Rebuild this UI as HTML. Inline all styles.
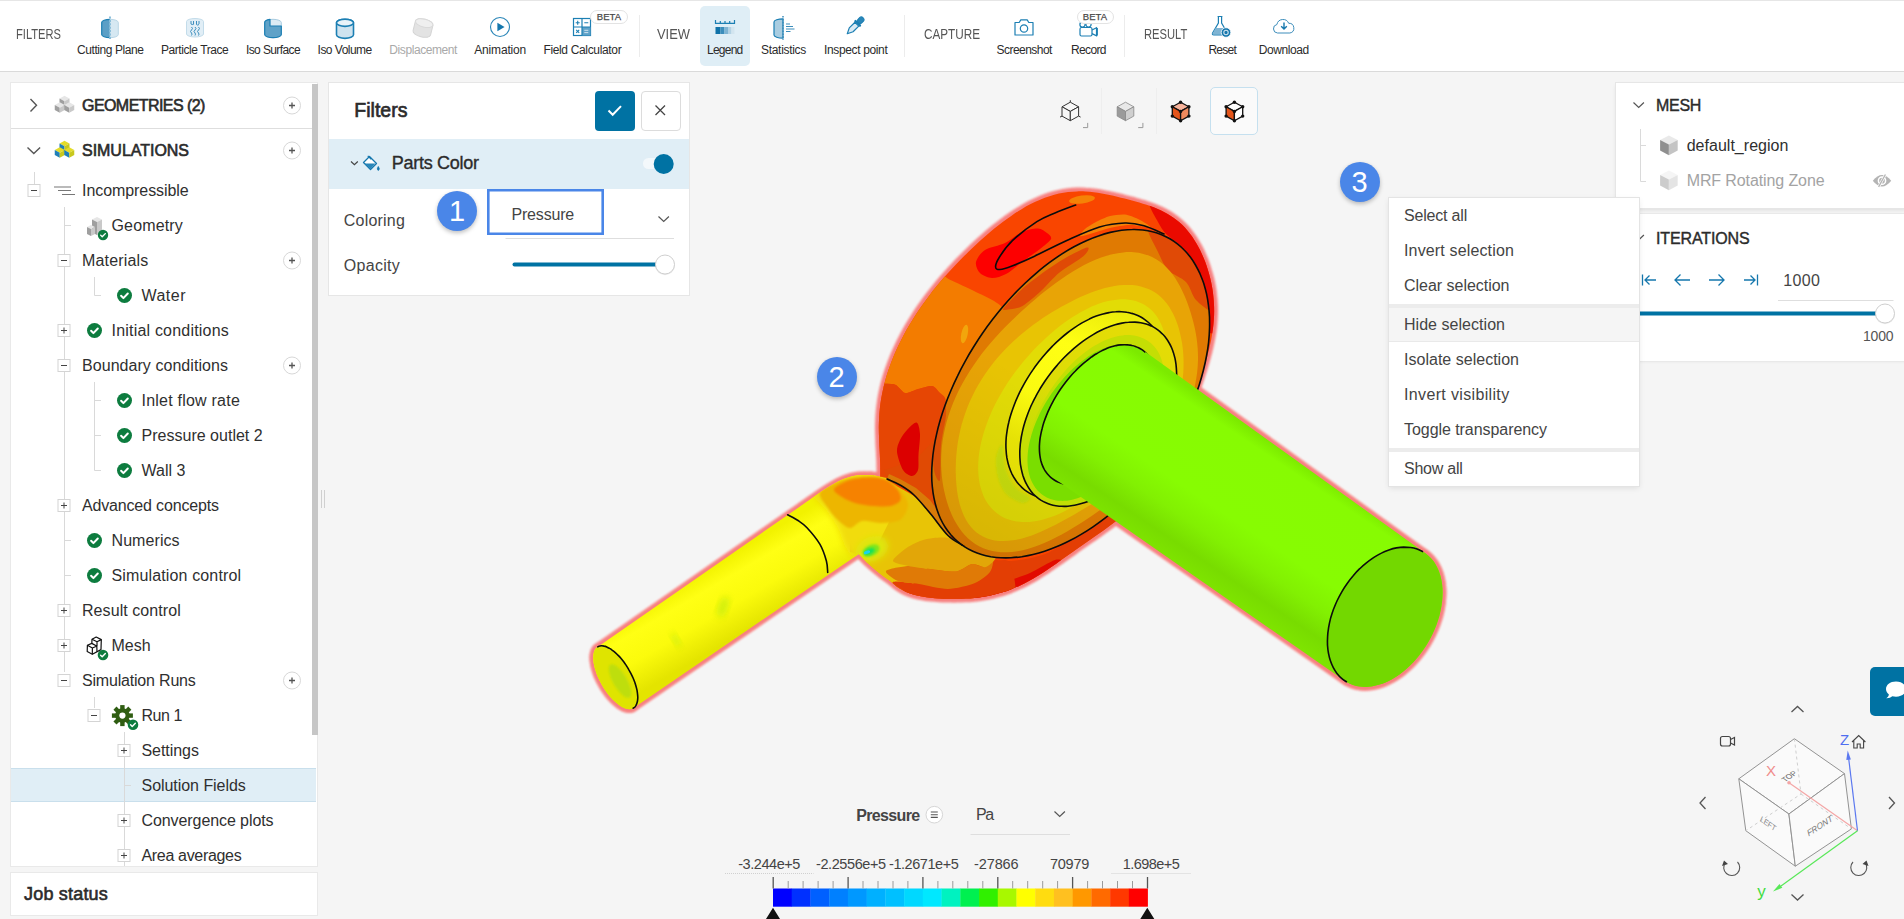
<!DOCTYPE html>
<html><head><meta charset="utf-8"><title>SimScale Post-processor</title>
<style>
html,body{margin:0;padding:0;background:#f5f5f5;}
body{width:1904px;height:919px;overflow:hidden;position:relative;font-family:"Liberation Sans",sans-serif;}
.t{position:absolute;white-space:nowrap;}
.r{position:absolute;}
svg{position:absolute;overflow:visible;}
</style></head><body>
<div class="r" style="left:0px;top:0px;width:1904px;height:70px;background:#fff;border-bottom:1px solid #dadada;border-top:1px solid #e6e6e6;box-sizing:content-box;height:69.5px;"></div>
<div class="t" style="left:15.5px;top:25.3px;font-size:14.5px;line-height:18.12px;color:#555;transform-origin:0 50%;transform:scaleX(0.7686);">FILTERS</div>
<div class="t" style="left:657.0px;top:25.3px;font-size:14.5px;line-height:18.12px;color:#555;transform-origin:0 50%;transform:scaleX(0.8905);">VIEW</div>
<div class="t" style="left:924.0px;top:25.3px;font-size:14.5px;line-height:18.12px;color:#555;transform-origin:0 50%;transform:scaleX(0.8082);">CAPTURE</div>
<div class="t" style="left:1143.7px;top:25.3px;font-size:14.5px;line-height:18.12px;color:#555;transform-origin:0 50%;transform:scaleX(0.7714);">RESULT</div>
<div class="r" style="left:638.5px;top:15px;width:1px;height:42px;background:#ececec;"></div>
<div class="r" style="left:904px;top:15px;width:1px;height:42px;background:#ececec;"></div>
<div class="r" style="left:1123.5px;top:15px;width:1px;height:42px;background:#ececec;"></div>
<div class="r" style="left:700px;top:6px;width:50px;height:59.5px;background:#dfeef6;border-radius:5px;"></div>
<div class="t" style="left:77.0px;top:42.5px;font-size:12px;line-height:15.00px;color:#2b2b2b;letter-spacing:-0.427px;">Cutting Plane</div>
<div class="t" style="left:161.0px;top:42.5px;font-size:12px;line-height:15.00px;color:#2b2b2b;letter-spacing:-0.433px;">Particle Trace</div>
<div class="t" style="left:246.0px;top:42.5px;font-size:12px;line-height:15.00px;color:#2b2b2b;letter-spacing:-0.609px;">Iso Surface</div>
<div class="t" style="left:317.6px;top:42.5px;font-size:12px;line-height:15.00px;color:#2b2b2b;letter-spacing:-0.527px;">Iso Volume</div>
<div class="t" style="left:389.3px;top:42.5px;font-size:12px;line-height:15.00px;color:#a9a9a9;letter-spacing:-0.417px;">Displacement</div>
<div class="t" style="left:474.3px;top:42.5px;font-size:12px;line-height:15.00px;color:#2b2b2b;letter-spacing:-0.185px;">Animation</div>
<div class="t" style="left:543.4px;top:42.5px;font-size:12px;line-height:15.00px;color:#2b2b2b;letter-spacing:-0.342px;">Field Calculator</div>
<div class="t" style="left:707.0px;top:42.5px;font-size:12px;line-height:15.00px;color:#2b2b2b;letter-spacing:-0.757px;">Legend</div>
<div class="t" style="left:761.0px;top:42.5px;font-size:12px;line-height:15.00px;color:#2b2b2b;letter-spacing:-0.301px;">Statistics</div>
<div class="t" style="left:824.0px;top:42.5px;font-size:12px;line-height:15.00px;color:#2b2b2b;letter-spacing:-0.357px;">Inspect point</div>
<div class="t" style="left:996.6px;top:42.5px;font-size:12px;line-height:15.00px;color:#2b2b2b;letter-spacing:-0.551px;">Screenshot</div>
<div class="t" style="left:1071.0px;top:42.5px;font-size:12px;line-height:15.00px;color:#2b2b2b;letter-spacing:-0.648px;">Record</div>
<div class="t" style="left:1208.4px;top:42.5px;font-size:12px;line-height:15.00px;color:#2b2b2b;letter-spacing:-0.750px;">Reset</div>
<div class="t" style="left:1258.8px;top:42.5px;font-size:12px;line-height:15.00px;color:#2b2b2b;letter-spacing:-0.421px;">Download</div>
<svg width="1904" height="70" style="left:0;top:0"><g transform="translate(110,28.5)"><path d="M-8.3,-6 v12 a8.3,3.2 0 0 0 8.3,3.2 v-18.4 a8.3,3.2 0 0 0 -8.3,3.2z" fill="#5b9fc6" stroke="#1c7fb3" stroke-width="1.2"/><path d="M0,9.2 a8.3,3.2 0 0 0 8.3,-3.2 v-12 a8.3,3.2 0 0 0 -8.3,-3.2z" fill="#d6e8f2" stroke="#b9d6e6" stroke-width="1"/><line x1="0" y1="-12" x2="0" y2="11.5" stroke="#86bcda" stroke-width="1.9" stroke-dasharray="2 1.4"/></g><g transform="translate(195,28)"><path d="M-8.5,-6.5 v12.5 a8.5,3 0 0 0 17,0 v-12.5 a8.5,3 0 0 0 -17,0z" fill="#e1eef6" stroke="#c3dcea" stroke-width="1"/><g stroke="#3f8fbe" stroke-width="1" fill="none"><path d="M-4,-7 v3 M-1.5,-7 v3.5 M1.5,-7 v3.5 M4,-7 v3 M-4,-4 q1.2,1.2 2.5,0 M1.5,-3.5 q1.2,1.2 2.5,0"/><path d="M-3.5,-1 q2,1.5 0,3 q-2,1.5 0,3 q1,1 0,2.5 M0,-1 q2,1.5 0,3 q-2,1.5 0,3 q1,1 0,2.5 M3.5,-1 q2,1.5 0,3 q-2,1.5 0,3 q1,1 0,2.5"/></g></g><g transform="translate(273,28.5)"><path d="M-8.3,-6 v12 a8.3,3.2 0 0 0 16.6,0 v-12 a8.3,3.2 0 0 0 -16.6,0z" fill="#dcebf4" stroke="#a9cce0" stroke-width="1"/><path d="M-8.3,-6 v12 a8.3,3.2 0 0 0 16.6,0 v-8.5 h-11.3 v-6.6 a8.3,3.2 0 0 0 -5.3,3.1z" fill="#5fa2c8" stroke="#1c7fb3" stroke-width="1.2" stroke-linejoin="round"/></g><g transform="translate(345,28.8)"><path d="M-8.5,-6 v12 a8.5,3.6 0 0 0 17,0 v-12 a8.5,3.6 0 0 0 -17,0z" fill="#cfe3ef" stroke="#1c7fb3" stroke-width="1.6"/><ellipse cx="0" cy="-6" rx="8.5" ry="3.6" fill="#e9f3f9" stroke="#1c7fb3" stroke-width="1.6"/></g><g transform="translate(423,28) rotate(14)"><path d="M-9,-5 v10 a9,4 0 0 0 18,0 v-10 a9,4 0 0 0 -18,0z" fill="#e3e3e3" stroke="#d4d4d4" stroke-width="1"/><ellipse cx="0" cy="-5" rx="9" ry="4" fill="#efefef" stroke="#d9d9d9" stroke-width="1"/></g><g transform="translate(500,27)"><circle r="9.5" fill="#fff" stroke="#2a86b8" stroke-width="1.1"/><path d="M-2.6,-4.2 L4.6,0 L-2.6,4.2z" fill="#1577ad"/></g><g transform="translate(582,27)"><rect x="-8.5" y="-8.5" width="17" height="17" fill="#fff" stroke="#1c7fb3" stroke-width="1.2"/><rect x="0" y="0" width="8.5" height="8.5" fill="#5fa2c8"/><path d="M0,-8.5 v17 M-8.5,0 h17" stroke="#1c7fb3" stroke-width="1.2"/><path d="M-6.3,-4.3 h4 M-4.3,-6.3 v4 M2.3,-4.3 h4 M-5.8,2.8 l3,3 M-2.8,2.8 l-3,3" stroke="#1c7fb3" stroke-width="1.1" fill="none"/><path d="M2.3,3.3 h4 M2.3,5.6 h4" stroke="#cfe3ef" stroke-width="1"/></g><g transform="translate(725,27)"><path d="M-9.5,-7 v3.3 h19 v-3.3 M-4.7,-6 v2.3 M0,-6 v2.3 M4.7,-6 v2.3" stroke="#1c7fb3" stroke-width="1.2" fill="none"/><rect x="-9.5" y="0" width="5" height="7" fill="#0f72a8"/><rect x="-4.5" y="0" width="4" height="7" fill="#3c8dbb"/><rect x="-0.5" y="0" width="4" height="7" fill="#7fb4d3"/><rect x="3.5" y="0" width="3" height="7" fill="#b3d2e4"/><rect x="6.5" y="0" width="3" height="7" fill="#d3e5ef"/></g><g transform="translate(783,28)"><path d="M0,-9.2 a9,3.2 0 0 0 -9,3.2 v13 a9,3.2 0 0 0 9,3.2z" fill="#a9cde1" stroke="#1c7fb3" stroke-width="1.2"/><line x1="0" y1="-12" x2="0" y2="12" stroke="#3c8dbb" stroke-width="1.5" stroke-dasharray="1.6 1.3"/><path d="M3,-4 h4 M3,-1.5 h7 M3,1 h8.5 M3,3.5 h4.5" stroke="#3c8dbb" stroke-width="1.1"/></g><g transform="translate(855,26) rotate(45)"><rect x="-2.6" y="-11.5" width="5.2" height="7" rx="2.4" fill="#2a86b8" stroke="#1c7fb3" stroke-width="1"/><rect x="-4.3" y="-5" width="8.6" height="2.4" rx="1" fill="#1c7fb3"/><path d="M-2.7,-2.6 h5.4 v8 l-2.7,5.5 l-2.7,-5.5z" fill="#d9eaf4" stroke="#1c7fb3" stroke-width="1.2" stroke-linejoin="round"/></g><g transform="translate(1024,28)" fill="none" stroke="#1c7fb3" stroke-width="1.2"><path d="M-9,-5.5 h4.2 l1.6,-2.6 h6.4 l1.6,2.6 h4.2 v12.5 h-18z" stroke-linejoin="round"/><circle cx="0" cy="0.5" r="3.7"/></g><g transform="translate(1088,31)" fill="none" stroke="#1c7fb3" stroke-width="1.2"><rect x="-8" y="-3.5" width="12" height="8.5" rx="1.5"/><path d="M4,-1 l4.5,-2.2 v8 l-4.5,-2.2"/><rect x="8.3" y="-3" width="1.6" height="7.6" fill="#1c7fb3" stroke="none"/><circle cx="-5.5" cy="-6.5" r="2.6"/><circle cx="0.5" cy="-6.5" r="2.6"/></g><g transform="translate(1220,27)"><path d="M-2.4,-10.5 h4.8 M-1.6,-10.5 v6.5 l-5.8,10 q-0.8,1.8 1.2,1.8 h12.4 q2,0 1.2,-1.8 l-5.8,-10 v-6.5" fill="none" stroke="#1c7fb3" stroke-width="1.2"/><path d="M-4.3,1 h8.6 l3,5.2 q0.6,1.3 -0.8,1.3 h-13 q-1.4,0 -0.8,-1.3z" fill="#7fb4d3"/><circle cx="6" cy="5.5" r="4.8" fill="#1577ad" stroke="#fff" stroke-width="0.8"/><circle cx="6" cy="5.5" r="2.2" fill="none" stroke="#cfe3ef" stroke-width="1.1"/></g><g transform="translate(1284,27)"><path d="M-6.5,6 a4.3,4.3 0 0 1 -0.6,-8.5 a6.2,6.2 0 0 1 11.8,-1.2 a4.9,4.9 0 0 1 1.2,9.7z" fill="#fff" stroke="#3c8dbb" stroke-width="1"/><path d="M0,-4.5 v5.5 M-2.8,-0.8 l2.8,2.8 l2.8,-2.8" fill="none" stroke="#1577ad" stroke-width="1.4"/></g></svg>
<div class="t" style="left:590px;top:9.5px;width:38px;height:14px;box-sizing:border-box;border:1px solid #e3e3e3;border-radius:8px;background:#fff;font-size:9.5px;line-height:12.5px;text-align:center;color:#4a4a4a;letter-spacing:0.1px;-webkit-text-stroke:0.25px #4a4a4a">BETA</div>
<div class="t" style="left:1076.5px;top:9.5px;width:37px;height:14px;box-sizing:border-box;border:1px solid #e3e3e3;border-radius:8px;background:#fff;font-size:9.5px;line-height:12.5px;text-align:center;color:#4a4a4a;letter-spacing:0.1px;-webkit-text-stroke:0.25px #4a4a4a">BETA</div>
<div class="r" style="left:11px;top:83px;width:306px;height:783px;background:#fff;box-shadow:0 0 0 1px #e9e9e9;"></div>
<div class="r" style="left:312px;top:84px;width:5.5px;height:651px;background:#c6c6c6;"></div>
<div class="r" style="left:11px;top:128px;width:301px;height:1px;background:#dedede;"></div>
<div class="r" style="left:11px;top:768px;width:305px;height:34px;background:#e0eef6;border-top:1px solid #c9dfec;border-bottom:1px solid #c9dfec;box-sizing:border-box;"></div>
<div class="t" style="left:82.0px;top:95.5px;font-size:16px;line-height:20.00px;color:#2b2b2b;letter-spacing:-0.563px;-webkit-text-stroke:0.6px #2b2b2b;">GEOMETRIES (2)</div>
<div class="t" style="left:82.0px;top:140.5px;font-size:16px;line-height:20.00px;color:#2b2b2b;letter-spacing:-0.025px;-webkit-text-stroke:0.6px #2b2b2b;">SIMULATIONS</div>
<div class="t" style="left:82.0px;top:180.5px;font-size:16px;line-height:20.00px;color:#2f2f2f;letter-spacing:-0.065px;">Incompressible</div>
<div class="t" style="left:111.5px;top:215.5px;font-size:16px;line-height:20.00px;color:#2f2f2f;letter-spacing:0.157px;">Geometry</div>
<div class="t" style="left:82.0px;top:250.5px;font-size:16px;line-height:20.00px;color:#2f2f2f;letter-spacing:0.177px;">Materials</div>
<div class="t" style="left:141.5px;top:285.5px;font-size:16px;line-height:20.00px;color:#2f2f2f;letter-spacing:0.484px;">Water</div>
<div class="t" style="left:111.5px;top:320.5px;font-size:16px;line-height:20.00px;color:#2f2f2f;letter-spacing:0.203px;">Initial conditions</div>
<div class="t" style="left:82.0px;top:355.5px;font-size:16px;line-height:20.00px;color:#2f2f2f;letter-spacing:0.053px;">Boundary conditions</div>
<div class="t" style="left:141.5px;top:390.5px;font-size:16px;line-height:20.00px;color:#2f2f2f;letter-spacing:0.223px;">Inlet flow rate</div>
<div class="t" style="left:141.5px;top:425.5px;font-size:16px;line-height:20.00px;color:#2f2f2f;letter-spacing:0.014px;">Pressure outlet 2</div>
<div class="t" style="left:141.5px;top:460.5px;font-size:16px;line-height:20.00px;color:#2f2f2f;letter-spacing:0.023px;">Wall 3</div>
<div class="t" style="left:82.0px;top:495.5px;font-size:16px;line-height:20.00px;color:#2f2f2f;letter-spacing:-0.168px;">Advanced concepts</div>
<div class="t" style="left:111.5px;top:530.5px;font-size:16px;line-height:20.00px;color:#2f2f2f;letter-spacing:0.079px;">Numerics</div>
<div class="t" style="left:111.5px;top:565.5px;font-size:16px;line-height:20.00px;color:#2f2f2f;letter-spacing:0.140px;">Simulation control</div>
<div class="t" style="left:82.0px;top:600.5px;font-size:16px;line-height:20.00px;color:#2f2f2f;letter-spacing:0.070px;">Result control</div>
<div class="t" style="left:111.5px;top:635.5px;font-size:16px;line-height:20.00px;color:#2f2f2f;letter-spacing:-0.007px;">Mesh</div>
<div class="t" style="left:82.0px;top:670.5px;font-size:16px;line-height:20.00px;color:#2f2f2f;letter-spacing:-0.194px;">Simulation Runs</div>
<div class="t" style="left:141.5px;top:705.5px;font-size:16px;line-height:20.00px;color:#2f2f2f;letter-spacing:-0.439px;">Run 1</div>
<div class="t" style="left:141.5px;top:740.5px;font-size:16px;line-height:20.00px;color:#2f2f2f;letter-spacing:-0.052px;">Settings</div>
<div class="t" style="left:141.5px;top:775.5px;font-size:16px;line-height:20.00px;color:#2f2f2f;letter-spacing:-0.043px;">Solution Fields</div>
<div class="t" style="left:141.5px;top:810.5px;font-size:16px;line-height:20.00px;color:#2f2f2f;letter-spacing:-0.083px;">Convergence plots</div>
<div class="t" style="left:141.5px;top:845.5px;font-size:16px;line-height:20.00px;color:#2f2f2f;letter-spacing:-0.328px;">Area averages</div>
<svg width="330" height="919" style="left:0;top:0"><path d="M34.5,172 V184 M64.5,207 V672 M64.5,225.5 H71 M94.5,277 V295.5 H101 M94.5,382 V470.5 H101 M94.5,400.5 H101 M94.5,435.5 H101 M64.5,540.5 H71 M64.5,575.5 H71 M94.5,697 V708 M124.5,732 V866 M124.5,785.5 H131" stroke="#d9d9d9" stroke-width="1" fill="none"/><path d="M30.5,99 l6,6.2 l-6,6.2" fill="none" stroke="#555" stroke-width="1.4"/><path d="M27.5,147.5 l6.3,6 l6.3,-6" fill="none" stroke="#555" stroke-width="1.4"/><path d="M64.5,95.75 l5,2.75 l-5,2.75 l-5,-2.75 z" fill="#e6e6e6"/><path d="M59.5,98.5 l5,2.75 v5 l-5,-2.75 z" fill="#9f9f9f"/><path d="M69.5,98.5 l-5,2.75 v5 l5,-2.75 z" fill="#c9c9c9"/><path d="M59.75,102.25 l5,2.75 l-5,2.75 l-5,-2.75 z" fill="#e6e6e6"/><path d="M54.75,105 l5,2.75 v5 l-5,-2.75 z" fill="#9f9f9f"/><path d="M64.75,105 l-5,2.75 v5 l5,-2.75 z" fill="#c9c9c9"/><path d="M69.25,102.25 l5,2.75 l-5,2.75 l-5,-2.75 z" fill="#e6e6e6"/><path d="M64.25,105 l5,2.75 v5 l-5,-2.75 z" fill="#9f9f9f"/><path d="M74.25,105 l-5,2.75 v5 l5,-2.75 z" fill="#c9c9c9"/><path d="M64.5,140.75 l5,2.75 l-5,2.75 l-5,-2.75 z" fill="#e3dc2a"/><path d="M59.5,143.5 l5,2.75 v5 l-5,-2.75 z" fill="#1f7fb8"/><path d="M69.5,143.5 l-5,2.75 v5 l5,-2.75 z" fill="#c8c81e"/><path d="M59.75,147.25 l5,2.75 l-5,2.75 l-5,-2.75 z" fill="#e3dc2a"/><path d="M54.75,150 l5,2.75 v5 l-5,-2.75 z" fill="#1f7fb8"/><path d="M64.75,150 l-5,2.75 v5 l5,-2.75 z" fill="#c8c81e"/><path d="M69.25,147.25 l5,2.75 l-5,2.75 l-5,-2.75 z" fill="#e3dc2a"/><path d="M64.25,150 l5,2.75 v5 l-5,-2.75 z" fill="#1f7fb8"/><path d="M74.25,150 l-5,2.75 v5 l5,-2.75 z" fill="#c8c81e"/><circle cx="292" cy="105.5" r="8.5" fill="#fff" stroke="#d8d8d8" stroke-width="1"/><path d="M289,105.5 h6 M292,102.5 v6" stroke="#555" stroke-width="1.3"/><circle cx="292" cy="150.5" r="8.5" fill="#fff" stroke="#d8d8d8" stroke-width="1"/><path d="M289,150.5 h6 M292,147.5 v6" stroke="#555" stroke-width="1.3"/><rect x="28" y="184.5" width="12" height="12" fill="#fff" stroke="#d4d4d4" stroke-width="1"/><path d="M31,190.5 h6" stroke="#444" stroke-width="1"/><path d="M54,187 h17 M58,190.5 h13 M62,194.5 h13" stroke="#777" stroke-width="1.1"/><g transform="translate(0,0)"><path d="M92,219.5 l5,-2.5 l5,2.5 l-5,2.5z" fill="#e6e6e6"/><path d="M92,219.5 l5,2.5 v13 l-5,-2.5z" fill="#9f9f9f"/><path d="M102,219.5 l-5,2.5 v13 l5,-2.5z" fill="#c9c9c9"/><path d="M87,227 l4,-2 l4,2 l-4,2z" fill="#e6e6e6"/><path d="M87,227 l4,2 v7 l-4,-2z" fill="#9f9f9f"/><path d="M95,227 l-4,2 v7 l4,-2z" fill="#c9c9c9"/></g><circle cx="103" cy="235" r="5.2" fill="#0d7c3f"/><path d="M100.643,235.139 l1.59467,1.664 l3.05067,-3.18933" stroke="#fff" stroke-width="1.38667" fill="none" stroke-linecap="round" stroke-linejoin="round"/><rect x="58" y="254.5" width="12" height="12" fill="#fff" stroke="#d4d4d4" stroke-width="1"/><path d="M61,260.5 h6" stroke="#444" stroke-width="1"/><circle cx="292" cy="260.5" r="8.5" fill="#fff" stroke="#d8d8d8" stroke-width="1"/><path d="M289,260.5 h6 M292,257.5 v6" stroke="#555" stroke-width="1.3"/><circle cx="124.5" cy="295.5" r="7.5" fill="#0d7c3f"/><path d="M121.1,295.7 l2.3,2.4 l4.4,-4.6" stroke="#fff" stroke-width="2" fill="none" stroke-linecap="round" stroke-linejoin="round"/><rect x="58" y="324.5" width="12" height="12" fill="#fff" stroke="#d4d4d4" stroke-width="1"/><path d="M61,330.5 h6" stroke="#444" stroke-width="1"/><path d="M64,327.5 v6" stroke="#444" stroke-width="1"/><circle cx="94.5" cy="330.5" r="7.5" fill="#0d7c3f"/><path d="M91.1,330.7 l2.3,2.4 l4.4,-4.6" stroke="#fff" stroke-width="2" fill="none" stroke-linecap="round" stroke-linejoin="round"/><rect x="58" y="359.5" width="12" height="12" fill="#fff" stroke="#d4d4d4" stroke-width="1"/><path d="M61,365.5 h6" stroke="#444" stroke-width="1"/><circle cx="292" cy="365.5" r="8.5" fill="#fff" stroke="#d8d8d8" stroke-width="1"/><path d="M289,365.5 h6 M292,362.5 v6" stroke="#555" stroke-width="1.3"/><circle cx="124.5" cy="400.5" r="7.5" fill="#0d7c3f"/><path d="M121.1,400.7 l2.3,2.4 l4.4,-4.6" stroke="#fff" stroke-width="2" fill="none" stroke-linecap="round" stroke-linejoin="round"/><circle cx="124.5" cy="435.5" r="7.5" fill="#0d7c3f"/><path d="M121.1,435.7 l2.3,2.4 l4.4,-4.6" stroke="#fff" stroke-width="2" fill="none" stroke-linecap="round" stroke-linejoin="round"/><circle cx="124.5" cy="470.5" r="7.5" fill="#0d7c3f"/><path d="M121.1,470.7 l2.3,2.4 l4.4,-4.6" stroke="#fff" stroke-width="2" fill="none" stroke-linecap="round" stroke-linejoin="round"/><rect x="58" y="499.5" width="12" height="12" fill="#fff" stroke="#d4d4d4" stroke-width="1"/><path d="M61,505.5 h6" stroke="#444" stroke-width="1"/><path d="M64,502.5 v6" stroke="#444" stroke-width="1"/><circle cx="94.5" cy="540.5" r="7.5" fill="#0d7c3f"/><path d="M91.1,540.7 l2.3,2.4 l4.4,-4.6" stroke="#fff" stroke-width="2" fill="none" stroke-linecap="round" stroke-linejoin="round"/><circle cx="94.5" cy="575.5" r="7.5" fill="#0d7c3f"/><path d="M91.1,575.7 l2.3,2.4 l4.4,-4.6" stroke="#fff" stroke-width="2" fill="none" stroke-linecap="round" stroke-linejoin="round"/><rect x="58" y="604.5" width="12" height="12" fill="#fff" stroke="#d4d4d4" stroke-width="1"/><path d="M61,610.5 h6" stroke="#444" stroke-width="1"/><path d="M64,607.5 v6" stroke="#444" stroke-width="1"/><rect x="58" y="639.5" width="12" height="12" fill="#fff" stroke="#d4d4d4" stroke-width="1"/><path d="M61,645.5 h6" stroke="#444" stroke-width="1"/><path d="M64,642.5 v6" stroke="#444" stroke-width="1"/><g fill="none" stroke="#111" stroke-width="1.2" stroke-linejoin="round"><path d="M92,639.2 L96.2,637 L101.3,639.6 L101,649.6 L92.3,654.3 L87.2,651.5 L87.4,645.3 L91.8,643.4Z"/><path d="M92,639.2 L97,641.8 L101.3,639.6 M97,641.8 V646.2 M87.4,645.3 L92.4,648 L97,646 M92.4,648 L92.3,654.3 M91.8,643.4 L96.6,646 M96.8,646.3 L97,651.8"/></g><circle cx="103" cy="655" r="5.3" fill="#0d7c3f"/><path d="M100.597,655.141 l1.62533,1.696 l3.10933,-3.25067" stroke="#fff" stroke-width="1.41333" fill="none" stroke-linecap="round" stroke-linejoin="round"/><rect x="58" y="674.5" width="12" height="12" fill="#fff" stroke="#d4d4d4" stroke-width="1"/><path d="M61,680.5 h6" stroke="#444" stroke-width="1"/><circle cx="292" cy="680.5" r="8.5" fill="#fff" stroke="#d8d8d8" stroke-width="1"/><path d="M289,680.5 h6 M292,677.5 v6" stroke="#555" stroke-width="1.3"/><rect x="88" y="709.5" width="12" height="12" fill="#fff" stroke="#d4d4d4" stroke-width="1"/><path d="M91,715.5 h6" stroke="#444" stroke-width="1"/><g transform="translate(122.4,715.6)"><rect x="-2.2" y="-10.5" width="4.4" height="5" fill="#2f5d12" transform="rotate(0)"/><rect x="-2.2" y="-10.5" width="4.4" height="5" fill="#2f5d12" transform="rotate(45)"/><rect x="-2.2" y="-10.5" width="4.4" height="5" fill="#2f5d12" transform="rotate(90)"/><rect x="-2.2" y="-10.5" width="4.4" height="5" fill="#2f5d12" transform="rotate(135)"/><rect x="-2.2" y="-10.5" width="4.4" height="5" fill="#2f5d12" transform="rotate(180)"/><rect x="-2.2" y="-10.5" width="4.4" height="5" fill="#2f5d12" transform="rotate(225)"/><rect x="-2.2" y="-10.5" width="4.4" height="5" fill="#2f5d12" transform="rotate(270)"/><rect x="-2.2" y="-10.5" width="4.4" height="5" fill="#2f5d12" transform="rotate(315)"/><circle r="7.3" fill="#2f5d12"/><circle r="3.1" fill="#fff"/></g><circle cx="133" cy="724.7" r="5.3" fill="#0d7c3f"/><path d="M130.597,724.841 l1.62533,1.696 l3.10933,-3.25067" stroke="#fff" stroke-width="1.41333" fill="none" stroke-linecap="round" stroke-linejoin="round"/><rect x="118" y="744.5" width="12" height="12" fill="#fff" stroke="#d4d4d4" stroke-width="1"/><path d="M121,750.5 h6" stroke="#444" stroke-width="1"/><path d="M124,747.5 v6" stroke="#444" stroke-width="1"/><rect x="118" y="814.5" width="12" height="12" fill="#fff" stroke="#d4d4d4" stroke-width="1"/><path d="M121,820.5 h6" stroke="#444" stroke-width="1"/><path d="M124,817.5 v6" stroke="#444" stroke-width="1"/><rect x="118" y="849.5" width="12" height="12" fill="#fff" stroke="#d4d4d4" stroke-width="1"/><path d="M121,855.5 h6" stroke="#444" stroke-width="1"/><path d="M124,852.5 v6" stroke="#444" stroke-width="1"/></svg>
<div class="r" style="left:320.5px;top:490px;width:1px;height:18px;background:#d0d0d0;"></div>
<div class="r" style="left:323.5px;top:490px;width:1px;height:18px;background:#d0d0d0;"></div>
<div class="r" style="left:11px;top:873px;width:306px;height:42px;background:#fff;box-shadow:0 0 0 1px #e9e9e9;"></div>
<div class="t" style="left:24.0px;top:882.8px;font-size:18px;line-height:22.50px;color:#2b2b2b;letter-spacing:0.195px;-webkit-text-stroke:0.6px #2b2b2b;">Job status</div>
<div class="r" style="left:329px;top:83px;width:360px;height:212px;background:#fff;box-shadow:0 0 0 1px #e6e6e6;"></div>
<div class="t" style="left:354.3px;top:97.8px;font-size:19.5px;line-height:24.38px;color:#2b2b2b;letter-spacing:0.002px;-webkit-text-stroke:0.65px #2b2b2b;">Filters</div>
<div class="r" style="left:595px;top:91px;width:40px;height:40px;background:#0072a3;border-radius:4px;"></div>
<div class="r" style="left:640.5px;top:91px;width:39px;height:39px;background:#fff;border:1px solid #dcdcdc;border-radius:4px;box-sizing:border-box;width:40px;height:40px;"></div>
<div class="r" style="left:329px;top:138.5px;width:360px;height:50.5px;background:#e0eef6;"></div>
<svg width="1904" height="320" style="left:0;top:0"><path d="M608.5,110.5 l4.2,4.2 l8.3,-8.6" fill="none" stroke="#fff" stroke-width="2"/><path d="M655.5,105.5 l9.5,9.5 M665,105.5 l-9.5,9.5" fill="none" stroke="#444" stroke-width="1.3"/><path d="M351,161.5 l3.4,3.2 l3.4,-3.2" fill="none" stroke="#444" stroke-width="1.2"/><g transform="translate(371,163.5)"><path d="M-1.5,-7 l7,7 l-6,6 l-7,-7z" fill="#fff" stroke="#1577ad" stroke-width="1.3" stroke-linejoin="round"/><path d="M-6.5,0 h11 l-5,5.5 z" fill="#2a86b8"/><path d="M-3.2,-7.6 l3.5,3.5" stroke="#1577ad" stroke-width="1.3"/><path d="M7.3,3 q2,2.8 0,4 q-2,-1.2 0,-4z" fill="#1577ad" stroke="#1577ad" stroke-width="0.8"/></g><rect x="643" y="158" width="26" height="11" rx="5.5" fill="#f3f8fb"/><circle cx="663.7" cy="164" r="10" fill="#0072a3"/><path d="M658.5,216.5 l5.2,5 l5.2,-5" fill="none" stroke="#555" stroke-width="1.2"/><path d="M505.5,238.5 H674" stroke="#dedede" stroke-width="1"/><path d="M514.5,264.5 H660" stroke="#0072a3" stroke-width="4" stroke-linecap="round"/><circle cx="665" cy="265.3" r="10" fill="#000" opacity="0.08"/><circle cx="665" cy="264.5" r="9.5" fill="#fff" stroke="#cfcfcf" stroke-width="1"/></svg>
<div class="t" style="left:391.8px;top:152.2px;font-size:18px;line-height:22.50px;color:#2b2b2b;letter-spacing:-0.285px;-webkit-text-stroke:0.35px #2b2b2b;">Parts Color</div>
<div class="t" style="left:343.8px;top:210.5px;font-size:16px;line-height:20.00px;color:#444;letter-spacing:0.201px;">Coloring</div>
<div class="t" style="left:343.8px;top:255.5px;font-size:16px;line-height:20.00px;color:#444;letter-spacing:0.280px;">Opacity</div>
<div class="r" style="left:486.5px;top:189px;width:117px;height:45.5px;background:#fff;border:2px solid #4a86e8;box-sizing:border-box;box-shadow:inset 0 0 0 0.6px #4a86e8;"></div>
<div class="t" style="left:511.5px;top:204.5px;font-size:16px;line-height:20.00px;color:#444;letter-spacing:-0.191px;">Pressure</div>
<div class="r" style="left:1210px;top:87px;width:48px;height:48px;background:#fafafa;border:1px solid #c5e0ef;border-radius:5px;box-sizing:border-box;"></div>
<div class="r" style="left:1100.5px;top:88px;width:1px;height:46px;background:#eeeeee;"></div>
<div class="r" style="left:1155.5px;top:88px;width:1px;height:46px;background:#eeeeee;"></div>
<svg width="1904" height="150" style="left:0;top:0"><path d="M1070.3,102.2 l8.3,4.6 l-8.3,4.6 l-8.3,-4.6 z" fill="#f7f7f7" stroke="#333" stroke-width="1" stroke-linejoin="round"/><path d="M1062,106.8 l8.3,4.6 v9.3 l-8.3,-4.6 z" fill="#f7f7f7" stroke="#333" stroke-width="1" stroke-linejoin="round"/><path d="M1078.6,106.8 l-8.3,4.6 v9.3 l8.3,-4.6 z" fill="#f7f7f7" stroke="#333" stroke-width="1" stroke-linejoin="round"/><path d="M1070.3,102.2 v-2 M1062,116.1 l-2,1 M1078.6,116.1 l2,1" stroke="#333" stroke-width="1" fill="none"/><path d="M1125.5,102.2 l8.3,4.6 l-8.3,4.6 l-8.3,-4.6 z" fill="#e8e8e8" stroke="#888" stroke-width="0.8" stroke-linejoin="round"/><path d="M1117.2,106.8 l8.3,4.6 v9.3 l-8.3,-4.6 z" fill="#9b9b9b" stroke="#888" stroke-width="0.8" stroke-linejoin="round"/><path d="M1133.8,106.8 l-8.3,4.6 v9.3 l8.3,-4.6 z" fill="#cfcfcf" stroke="#888" stroke-width="0.8" stroke-linejoin="round"/><path d="M1180.6,102.2 l8.3,4.6 l-8.3,4.6 l-8.3,-4.6 z" fill="#f7b39b" stroke="#111" stroke-width="1.3" stroke-linejoin="round"/><path d="M1172.3,106.8 l8.3,4.6 v9.3 l-8.3,-4.6 z" fill="#e4551b" stroke="#111" stroke-width="1.3" stroke-linejoin="round"/><path d="M1188.9,106.8 l-8.3,4.6 v9.3 l8.3,-4.6 z" fill="#f08a5d" stroke="#111" stroke-width="1.3" stroke-linejoin="round"/><circle cx="1180.6" cy="102.2" r="1.7" fill="#111"/><circle cx="1188.9" cy="106.8" r="1.7" fill="#111"/><circle cx="1172.3" cy="106.8" r="1.7" fill="#111"/><circle cx="1180.6" cy="111.4" r="1.7" fill="#111"/><circle cx="1180.6" cy="120.7" r="1.7" fill="#111"/><circle cx="1188.9" cy="116.1" r="1.7" fill="#111"/><circle cx="1172.3" cy="116.1" r="1.7" fill="#111"/><path d="M1234.4,102.2 l8.3,4.6 l-8.3,4.6 l-8.3,-4.6 z" fill="#fff" stroke="#111" stroke-width="1.3" stroke-linejoin="round"/><path d="M1226.1,106.8 l8.3,4.6 v9.3 l-8.3,-4.6 z" fill="#e4551b" stroke="#111" stroke-width="1.3" stroke-linejoin="round"/><path d="M1242.7,106.8 l-8.3,4.6 v9.3 l8.3,-4.6 z" fill="#fff" stroke="#111" stroke-width="1.3" stroke-linejoin="round"/><circle cx="1234.4" cy="102.2" r="1.7" fill="#111"/><circle cx="1242.7" cy="106.8" r="1.7" fill="#111"/><circle cx="1226.1" cy="106.8" r="1.7" fill="#111"/><circle cx="1234.4" cy="111.4" r="1.7" fill="#111"/><circle cx="1234.4" cy="120.7" r="1.7" fill="#111"/><circle cx="1242.7" cy="116.1" r="1.7" fill="#111"/><circle cx="1226.1" cy="116.1" r="1.7" fill="#111"/><path d="M1083,127.6 h4.7 v-4.7 M1138.2,127.6 h4.7 v-4.7" fill="none" stroke="#999" stroke-width="1"/></svg>
<div class="r" style="left:1616px;top:83px;width:290px;height:124.5px;background:#fff;box-shadow:0 0 0 1px #e6e6e6, 0 2px 4px rgba(0,0,0,0.10);"></div>
<div class="r" style="left:1616px;top:214px;width:290px;height:146.5px;background:#fff;box-shadow:0 0 0 1px #e9e9e9, 0 1px 3px rgba(0,0,0,0.06);"></div>
<svg width="1904" height="400" style="left:0;top:0"><path d="M1633.5,102.5 l5.2,5 l5.2,-5 M1633.5,235 l5.2,5 l5.2,-5" fill="none" stroke="#555" stroke-width="1.2"/><path d="M1640.5,129 V181.5 H1646 M1640.5,145.5 H1646" fill="none" stroke="#dadada" stroke-width="1"/><g opacity="1"><path d="M1668.9,135.4 l8.8,4.6 l-8.8,4.6 l-8.8,-4.6 z" fill="#e9e9e9"/><path d="M1660.1,140 l8.8,4.6 v10.6 l-8.8,-4.6 z" fill="#8f8f8f"/><path d="M1677.7,140 l-8.8,4.6 v10.6 l8.8,-4.6 z" fill="#c4c4c4"/></g><g opacity="0.45"><path d="M1668.9,170.4 l8.8,4.6 l-8.8,4.6 l-8.8,-4.6 z" fill="#e9e9e9"/><path d="M1660.1,175 l8.8,4.6 v10.6 l-8.8,-4.6 z" fill="#8f8f8f"/><path d="M1677.7,175 l-8.8,4.6 v10.6 l8.8,-4.6 z" fill="#c4c4c4"/></g><g transform="translate(1882,180.7)"><path d="M-9.2,0 q9.2,-11.6 18.4,0 q-9.2,11.6 -18.4,0z" fill="#b4b4b4"/><circle r="3.6" fill="none" stroke="#fff" stroke-width="1.5"/><path d="M-3.6,6.6 L3.6,-6.6" stroke="#fff" stroke-width="2.6"/><path d="M-3.4,6.2 L3.4,-6.2" stroke="#b4b4b4" stroke-width="1.3"/></g><g fill="none" stroke="#1577ad" stroke-width="1.3"><path d="M1642.5,274.5 v11 M1645,280 h11 M1649.5,275.5 l-4.5,4.5 l4.5,4.5"/><path d="M1675,280 h15 M1680.5,274.5 l-5.5,5.5 l5.5,5.5"/><path d="M1709,280 h15 M1718.5,274.5 l5.5,5.5 l-5.5,5.5"/><path d="M1757.5,274.5 v11 M1744,280 h11 M1750.5,275.5 l4.5,4.5 l-4.5,4.5"/></g><path d="M1778,300.5 H1893.5" stroke="#dedede" stroke-width="1"/><path d="M1630,313.5 H1880" stroke="#0072a3" stroke-width="4" stroke-linecap="round"/><circle cx="1885" cy="314.3" r="10" fill="#000" opacity="0.08"/><circle cx="1885" cy="313.5" r="9.5" fill="#fff" stroke="#cfcfcf" stroke-width="1"/></svg>
<div class="t" style="left:1656.0px;top:95.5px;font-size:16px;line-height:20.00px;color:#2b2b2b;letter-spacing:-0.307px;-webkit-text-stroke:0.4px #2b2b2b;">MESH</div>
<div class="t" style="left:1656.0px;top:228.6px;font-size:16px;line-height:20.00px;color:#2b2b2b;letter-spacing:-0.122px;-webkit-text-stroke:0.4px #2b2b2b;">ITERATIONS</div>
<div class="t" style="left:1686.7px;top:135.5px;font-size:16px;line-height:20.00px;color:#2f2f2f;letter-spacing:0.020px;">default_region</div>
<div class="t" style="left:1686.7px;top:170.5px;font-size:16px;line-height:20.00px;color:#a3a3a3;letter-spacing:-0.107px;">MRF Rotating Zone</div>
<div class="t" style="left:1783.3px;top:270.8px;font-size:16px;line-height:20.00px;color:#444;letter-spacing:0.376px;">1000</div>
<div class="t" style="left:1863.0px;top:327.6px;font-size:14px;line-height:17.50px;color:#555;letter-spacing:-0.186px;">1000</div>
<div class="t" style="left:856.2px;top:805.5px;font-size:16px;line-height:20.00px;color:#444;font-weight:700;letter-spacing:-0.637px;">Pressure</div>
<div class="t" style="left:975.9px;top:805.0px;font-size:16px;line-height:20.00px;color:#444;letter-spacing:-1.236px;">Pa</div>
<svg width="1904" height="919" style="left:0;top:0"><circle cx="934.3" cy="814.7" r="8.3" fill="#fff" stroke="#d6d6d6" stroke-width="1"/><path d="M930.8,812 h7 M930.8,814.7 h7 M930.8,817.4 h7" stroke="#555" stroke-width="1.1"/><path d="M1054.5,811.5 l5.2,5 l5.2,-5" fill="none" stroke="#555" stroke-width="1.2"/><path d="M970.5,834.5 H1070" stroke="#dedede" stroke-width="1"/><path d="M725,873.5 H813.5 M1111.5,873.5 H1191" stroke="#d0d0d0" stroke-width="1" stroke-dasharray="1 1"/><rect x="773.00" y="888.5" width="19.03" height="18.2" fill="#0000ff"/><rect x="791.73" y="888.5" width="19.03" height="18.2" fill="#0030ff"/><rect x="810.46" y="888.5" width="19.03" height="18.2" fill="#0060ff"/><rect x="829.19" y="888.5" width="19.03" height="18.2" fill="#0080ff"/><rect x="847.92" y="888.5" width="19.03" height="18.2" fill="#0098ff"/><rect x="866.65" y="888.5" width="19.03" height="18.2" fill="#00b0ff"/><rect x="885.38" y="888.5" width="19.03" height="18.2" fill="#00c0ff"/><rect x="904.11" y="888.5" width="19.03" height="18.2" fill="#00d8ff"/><rect x="922.84" y="888.5" width="19.03" height="18.2" fill="#00e8ff"/><rect x="941.57" y="888.5" width="19.03" height="18.2" fill="#00f2c0"/><rect x="960.30" y="888.5" width="19.03" height="18.2" fill="#00f050"/><rect x="979.03" y="888.5" width="19.03" height="18.2" fill="#30f000"/><rect x="997.76" y="888.5" width="19.03" height="18.2" fill="#a8f800"/><rect x="1016.49" y="888.5" width="19.03" height="18.2" fill="#ffff00"/><rect x="1035.22" y="888.5" width="19.03" height="18.2" fill="#ffdc10"/><rect x="1053.95" y="888.5" width="19.03" height="18.2" fill="#ffc020"/><rect x="1072.68" y="888.5" width="19.03" height="18.2" fill="#ff9800"/><rect x="1091.41" y="888.5" width="19.03" height="18.2" fill="#ff6a00"/><rect x="1110.14" y="888.5" width="19.03" height="18.2" fill="#ff3800"/><rect x="1128.87" y="888.5" width="19.03" height="18.2" fill="#ff0000"/><path d="M788.2,881 V888.5 M803.1,881 V888.5 M818.1,881 V888.5 M833.1,881 V888.5 M863.0,881 V888.5 M878.0,881 V888.5 M893.0,881 V888.5 M907.9,881 V888.5 M937.9,881 V888.5 M952.8,881 V888.5 M967.8,881 V888.5 M982.8,881 V888.5 M1012.7,881 V888.5 M1027.7,881 V888.5 M1042.7,881 V888.5 M1057.6,881 V888.5 M1087.6,881 V888.5 M1102.5,881 V888.5 M1117.5,881 V888.5 M1132.5,881 V888.5" stroke="#9a9a9a" stroke-width="1"/><path d="M773.2,877 V888.5 M848.1,877 V888.5 M922.9,877 V888.5 M997.8,877 V888.5 M1072.6,877 V888.5 M1147.5,877 V888.5" stroke="#555" stroke-width="1.3"/><path d="M773,907.8 l7.5,12 h-15z M1147.3,907.8 l7.5,12 h-15z" fill="#111"/></svg>
<div class="t" style="left:738.2px;top:854.5px;font-size:14.5px;line-height:18.12px;color:#444;letter-spacing:-0.435px;">-3.244e+5</div>
<div class="t" style="left:816.0px;top:854.5px;font-size:14.5px;line-height:18.12px;color:#444;letter-spacing:-0.408px;">-2.2556e+5</div>
<div class="t" style="left:889.0px;top:854.5px;font-size:14.5px;line-height:18.12px;color:#444;letter-spacing:-0.438px;">-1.2671e+5</div>
<div class="t" style="left:974.0px;top:854.5px;font-size:14.5px;line-height:18.12px;color:#444;letter-spacing:-0.109px;">-27866</div>
<div class="t" style="left:1050.0px;top:854.5px;font-size:14.5px;line-height:18.12px;color:#444;letter-spacing:-0.264px;">70979</div>
<div class="t" style="left:1122.8px;top:854.5px;font-size:14.5px;line-height:18.12px;color:#444;letter-spacing:-0.548px;">1.698e+5</div>
<svg width="1904" height="919" viewBox="0 0 1904 919" style="left:0;top:0"><defs><clipPath id="cVol"><path d="M1207.4,355.7 C1206.5,359.2 1205.5,362.7 1204.4,366.1 C1203.4,369.6 1202.2,373.1 1201.1,376.5 C1200.0,379.9 1198.8,383.4 1197.6,386.8 C1196.4,390.2 1195.1,393.6 1193.9,397.0 C1192.7,400.5 1191.5,403.9 1190.2,407.3 C1188.9,410.7 1187.7,414.1 1186.4,417.6 C1185.1,421.0 1183.8,424.5 1182.4,427.9 C1181.0,431.4 1179.7,434.9 1178.2,438.3 C1176.7,441.8 1175.2,445.3 1173.5,448.8 C1171.9,452.2 1170.2,455.7 1168.4,459.2 C1166.6,462.6 1164.7,466.0 1162.7,469.4 C1160.6,472.7 1158.5,476.1 1156.3,479.3 C1154.0,482.5 1151.7,485.7 1149.2,488.8 C1146.8,491.8 1144.2,494.8 1141.6,497.7 C1139.0,500.5 1136.3,503.3 1133.5,505.9 C1130.7,508.6 1127.9,511.1 1125.1,513.6 C1122.2,516.0 1119.3,518.4 1116.4,520.7 C1113.5,522.9 1110.6,525.1 1107.7,527.2 C1104.8,529.4 1101.9,531.4 1099.0,533.5 C1096.1,535.5 1093.2,537.5 1090.4,539.5 C1087.5,541.5 1084.7,543.5 1081.8,545.5 C1078.9,547.5 1076.1,549.5 1073.3,551.6 C1070.4,553.6 1067.6,555.6 1064.7,557.6 C1061.8,559.7 1059.0,561.7 1056.1,563.7 C1053.1,565.7 1050.2,567.7 1047.3,569.7 C1044.3,571.6 1041.3,573.6 1038.3,575.4 C1035.3,577.2 1032.3,579.0 1029.3,580.7 C1026.2,582.4 1023.1,583.9 1020.1,585.4 C1017.0,586.8 1013.9,588.2 1010.8,589.4 C1007.7,590.6 1004.7,591.6 1001.6,592.6 C998.5,593.5 995.5,594.3 992.4,595.0 C989.4,595.7 986.4,596.3 983.4,596.7 C980.4,597.2 977.4,597.6 974.5,597.9 C971.5,598.2 968.6,598.4 965.6,598.5 C962.7,598.7 959.8,598.8 956.9,598.8 C954.0,598.9 951.1,598.8 948.2,598.8 C945.2,598.7 942.3,598.7 939.5,598.5 C936.6,598.3 933.7,598.1 930.8,597.8 C927.9,597.5 925.1,597.2 922.3,596.6 C919.5,596.1 916.7,595.5 914.0,594.8 C911.3,594.0 908.7,593.1 906.1,592.0 C903.6,590.9 901.2,589.6 898.9,588.1 C896.6,586.7 894.5,585.0 892.5,583.1 C890.5,581.2 888.7,579.1 887.1,576.8 C885.5,574.5 884.1,571.9 882.8,569.2 C881.6,566.5 880.6,563.6 879.8,560.6 C878.9,557.6 878.3,554.4 877.8,551.1 C877.3,547.8 877.0,544.4 876.9,541.0 C876.7,537.5 876.7,534.0 876.8,530.5 C876.8,527.0 877.0,523.5 877.2,520.0 C877.5,516.5 877.8,513.1 878.0,509.7 C878.3,506.3 878.6,502.9 878.9,499.6 C879.2,496.3 879.5,493.1 879.7,490.0 C879.9,486.8 880.0,483.7 880.1,480.7 C880.3,477.6 880.3,474.7 880.3,471.7 C880.3,468.8 880.2,465.9 880.2,462.9 C880.1,460.0 879.9,457.1 879.8,454.2 C879.7,451.3 879.5,448.4 879.3,445.4 C879.2,442.5 879.1,439.5 879.0,436.5 C878.9,433.5 878.8,430.4 878.8,427.3 C878.9,424.2 878.9,421.0 879.1,417.8 C879.3,414.6 879.5,411.3 879.9,408.0 C880.3,404.7 880.7,401.3 881.3,397.9 C881.9,394.6 882.6,391.1 883.4,387.7 C884.2,384.2 885.1,380.8 886.1,377.3 C887.2,373.8 888.3,370.3 889.6,366.8 C890.8,363.3 892.2,359.8 893.6,356.3 C895.1,352.8 896.6,349.3 898.3,345.8 C899.9,342.3 901.7,338.9 903.5,335.4 C905.3,332.0 907.2,328.6 909.2,325.2 C911.2,321.8 913.3,318.5 915.4,315.2 C917.5,311.9 919.8,308.6 922.0,305.4 C924.3,302.2 926.6,299.0 929.0,295.9 C931.4,292.7 933.8,289.7 936.3,286.6 C938.8,283.6 941.3,280.6 943.9,277.6 C946.4,274.7 949.1,271.8 951.7,268.9 C954.3,266.0 957.0,263.2 959.7,260.4 C962.4,257.6 965.2,254.9 968.0,252.2 C970.7,249.5 973.5,246.8 976.4,244.2 C979.2,241.6 982.1,239.0 985.0,236.5 C987.8,233.9 990.8,231.4 993.7,229.0 C996.7,226.6 999.7,224.2 1002.7,222.0 C1005.7,219.7 1008.8,217.5 1011.9,215.4 C1014.9,213.3 1018.0,211.3 1021.2,209.4 C1024.3,207.5 1027.4,205.7 1030.6,204.1 C1033.8,202.5 1036.9,201.0 1040.1,199.7 C1043.2,198.3 1046.4,197.2 1049.5,196.2 C1052.7,195.1 1055.8,194.3 1058.9,193.6 C1062.0,192.9 1065.0,192.4 1068.0,192.0 C1071.0,191.7 1074.0,191.5 1076.9,191.4 C1079.8,191.3 1082.7,191.3 1085.5,191.5 C1088.3,191.6 1091.1,191.9 1093.8,192.2 C1096.5,192.5 1099.2,193.0 1101.8,193.4 C1104.5,193.9 1107.1,194.4 1109.6,195.0 C1112.2,195.5 1114.7,196.1 1117.2,196.7 C1119.7,197.3 1122.2,197.9 1124.7,198.6 C1127.1,199.2 1129.6,199.8 1132.0,200.5 C1134.5,201.2 1136.9,201.8 1139.3,202.5 C1141.8,203.3 1144.2,204.0 1146.6,204.8 C1149.0,205.6 1151.3,206.4 1153.7,207.3 C1156.0,208.2 1158.3,209.2 1160.6,210.2 C1162.9,211.3 1165.1,212.4 1167.2,213.7 C1169.4,214.9 1171.5,216.2 1173.5,217.7 C1175.6,219.1 1177.5,220.7 1179.4,222.3 C1181.3,224.0 1183.1,225.7 1184.9,227.6 C1186.6,229.5 1188.2,231.4 1189.8,233.5 C1191.4,235.5 1192.9,237.6 1194.3,239.9 C1195.7,242.1 1197.0,244.4 1198.3,246.7 C1199.6,249.1 1200.8,251.5 1201.9,254.0 C1203.0,256.5 1204.1,259.0 1205.1,261.6 C1206.1,264.2 1207.0,266.9 1207.8,269.6 C1208.7,272.4 1209.5,275.1 1210.2,278.0 C1210.9,280.8 1211.5,283.7 1212.0,286.6 C1212.6,289.6 1213.0,292.6 1213.3,295.7 C1213.7,298.8 1213.9,301.9 1214.0,305.1 C1214.2,308.3 1214.2,311.5 1214.1,314.8 C1214.0,318.1 1213.7,321.4 1213.4,324.8 C1213.1,328.2 1212.6,331.6 1212.0,335.0 C1211.5,338.4 1210.8,341.9 1210.0,345.3 C1209.2,348.8 1208.4,352.3 1207.4,355.7Z"/><path d="M850.0,552.0 L858.8,554.0 C860.3,555.6 864.3,560.1 868.0,563.5 C871.7,566.9 875.8,570.5 881.0,574.5 C886.2,578.5 896.4,585.3 899.5,587.5 L905,560 L880,500 L886.5,478 L870,475.3 L850,500Z"/></clipPath><clipPath id="cFace"><path d="M1206.5,356.0 C1205.7,360.7 1204.6,365.5 1203.4,370.3 C1202.2,375.1 1200.8,380.0 1199.2,384.9 C1197.6,389.8 1195.8,394.7 1193.8,399.7 C1191.8,404.7 1189.6,409.7 1187.3,414.6 C1185.0,419.6 1182.4,424.6 1179.8,429.5 C1177.1,434.4 1174.2,439.3 1171.2,444.1 C1168.2,448.9 1165.1,453.6 1161.8,458.3 C1158.5,462.9 1155.1,467.5 1151.6,471.9 C1148.0,476.3 1144.4,480.6 1140.7,484.8 C1136.9,488.9 1133.1,492.9 1129.2,496.8 C1125.3,500.6 1121.4,504.3 1117.4,507.9 C1113.4,511.4 1109.3,514.7 1105.3,517.9 C1101.2,521.1 1097.1,524.0 1093.0,526.8 C1088.9,529.6 1084.8,532.2 1080.7,534.6 C1076.6,537.1 1072.5,539.3 1068.5,541.3 C1064.4,543.3 1060.4,545.2 1056.4,546.8 C1052.4,548.5 1048.5,549.9 1044.6,551.2 C1040.7,552.5 1036.8,553.6 1033.0,554.5 C1029.3,555.4 1025.5,556.1 1021.8,556.7 C1018.2,557.2 1014.6,557.6 1011.0,557.7 C1007.5,557.9 1004.1,557.9 1000.7,557.7 C997.3,557.6 994.0,557.2 990.8,556.7 C987.6,556.1 984.5,555.4 981.5,554.5 C978.5,553.6 975.6,552.5 972.8,551.2 C970.0,549.9 967.3,548.5 964.7,546.8 C962.1,545.2 959.7,543.4 957.4,541.4 C955.1,539.4 952.9,537.2 950.8,534.8 C948.8,532.4 946.9,529.9 945.2,527.2 C943.4,524.5 941.8,521.5 940.4,518.5 C939.0,515.4 937.8,512.2 936.7,508.8 C935.6,505.4 934.7,501.9 934.0,498.2 C933.2,494.5 932.7,490.6 932.3,486.7 C931.9,482.7 931.7,478.6 931.7,474.4 C931.7,470.2 931.9,465.9 932.3,461.5 C932.6,457.1 933.2,452.6 933.9,448.0 C934.6,443.4 935.5,438.8 936.6,434.1 C937.6,429.4 938.9,424.6 940.3,419.8 C941.7,415.0 943.3,410.2 945.1,405.3 C946.8,400.5 948.7,395.6 950.8,390.7 C952.9,385.8 955.1,380.9 957.5,376.1 C959.8,371.2 962.3,366.4 965.0,361.6 C967.6,356.8 970.4,352.0 973.4,347.3 C976.3,342.6 979.3,337.9 982.5,333.3 C985.6,328.8 988.9,324.2 992.3,319.8 C995.7,315.4 999.2,311.0 1002.8,306.8 C1006.3,302.6 1010.0,298.5 1013.8,294.5 C1017.5,290.5 1021.4,286.7 1025.3,283.0 C1029.2,279.3 1033.2,275.7 1037.2,272.3 C1041.2,269.0 1045.2,265.7 1049.3,262.7 C1053.4,259.7 1057.5,256.8 1061.6,254.1 C1065.7,251.5 1069.9,249.0 1074.0,246.8 C1078.1,244.5 1082.2,242.5 1086.3,240.7 C1090.4,238.8 1094.4,237.2 1098.4,235.9 C1102.4,234.5 1106.3,233.3 1110.2,232.4 C1114.1,231.5 1117.9,230.8 1121.6,230.3 C1125.4,229.8 1129.0,229.5 1132.5,229.5 C1136.1,229.4 1139.5,229.6 1142.9,230.0 C1146.2,230.4 1149.5,231.0 1152.6,231.8 C1155.7,232.5 1158.7,233.5 1161.6,234.7 C1164.5,235.9 1167.2,237.2 1169.9,238.8 C1172.5,240.3 1175.0,242.0 1177.4,243.9 C1179.8,245.8 1182.1,247.8 1184.2,250.0 C1186.4,252.2 1188.4,254.6 1190.3,257.1 C1192.1,259.5 1193.9,262.2 1195.5,265.0 C1197.1,267.8 1198.6,270.7 1200.0,273.7 C1201.3,276.8 1202.6,280.0 1203.7,283.3 C1204.7,286.6 1205.7,290.1 1206.5,293.7 C1207.3,297.2 1207.9,300.9 1208.4,304.8 C1208.9,308.6 1209.3,312.5 1209.5,316.6 C1209.6,320.7 1209.7,324.8 1209.5,329.1 C1209.4,333.4 1209.1,337.8 1208.6,342.3 C1208.1,346.8 1207.4,351.4 1206.5,356.0Z"/></clipPath><clipPath id="cPipe"><path d="M593.2,657.2 L593.3,655.5 L593.5,654.0 L593.8,652.6 L594.2,651.3 L594.7,650.1 L595.3,649.0 L596.1,648.1 L596.9,647.4 L800.0,506.5 L858.8,554.0 L633.2,708.2 L632.3,708.7 L631.2,709.0 L630.1,709.2 L628.9,709.2 L627.6,709.0 L626.3,708.7 L624.9,708.3 L623.4,707.7 L622.0,706.9 L620.5,706.0 L618.9,705.0 L617.4,703.8 L615.9,702.5 L614.3,701.1 L612.8,699.6 L611.2,697.9 L609.7,696.2 L608.2,694.4 L606.8,692.5 L605.4,690.5 L604.0,688.4 L602.7,686.3 L601.5,684.2 L600.3,682.0 L599.2,679.8 L598.2,677.6 L597.2,675.4 L596.4,673.2 L595.7,671.0 L595.0,668.8 L594.4,666.7 L594.0,664.7 L593.6,662.7 L593.4,660.8 L593.3,658.9Z M800.0,506.5 C802.7,504.6 810.7,498.9 816.0,495.3 C821.3,491.7 827.2,487.8 832.0,485.0 C836.8,482.2 840.7,480.2 845.0,478.6 C849.3,477.0 853.5,475.9 858.0,475.3 C862.5,474.8 867.0,474.9 871.8,475.3 C876.5,475.8 884.0,477.6 886.5,478.0 L900,500 L870,560 L858.8,554Z"/><path d="M633.2,708.2 C632.9,708.4 631.8,708.9 630.9,709.1 C630.1,709.2 629.2,709.2 628.2,709.1 C627.3,709.0 626.3,708.8 625.2,708.4 C624.2,708.0 623.1,707.5 622.0,706.9 C620.9,706.3 619.7,705.6 618.6,704.7 C617.4,703.9 616.2,702.9 615.1,701.8 C613.9,700.8 612.7,699.6 611.6,698.4 C610.5,697.1 609.3,695.8 608.2,694.4 C607.1,693.0 606.0,691.5 605.0,690.0 C604.0,688.4 603.0,686.9 602.1,685.2 C601.2,683.6 600.3,682.0 599.5,680.3 C598.7,678.7 597.9,677.0 597.2,675.4 C596.6,673.7 596.0,672.1 595.5,670.4 C595.0,668.8 594.5,667.2 594.2,665.7 C593.9,664.2 593.6,662.7 593.5,661.2 C593.3,659.8 593.2,658.5 593.2,657.2 C593.3,655.9 593.4,654.7 593.6,653.6 C593.8,652.5 594.1,651.5 594.5,650.7 C594.9,649.8 595.3,649.0 595.9,648.3 C596.4,647.7 597.1,647.2 597.8,646.8 C598.4,646.4 599.2,646.1 600.1,645.9 C600.9,645.8 601.8,645.8 602.8,645.9 C603.7,646.0 604.7,646.2 605.8,646.6 C606.8,647.0 607.9,647.5 609.0,648.1 C610.1,648.7 611.3,649.4 612.4,650.3 C613.6,651.1 614.8,652.1 615.9,653.2 C617.1,654.2 618.3,655.4 619.4,656.6 C620.5,657.9 621.7,659.2 622.8,660.6 C623.9,662.0 625.0,663.5 626.0,665.0 C627.0,666.6 628.0,668.1 628.9,669.8 C629.8,671.4 630.7,673.0 631.5,674.7 C632.3,676.3 633.1,678.0 633.8,679.6 C634.4,681.3 635.0,682.9 635.5,684.6 C636.0,686.2 636.5,687.8 636.8,689.3 C637.1,690.8 637.4,692.3 637.5,693.8 C637.7,695.2 637.8,696.5 637.8,697.8 C637.7,699.1 637.6,700.3 637.4,701.4 C637.2,702.5 636.9,703.5 636.5,704.3 C636.1,705.2 635.7,706.0 635.1,706.7 C634.6,707.3 633.6,708.0 633.2,708.2 C632.9,708.5 633.6,708.1 633.2,708.2Z"/></clipPath><clipPath id="cCap"><path d="M633.2,708.2 C632.9,708.4 631.8,708.9 630.9,709.1 C630.1,709.2 629.2,709.2 628.2,709.1 C627.3,709.0 626.3,708.8 625.2,708.4 C624.2,708.0 623.1,707.5 622.0,706.9 C620.9,706.3 619.7,705.6 618.6,704.7 C617.4,703.9 616.2,702.9 615.1,701.8 C613.9,700.8 612.7,699.6 611.6,698.4 C610.5,697.1 609.3,695.8 608.2,694.4 C607.1,693.0 606.0,691.5 605.0,690.0 C604.0,688.4 603.0,686.9 602.1,685.2 C601.2,683.6 600.3,682.0 599.5,680.3 C598.7,678.7 597.9,677.0 597.2,675.4 C596.6,673.7 596.0,672.1 595.5,670.4 C595.0,668.8 594.5,667.2 594.2,665.7 C593.9,664.2 593.6,662.7 593.5,661.2 C593.3,659.8 593.2,658.5 593.2,657.2 C593.3,655.9 593.4,654.7 593.6,653.6 C593.8,652.5 594.1,651.5 594.5,650.7 C594.9,649.8 595.3,649.0 595.9,648.3 C596.4,647.7 597.1,647.2 597.8,646.8 C598.4,646.4 599.2,646.1 600.1,645.9 C600.9,645.8 601.8,645.8 602.8,645.9 C603.7,646.0 604.7,646.2 605.8,646.6 C606.8,647.0 607.9,647.5 609.0,648.1 C610.1,648.7 611.3,649.4 612.4,650.3 C613.6,651.1 614.8,652.1 615.9,653.2 C617.1,654.2 618.3,655.4 619.4,656.6 C620.5,657.9 621.7,659.2 622.8,660.6 C623.9,662.0 625.0,663.5 626.0,665.0 C627.0,666.6 628.0,668.1 628.9,669.8 C629.8,671.4 630.7,673.0 631.5,674.7 C632.3,676.3 633.1,678.0 633.8,679.6 C634.4,681.3 635.0,682.9 635.5,684.6 C636.0,686.2 636.5,687.8 636.8,689.3 C637.1,690.8 637.4,692.3 637.5,693.8 C637.7,695.2 637.8,696.5 637.8,697.8 C637.7,699.1 637.6,700.3 637.4,701.4 C637.2,702.5 636.9,703.5 636.5,704.3 C636.1,705.2 635.7,706.0 635.1,706.7 C634.6,707.3 633.6,708.0 633.2,708.2 C632.9,708.5 633.6,708.1 633.2,708.2Z"/></clipPath><clipPath id="cR1"><path d="M1163.6,377.8 C1163.2,380.5 1162.7,383.3 1162.0,386.1 C1161.4,388.9 1160.6,391.8 1159.7,394.7 C1158.8,397.6 1157.8,400.6 1156.7,403.7 C1155.5,406.7 1154.3,409.7 1152.9,412.8 C1151.5,415.8 1150.0,418.9 1148.4,422.0 C1146.7,425.1 1145.0,428.1 1143.1,431.2 C1141.3,434.2 1139.3,437.2 1137.3,440.2 C1135.2,443.1 1133.1,446.0 1130.9,448.8 C1128.7,451.7 1126.4,454.4 1124.0,457.1 C1121.7,459.7 1119.2,462.3 1116.8,464.8 C1114.3,467.2 1111.8,469.6 1109.3,471.8 C1106.8,474.0 1104.2,476.1 1101.7,478.1 C1099.1,480.1 1096.6,481.9 1094.0,483.6 C1091.5,485.3 1088.9,486.8 1086.4,488.2 C1083.9,489.6 1081.4,490.9 1079.0,492.0 C1076.5,493.1 1074.1,494.0 1071.8,494.9 C1069.4,495.7 1067.1,496.4 1064.9,496.9 C1062.6,497.5 1060.4,497.9 1058.3,498.2 C1056.2,498.5 1054.1,498.6 1052.2,498.7 C1050.2,498.7 1048.3,498.6 1046.4,498.5 C1044.6,498.3 1042.8,498.0 1041.1,497.6 C1039.4,497.2 1037.7,496.8 1036.2,496.2 C1034.6,495.7 1033.1,495.0 1031.6,494.3 C1030.2,493.6 1028.8,492.8 1027.5,491.9 C1026.2,491.0 1024.9,490.1 1023.7,489.1 C1022.5,488.1 1021.3,487.0 1020.3,485.8 C1019.2,484.7 1018.1,483.5 1017.1,482.2 C1016.2,481.0 1015.2,479.6 1014.4,478.2 C1013.5,476.8 1012.7,475.3 1011.9,473.8 C1011.2,472.2 1010.5,470.6 1009.9,468.9 C1009.2,467.3 1008.7,465.5 1008.2,463.7 C1007.7,461.8 1007.3,459.9 1006.9,457.9 C1006.6,455.9 1006.3,453.9 1006.2,451.7 C1006.0,449.6 1005.9,447.3 1005.9,445.0 C1005.9,442.7 1006.0,440.3 1006.2,437.8 C1006.4,435.4 1006.8,432.8 1007.2,430.2 C1007.6,427.6 1008.1,424.9 1008.8,422.2 C1009.4,419.5 1010.2,416.7 1011.1,413.8 C1012.0,411.0 1013.0,408.1 1014.1,405.2 C1015.2,402.3 1016.4,399.3 1017.8,396.3 C1019.1,393.4 1020.6,390.4 1022.2,387.4 C1023.8,384.5 1025.4,381.5 1027.2,378.6 C1029.0,375.7 1030.9,372.7 1032.9,369.9 C1034.8,367.0 1036.9,364.2 1039.0,361.5 C1041.2,358.8 1043.4,356.1 1045.7,353.5 C1047.9,350.9 1050.3,348.4 1052.6,346.0 C1055.0,343.6 1057.4,341.3 1059.9,339.1 C1062.3,337.0 1064.8,334.9 1067.2,333.0 C1069.7,331.0 1072.2,329.2 1074.6,327.6 C1077.1,325.9 1079.6,324.3 1082.0,322.9 C1084.5,321.5 1086.9,320.3 1089.3,319.1 C1091.7,318.0 1094.0,317.0 1096.3,316.1 C1098.6,315.3 1100.9,314.5 1103.1,313.9 C1105.3,313.3 1107.5,312.9 1109.6,312.5 C1111.7,312.1 1113.7,311.9 1115.7,311.8 C1117.7,311.6 1119.6,311.6 1121.4,311.7 C1123.3,311.8 1125.1,312.0 1126.8,312.3 C1128.5,312.5 1130.2,312.9 1131.8,313.4 C1133.4,313.8 1135.0,314.4 1136.5,315.0 C1138.0,315.6 1139.4,316.3 1140.8,317.0 C1142.2,317.8 1143.5,318.7 1144.8,319.6 C1146.1,320.5 1147.3,321.5 1148.5,322.5 C1149.7,323.6 1150.8,324.7 1151.9,325.9 C1152.9,327.1 1153.9,328.4 1154.9,329.7 C1155.9,331.0 1156.8,332.5 1157.6,334.0 C1158.4,335.5 1159.2,337.0 1159.9,338.7 C1160.6,340.3 1161.3,342.1 1161.8,343.9 C1162.4,345.7 1162.9,347.6 1163.3,349.6 C1163.7,351.6 1164.0,353.7 1164.3,355.9 C1164.5,358.1 1164.7,360.3 1164.7,362.7 C1164.7,365.0 1164.7,367.5 1164.5,370.0 C1164.3,372.5 1164.0,375.1 1163.6,377.8Z"/></clipPath><clipPath id="cR2"><path d="M1175.2,391.3 C1174.7,393.8 1174.2,396.3 1173.6,398.9 C1173.0,401.4 1172.3,404.1 1171.4,406.7 C1170.6,409.4 1169.7,412.0 1168.6,414.7 C1167.6,417.4 1166.5,420.2 1165.2,422.9 C1164.0,425.7 1162.7,428.4 1161.2,431.2 C1159.8,433.9 1158.2,436.7 1156.6,439.4 C1154.9,442.2 1153.2,444.9 1151.3,447.6 C1149.5,450.3 1147.6,453.0 1145.6,455.6 C1143.6,458.2 1141.5,460.7 1139.3,463.2 C1137.2,465.7 1135.0,468.1 1132.7,470.5 C1130.4,472.8 1128.1,475.1 1125.7,477.2 C1123.3,479.4 1120.9,481.5 1118.4,483.4 C1116.0,485.4 1113.5,487.3 1111.0,489.0 C1108.5,490.7 1106.0,492.3 1103.5,493.8 C1101.0,495.3 1098.5,496.7 1096.0,497.9 C1093.5,499.1 1091.1,500.2 1088.6,501.2 C1086.2,502.1 1083.8,502.9 1081.4,503.6 C1079.1,504.3 1076.8,504.9 1074.5,505.3 C1072.2,505.7 1070.0,506.0 1067.9,506.2 C1065.7,506.4 1063.6,506.4 1061.6,506.3 C1059.6,506.3 1057.7,506.0 1055.8,505.7 C1053.9,505.4 1052.1,505.0 1050.4,504.5 C1048.6,504.0 1047.0,503.3 1045.4,502.6 C1043.8,501.9 1042.3,501.0 1040.8,500.1 C1039.4,499.2 1038.0,498.2 1036.8,497.1 C1035.5,496.1 1034.3,494.9 1033.1,493.7 C1032.0,492.4 1030.9,491.1 1029.9,489.7 C1028.9,488.3 1028.0,486.9 1027.2,485.4 C1026.3,483.8 1025.5,482.3 1024.8,480.6 C1024.1,479.0 1023.5,477.2 1022.9,475.5 C1022.4,473.7 1021.9,471.8 1021.5,469.9 C1021.1,468.0 1020.7,466.1 1020.4,464.1 C1020.2,462.0 1020.0,459.9 1019.9,457.8 C1019.8,455.7 1019.8,453.5 1019.8,451.2 C1019.9,448.9 1020.1,446.6 1020.3,444.2 C1020.6,441.9 1020.9,439.4 1021.3,437.0 C1021.8,434.5 1022.3,432.0 1022.9,429.4 C1023.5,426.8 1024.3,424.2 1025.1,421.6 C1025.9,418.9 1026.9,416.2 1027.9,413.5 C1028.9,410.8 1030.1,408.1 1031.3,405.3 C1032.6,402.6 1033.9,399.8 1035.4,397.1 C1036.8,394.3 1038.4,391.5 1040.0,388.8 C1041.7,386.1 1043.4,383.4 1045.2,380.7 C1047.1,378.0 1049.0,375.3 1051.0,372.7 C1053.0,370.1 1055.1,367.6 1057.3,365.1 C1059.4,362.6 1061.6,360.2 1063.9,357.8 C1066.2,355.5 1068.5,353.2 1070.9,351.1 C1073.3,348.9 1075.7,346.9 1078.2,344.9 C1080.6,343.0 1083.1,341.1 1085.6,339.4 C1088.1,337.7 1090.6,336.1 1093.1,334.6 C1095.6,333.1 1098.1,331.7 1100.6,330.5 C1103.0,329.3 1105.5,328.2 1107.9,327.3 C1110.3,326.3 1112.7,325.5 1115.1,324.8 C1117.4,324.1 1119.8,323.6 1122.0,323.1 C1124.3,322.7 1126.5,322.4 1128.6,322.3 C1130.8,322.1 1132.8,322.1 1134.9,322.1 C1136.9,322.2 1138.8,322.4 1140.7,322.7 C1142.6,323.0 1144.4,323.5 1146.1,324.0 C1147.8,324.5 1149.5,325.2 1151.1,325.9 C1152.6,326.6 1154.2,327.4 1155.6,328.3 C1157.0,329.2 1158.4,330.2 1159.7,331.3 C1160.9,332.4 1162.1,333.6 1163.3,334.8 C1164.4,336.0 1165.5,337.3 1166.5,338.7 C1167.5,340.1 1168.4,341.5 1169.2,343.0 C1170.1,344.6 1170.9,346.1 1171.6,347.8 C1172.3,349.4 1172.9,351.1 1173.5,352.9 C1174.0,354.7 1174.5,356.5 1175.0,358.4 C1175.4,360.3 1175.7,362.3 1176.0,364.3 C1176.2,366.3 1176.4,368.4 1176.5,370.5 C1176.6,372.7 1176.7,374.9 1176.6,377.1 C1176.5,379.4 1176.4,381.7 1176.2,384.1 C1175.9,386.4 1175.6,388.8 1175.2,391.3Z"/></clipPath><filter id="bl1" x="-20%" y="-20%" width="140%" height="140%"><feGaussianBlur stdDeviation="1.3"/></filter><filter id="bl3" x="-30%" y="-30%" width="160%" height="160%"><feGaussianBlur stdDeviation="3"/></filter><filter id="bl6" x="-30%" y="-30%" width="160%" height="160%"><feGaussianBlur stdDeviation="6"/></filter><linearGradient id="gPipe" gradientUnits="userSpaceOnUse" x1="700" y1="573" x2="737" y2="636"><stop offset="0" stop-color="#f2f200"/><stop offset="0.25" stop-color="#ffff14"/><stop offset="0.6" stop-color="#fbfb0c"/><stop offset="1" stop-color="#e4e400"/></linearGradient><linearGradient id="gCyl" gradientUnits="userSpaceOnUse" x1="1282" y1="450" x2="1196" y2="578"><stop offset="0" stop-color="#7cea00"/><stop offset="0.08" stop-color="#87fb02"/><stop offset="0.55" stop-color="#87fc02"/><stop offset="0.72" stop-color="#82f002"/><stop offset="0.88" stop-color="#78dc00"/><stop offset="1" stop-color="#7ee400"/></linearGradient><clipPath id="cAll"><path d="M1207.4,355.7 C1206.5,359.2 1205.5,362.7 1204.4,366.1 C1203.4,369.6 1202.2,373.1 1201.1,376.5 C1200.0,379.9 1198.8,383.4 1197.6,386.8 C1196.4,390.2 1195.1,393.6 1193.9,397.0 C1192.7,400.5 1191.5,403.9 1190.2,407.3 C1188.9,410.7 1187.7,414.1 1186.4,417.6 C1185.1,421.0 1183.8,424.5 1182.4,427.9 C1181.0,431.4 1179.7,434.9 1178.2,438.3 C1176.7,441.8 1175.2,445.3 1173.5,448.8 C1171.9,452.2 1170.2,455.7 1168.4,459.2 C1166.6,462.6 1164.7,466.0 1162.7,469.4 C1160.6,472.7 1158.5,476.1 1156.3,479.3 C1154.0,482.5 1151.7,485.7 1149.2,488.8 C1146.8,491.8 1144.2,494.8 1141.6,497.7 C1139.0,500.5 1136.3,503.3 1133.5,505.9 C1130.7,508.6 1127.9,511.1 1125.1,513.6 C1122.2,516.0 1119.3,518.4 1116.4,520.7 C1113.5,522.9 1110.6,525.1 1107.7,527.2 C1104.8,529.4 1101.9,531.4 1099.0,533.5 C1096.1,535.5 1093.2,537.5 1090.4,539.5 C1087.5,541.5 1084.7,543.5 1081.8,545.5 C1078.9,547.5 1076.1,549.5 1073.3,551.6 C1070.4,553.6 1067.6,555.6 1064.7,557.6 C1061.8,559.7 1059.0,561.7 1056.1,563.7 C1053.1,565.7 1050.2,567.7 1047.3,569.7 C1044.3,571.6 1041.3,573.6 1038.3,575.4 C1035.3,577.2 1032.3,579.0 1029.3,580.7 C1026.2,582.4 1023.1,583.9 1020.1,585.4 C1017.0,586.8 1013.9,588.2 1010.8,589.4 C1007.7,590.6 1004.7,591.6 1001.6,592.6 C998.5,593.5 995.5,594.3 992.4,595.0 C989.4,595.7 986.4,596.3 983.4,596.7 C980.4,597.2 977.4,597.6 974.5,597.9 C971.5,598.2 968.6,598.4 965.6,598.5 C962.7,598.7 959.8,598.8 956.9,598.8 C954.0,598.9 951.1,598.8 948.2,598.8 C945.2,598.7 942.3,598.7 939.5,598.5 C936.6,598.3 933.7,598.1 930.8,597.8 C927.9,597.5 925.1,597.2 922.3,596.6 C919.5,596.1 916.7,595.5 914.0,594.8 C911.3,594.0 908.7,593.1 906.1,592.0 C903.6,590.9 901.2,589.6 898.9,588.1 C896.6,586.7 894.5,585.0 892.5,583.1 C890.5,581.2 888.7,579.1 887.1,576.8 C885.5,574.5 884.1,571.9 882.8,569.2 C881.6,566.5 880.6,563.6 879.8,560.6 C878.9,557.6 878.3,554.4 877.8,551.1 C877.3,547.8 877.0,544.4 876.9,541.0 C876.7,537.5 876.7,534.0 876.8,530.5 C876.8,527.0 877.0,523.5 877.2,520.0 C877.5,516.5 877.8,513.1 878.0,509.7 C878.3,506.3 878.6,502.9 878.9,499.6 C879.2,496.3 879.5,493.1 879.7,490.0 C879.9,486.8 880.0,483.7 880.1,480.7 C880.3,477.6 880.3,474.7 880.3,471.7 C880.3,468.8 880.2,465.9 880.2,462.9 C880.1,460.0 879.9,457.1 879.8,454.2 C879.7,451.3 879.5,448.4 879.3,445.4 C879.2,442.5 879.1,439.5 879.0,436.5 C878.9,433.5 878.8,430.4 878.8,427.3 C878.9,424.2 878.9,421.0 879.1,417.8 C879.3,414.6 879.5,411.3 879.9,408.0 C880.3,404.7 880.7,401.3 881.3,397.9 C881.9,394.6 882.6,391.1 883.4,387.7 C884.2,384.2 885.1,380.8 886.1,377.3 C887.2,373.8 888.3,370.3 889.6,366.8 C890.8,363.3 892.2,359.8 893.6,356.3 C895.1,352.8 896.6,349.3 898.3,345.8 C899.9,342.3 901.7,338.9 903.5,335.4 C905.3,332.0 907.2,328.6 909.2,325.2 C911.2,321.8 913.3,318.5 915.4,315.2 C917.5,311.9 919.8,308.6 922.0,305.4 C924.3,302.2 926.6,299.0 929.0,295.9 C931.4,292.7 933.8,289.7 936.3,286.6 C938.8,283.6 941.3,280.6 943.9,277.6 C946.4,274.7 949.1,271.8 951.7,268.9 C954.3,266.0 957.0,263.2 959.7,260.4 C962.4,257.6 965.2,254.9 968.0,252.2 C970.7,249.5 973.5,246.8 976.4,244.2 C979.2,241.6 982.1,239.0 985.0,236.5 C987.8,233.9 990.8,231.4 993.7,229.0 C996.7,226.6 999.7,224.2 1002.7,222.0 C1005.7,219.7 1008.8,217.5 1011.9,215.4 C1014.9,213.3 1018.0,211.3 1021.2,209.4 C1024.3,207.5 1027.4,205.7 1030.6,204.1 C1033.8,202.5 1036.9,201.0 1040.1,199.7 C1043.2,198.3 1046.4,197.2 1049.5,196.2 C1052.7,195.1 1055.8,194.3 1058.9,193.6 C1062.0,192.9 1065.0,192.4 1068.0,192.0 C1071.0,191.7 1074.0,191.5 1076.9,191.4 C1079.8,191.3 1082.7,191.3 1085.5,191.5 C1088.3,191.6 1091.1,191.9 1093.8,192.2 C1096.5,192.5 1099.2,193.0 1101.8,193.4 C1104.5,193.9 1107.1,194.4 1109.6,195.0 C1112.2,195.5 1114.7,196.1 1117.2,196.7 C1119.7,197.3 1122.2,197.9 1124.7,198.6 C1127.1,199.2 1129.6,199.8 1132.0,200.5 C1134.5,201.2 1136.9,201.8 1139.3,202.5 C1141.8,203.3 1144.2,204.0 1146.6,204.8 C1149.0,205.6 1151.3,206.4 1153.7,207.3 C1156.0,208.2 1158.3,209.2 1160.6,210.2 C1162.9,211.3 1165.1,212.4 1167.2,213.7 C1169.4,214.9 1171.5,216.2 1173.5,217.7 C1175.6,219.1 1177.5,220.7 1179.4,222.3 C1181.3,224.0 1183.1,225.7 1184.9,227.6 C1186.6,229.5 1188.2,231.4 1189.8,233.5 C1191.4,235.5 1192.9,237.6 1194.3,239.9 C1195.7,242.1 1197.0,244.4 1198.3,246.7 C1199.6,249.1 1200.8,251.5 1201.9,254.0 C1203.0,256.5 1204.1,259.0 1205.1,261.6 C1206.1,264.2 1207.0,266.9 1207.8,269.6 C1208.7,272.4 1209.5,275.1 1210.2,278.0 C1210.9,280.8 1211.5,283.7 1212.0,286.6 C1212.6,289.6 1213.0,292.6 1213.3,295.7 C1213.7,298.8 1213.9,301.9 1214.0,305.1 C1214.2,308.3 1214.2,311.5 1214.1,314.8 C1214.0,318.1 1213.7,321.4 1213.4,324.8 C1213.1,328.2 1212.6,331.6 1212.0,335.0 C1211.5,338.4 1210.8,341.9 1210.0,345.3 C1209.2,348.8 1208.4,352.3 1207.4,355.7Z"/><path d="M850.0,552.0 L858.8,554.0 C860.3,555.6 864.3,560.1 868.0,563.5 C871.7,566.9 875.8,570.5 881.0,574.5 C886.2,578.5 896.4,585.3 899.5,587.5 L905,560 L880,500 L886.5,478 L870,475.3 L850,500Z"/><path d="M593.2,657.2 L593.3,655.5 L593.5,654.0 L593.8,652.6 L594.2,651.3 L594.7,650.1 L595.3,649.0 L596.1,648.1 L596.9,647.4 L800.0,506.5 L858.8,554.0 L633.2,708.2 L632.3,708.7 L631.2,709.0 L630.1,709.2 L628.9,709.2 L627.6,709.0 L626.3,708.7 L624.9,708.3 L623.4,707.7 L622.0,706.9 L620.5,706.0 L618.9,705.0 L617.4,703.8 L615.9,702.5 L614.3,701.1 L612.8,699.6 L611.2,697.9 L609.7,696.2 L608.2,694.4 L606.8,692.5 L605.4,690.5 L604.0,688.4 L602.7,686.3 L601.5,684.2 L600.3,682.0 L599.2,679.8 L598.2,677.6 L597.2,675.4 L596.4,673.2 L595.7,671.0 L595.0,668.8 L594.4,666.7 L594.0,664.7 L593.6,662.7 L593.4,660.8 L593.3,658.9Z M800.0,506.5 C802.7,504.6 810.7,498.9 816.0,495.3 C821.3,491.7 827.2,487.8 832.0,485.0 C836.8,482.2 840.7,480.2 845.0,478.6 C849.3,477.0 853.5,475.9 858.0,475.3 C862.5,474.8 867.0,474.9 871.8,475.3 C876.5,475.8 884.0,477.6 886.5,478.0 L900,500 L870,560 L858.8,554Z"/></clipPath><linearGradient id="gShade" gradientUnits="userSpaceOnUse" x1="1120" y1="260" x2="960" y2="540"><stop offset="0" stop-color="#000" stop-opacity="0"/><stop offset="0.45" stop-color="#000" stop-opacity="0"/><stop offset="1" stop-color="#000" stop-opacity="0.075"/></linearGradient><linearGradient id="gRing" gradientUnits="userSpaceOnUse" x1="1090" y1="300" x2="1010" y2="480"><stop offset="0" stop-color="#ecec0a"/><stop offset="0.25" stop-color="#ffff14"/><stop offset="0.55" stop-color="#fafa10"/><stop offset="0.8" stop-color="#e6e206"/><stop offset="1" stop-color="#e2dc06"/></linearGradient><linearGradient id="gAnn" gradientUnits="userSpaceOnUse" x1="1110" y1="325" x2="1040" y2="490"><stop offset="0" stop-color="#e4dc06"/><stop offset="0.45" stop-color="#dcdc06"/><stop offset="0.75" stop-color="#c6de04"/><stop offset="1" stop-color="#c2de04"/></linearGradient></defs><g fill="#f87a7a" stroke="#f87a7a" stroke-width="7.6" stroke-linejoin="round" filter="url(#bl1)" opacity="0.95"><path d="M1207.4,355.7 C1206.5,359.2 1205.5,362.7 1204.4,366.1 C1203.4,369.6 1202.2,373.1 1201.1,376.5 C1200.0,379.9 1198.8,383.4 1197.6,386.8 C1196.4,390.2 1195.1,393.6 1193.9,397.0 C1192.7,400.5 1191.5,403.9 1190.2,407.3 C1188.9,410.7 1187.7,414.1 1186.4,417.6 C1185.1,421.0 1183.8,424.5 1182.4,427.9 C1181.0,431.4 1179.7,434.9 1178.2,438.3 C1176.7,441.8 1175.2,445.3 1173.5,448.8 C1171.9,452.2 1170.2,455.7 1168.4,459.2 C1166.6,462.6 1164.7,466.0 1162.7,469.4 C1160.6,472.7 1158.5,476.1 1156.3,479.3 C1154.0,482.5 1151.7,485.7 1149.2,488.8 C1146.8,491.8 1144.2,494.8 1141.6,497.7 C1139.0,500.5 1136.3,503.3 1133.5,505.9 C1130.7,508.6 1127.9,511.1 1125.1,513.6 C1122.2,516.0 1119.3,518.4 1116.4,520.7 C1113.5,522.9 1110.6,525.1 1107.7,527.2 C1104.8,529.4 1101.9,531.4 1099.0,533.5 C1096.1,535.5 1093.2,537.5 1090.4,539.5 C1087.5,541.5 1084.7,543.5 1081.8,545.5 C1078.9,547.5 1076.1,549.5 1073.3,551.6 C1070.4,553.6 1067.6,555.6 1064.7,557.6 C1061.8,559.7 1059.0,561.7 1056.1,563.7 C1053.1,565.7 1050.2,567.7 1047.3,569.7 C1044.3,571.6 1041.3,573.6 1038.3,575.4 C1035.3,577.2 1032.3,579.0 1029.3,580.7 C1026.2,582.4 1023.1,583.9 1020.1,585.4 C1017.0,586.8 1013.9,588.2 1010.8,589.4 C1007.7,590.6 1004.7,591.6 1001.6,592.6 C998.5,593.5 995.5,594.3 992.4,595.0 C989.4,595.7 986.4,596.3 983.4,596.7 C980.4,597.2 977.4,597.6 974.5,597.9 C971.5,598.2 968.6,598.4 965.6,598.5 C962.7,598.7 959.8,598.8 956.9,598.8 C954.0,598.9 951.1,598.8 948.2,598.8 C945.2,598.7 942.3,598.7 939.5,598.5 C936.6,598.3 933.7,598.1 930.8,597.8 C927.9,597.5 925.1,597.2 922.3,596.6 C919.5,596.1 916.7,595.5 914.0,594.8 C911.3,594.0 908.7,593.1 906.1,592.0 C903.6,590.9 901.2,589.6 898.9,588.1 C896.6,586.7 894.5,585.0 892.5,583.1 C890.5,581.2 888.7,579.1 887.1,576.8 C885.5,574.5 884.1,571.9 882.8,569.2 C881.6,566.5 880.6,563.6 879.8,560.6 C878.9,557.6 878.3,554.4 877.8,551.1 C877.3,547.8 877.0,544.4 876.9,541.0 C876.7,537.5 876.7,534.0 876.8,530.5 C876.8,527.0 877.0,523.5 877.2,520.0 C877.5,516.5 877.8,513.1 878.0,509.7 C878.3,506.3 878.6,502.9 878.9,499.6 C879.2,496.3 879.5,493.1 879.7,490.0 C879.9,486.8 880.0,483.7 880.1,480.7 C880.3,477.6 880.3,474.7 880.3,471.7 C880.3,468.8 880.2,465.9 880.2,462.9 C880.1,460.0 879.9,457.1 879.8,454.2 C879.7,451.3 879.5,448.4 879.3,445.4 C879.2,442.5 879.1,439.5 879.0,436.5 C878.9,433.5 878.8,430.4 878.8,427.3 C878.9,424.2 878.9,421.0 879.1,417.8 C879.3,414.6 879.5,411.3 879.9,408.0 C880.3,404.7 880.7,401.3 881.3,397.9 C881.9,394.6 882.6,391.1 883.4,387.7 C884.2,384.2 885.1,380.8 886.1,377.3 C887.2,373.8 888.3,370.3 889.6,366.8 C890.8,363.3 892.2,359.8 893.6,356.3 C895.1,352.8 896.6,349.3 898.3,345.8 C899.9,342.3 901.7,338.9 903.5,335.4 C905.3,332.0 907.2,328.6 909.2,325.2 C911.2,321.8 913.3,318.5 915.4,315.2 C917.5,311.9 919.8,308.6 922.0,305.4 C924.3,302.2 926.6,299.0 929.0,295.9 C931.4,292.7 933.8,289.7 936.3,286.6 C938.8,283.6 941.3,280.6 943.9,277.6 C946.4,274.7 949.1,271.8 951.7,268.9 C954.3,266.0 957.0,263.2 959.7,260.4 C962.4,257.6 965.2,254.9 968.0,252.2 C970.7,249.5 973.5,246.8 976.4,244.2 C979.2,241.6 982.1,239.0 985.0,236.5 C987.8,233.9 990.8,231.4 993.7,229.0 C996.7,226.6 999.7,224.2 1002.7,222.0 C1005.7,219.7 1008.8,217.5 1011.9,215.4 C1014.9,213.3 1018.0,211.3 1021.2,209.4 C1024.3,207.5 1027.4,205.7 1030.6,204.1 C1033.8,202.5 1036.9,201.0 1040.1,199.7 C1043.2,198.3 1046.4,197.2 1049.5,196.2 C1052.7,195.1 1055.8,194.3 1058.9,193.6 C1062.0,192.9 1065.0,192.4 1068.0,192.0 C1071.0,191.7 1074.0,191.5 1076.9,191.4 C1079.8,191.3 1082.7,191.3 1085.5,191.5 C1088.3,191.6 1091.1,191.9 1093.8,192.2 C1096.5,192.5 1099.2,193.0 1101.8,193.4 C1104.5,193.9 1107.1,194.4 1109.6,195.0 C1112.2,195.5 1114.7,196.1 1117.2,196.7 C1119.7,197.3 1122.2,197.9 1124.7,198.6 C1127.1,199.2 1129.6,199.8 1132.0,200.5 C1134.5,201.2 1136.9,201.8 1139.3,202.5 C1141.8,203.3 1144.2,204.0 1146.6,204.8 C1149.0,205.6 1151.3,206.4 1153.7,207.3 C1156.0,208.2 1158.3,209.2 1160.6,210.2 C1162.9,211.3 1165.1,212.4 1167.2,213.7 C1169.4,214.9 1171.5,216.2 1173.5,217.7 C1175.6,219.1 1177.5,220.7 1179.4,222.3 C1181.3,224.0 1183.1,225.7 1184.9,227.6 C1186.6,229.5 1188.2,231.4 1189.8,233.5 C1191.4,235.5 1192.9,237.6 1194.3,239.9 C1195.7,242.1 1197.0,244.4 1198.3,246.7 C1199.6,249.1 1200.8,251.5 1201.9,254.0 C1203.0,256.5 1204.1,259.0 1205.1,261.6 C1206.1,264.2 1207.0,266.9 1207.8,269.6 C1208.7,272.4 1209.5,275.1 1210.2,278.0 C1210.9,280.8 1211.5,283.7 1212.0,286.6 C1212.6,289.6 1213.0,292.6 1213.3,295.7 C1213.7,298.8 1213.9,301.9 1214.0,305.1 C1214.2,308.3 1214.2,311.5 1214.1,314.8 C1214.0,318.1 1213.7,321.4 1213.4,324.8 C1213.1,328.2 1212.6,331.6 1212.0,335.0 C1211.5,338.4 1210.8,341.9 1210.0,345.3 C1209.2,348.8 1208.4,352.3 1207.4,355.7Z"/><path d="M850.0,552.0 L858.8,554.0 C860.3,555.6 864.3,560.1 868.0,563.5 C871.7,566.9 875.8,570.5 881.0,574.5 C886.2,578.5 896.4,585.3 899.5,587.5 L905,560 L880,500 L886.5,478 L870,475.3 L850,500Z"/><path d="M593.2,657.2 L593.3,655.5 L593.5,654.0 L593.8,652.6 L594.2,651.3 L594.7,650.1 L595.3,649.0 L596.1,648.1 L596.9,647.4 L800.0,506.5 L858.8,554.0 L633.2,708.2 L632.3,708.7 L631.2,709.0 L630.1,709.2 L628.9,709.2 L627.6,709.0 L626.3,708.7 L624.9,708.3 L623.4,707.7 L622.0,706.9 L620.5,706.0 L618.9,705.0 L617.4,703.8 L615.9,702.5 L614.3,701.1 L612.8,699.6 L611.2,697.9 L609.7,696.2 L608.2,694.4 L606.8,692.5 L605.4,690.5 L604.0,688.4 L602.7,686.3 L601.5,684.2 L600.3,682.0 L599.2,679.8 L598.2,677.6 L597.2,675.4 L596.4,673.2 L595.7,671.0 L595.0,668.8 L594.4,666.7 L594.0,664.7 L593.6,662.7 L593.4,660.8 L593.3,658.9Z M800.0,506.5 C802.7,504.6 810.7,498.9 816.0,495.3 C821.3,491.7 827.2,487.8 832.0,485.0 C836.8,482.2 840.7,480.2 845.0,478.6 C849.3,477.0 853.5,475.9 858.0,475.3 C862.5,474.8 867.0,474.9 871.8,475.3 C876.5,475.8 884.0,477.6 886.5,478.0 L900,500 L870,560 L858.8,554Z"/><path d="M633.2,708.2 C632.9,708.4 631.8,708.9 630.9,709.1 C630.1,709.2 629.2,709.2 628.2,709.1 C627.3,709.0 626.3,708.8 625.2,708.4 C624.2,708.0 623.1,707.5 622.0,706.9 C620.9,706.3 619.7,705.6 618.6,704.7 C617.4,703.9 616.2,702.9 615.1,701.8 C613.9,700.8 612.7,699.6 611.6,698.4 C610.5,697.1 609.3,695.8 608.2,694.4 C607.1,693.0 606.0,691.5 605.0,690.0 C604.0,688.4 603.0,686.9 602.1,685.2 C601.2,683.6 600.3,682.0 599.5,680.3 C598.7,678.7 597.9,677.0 597.2,675.4 C596.6,673.7 596.0,672.1 595.5,670.4 C595.0,668.8 594.5,667.2 594.2,665.7 C593.9,664.2 593.6,662.7 593.5,661.2 C593.3,659.8 593.2,658.5 593.2,657.2 C593.3,655.9 593.4,654.7 593.6,653.6 C593.8,652.5 594.1,651.5 594.5,650.7 C594.9,649.8 595.3,649.0 595.9,648.3 C596.4,647.7 597.1,647.2 597.8,646.8 C598.4,646.4 599.2,646.1 600.1,645.9 C600.9,645.8 601.8,645.8 602.8,645.9 C603.7,646.0 604.7,646.2 605.8,646.6 C606.8,647.0 607.9,647.5 609.0,648.1 C610.1,648.7 611.3,649.4 612.4,650.3 C613.6,651.1 614.8,652.1 615.9,653.2 C617.1,654.2 618.3,655.4 619.4,656.6 C620.5,657.9 621.7,659.2 622.8,660.6 C623.9,662.0 625.0,663.5 626.0,665.0 C627.0,666.6 628.0,668.1 628.9,669.8 C629.8,671.4 630.7,673.0 631.5,674.7 C632.3,676.3 633.1,678.0 633.8,679.6 C634.4,681.3 635.0,682.9 635.5,684.6 C636.0,686.2 636.5,687.8 636.8,689.3 C637.1,690.8 637.4,692.3 637.5,693.8 C637.7,695.2 637.8,696.5 637.8,697.8 C637.7,699.1 637.6,700.3 637.4,701.4 C637.2,702.5 636.9,703.5 636.5,704.3 C636.1,705.2 635.7,706.0 635.1,706.7 C634.6,707.3 633.6,708.0 633.2,708.2 C632.9,708.5 633.6,708.1 633.2,708.2Z"/><path d="M1057.5,480.7 L1145.6,352.0 L1426.0,553.7 L1428.7,556.0 L1431.2,558.5 L1433.5,561.3 L1435.6,564.4 L1437.4,567.7 L1438.9,571.3 L1440.2,575.1 L1441.2,579.1 L1441.9,583.3 L1442.4,587.6 L1442.6,592.1 L1442.5,596.7 L1442.1,601.5 L1441.4,606.3 L1440.5,611.1 L1439.3,616.0 L1437.8,620.8 L1436.1,625.7 L1434.1,630.5 L1431.9,635.3 L1429.5,639.9 L1426.8,644.5 L1424.0,648.9 L1420.9,653.2 L1417.7,657.2 L1414.3,661.1 L1410.8,664.8 L1407.1,668.2 L1403.3,671.4 L1399.5,674.4 L1395.6,677.0 L1391.6,679.4 L1387.6,681.4 L1383.6,683.2 L1379.6,684.6 L1375.6,685.6 L1371.6,686.4 L1367.8,686.8 L1364.0,686.9 L1360.3,686.6 L1356.7,686.0 L1353.3,685.1 L1350.0,683.8 L1346.9,682.2 L1344.0,680.3Z"/><path d="M1346.9,682.2 C1346.0,681.5 1343.2,679.8 1341.6,678.3 C1340.0,676.9 1338.4,675.2 1337.0,673.4 C1335.6,671.6 1334.4,669.7 1333.3,667.6 C1332.2,665.5 1331.2,663.2 1330.4,660.8 C1329.6,658.5 1329.0,656.0 1328.5,653.4 C1328.0,650.8 1327.7,648.0 1327.5,645.3 C1327.4,642.5 1327.4,639.6 1327.6,636.7 C1327.7,633.8 1328.1,630.8 1328.6,627.7 C1329.1,624.7 1329.7,621.7 1330.5,618.6 C1331.4,615.6 1332.3,612.5 1333.4,609.5 C1334.6,606.5 1335.8,603.5 1337.2,600.5 C1338.6,597.5 1340.2,594.6 1341.8,591.8 C1343.5,588.9 1345.3,586.1 1347.2,583.5 C1349.1,580.8 1351.1,578.2 1353.2,575.8 C1355.2,573.3 1357.4,570.9 1359.7,568.7 C1361.9,566.5 1364.3,564.5 1366.7,562.6 C1369.0,560.7 1371.5,558.9 1373.9,557.3 C1376.4,555.7 1378.9,554.3 1381.4,553.1 C1383.9,551.8 1386.4,550.8 1388.9,549.9 C1391.4,549.1 1393.9,548.4 1396.4,547.9 C1398.9,547.5 1401.3,547.2 1403.7,547.1 C1406.0,547.1 1408.4,547.2 1410.6,547.5 C1412.9,547.8 1415.1,548.4 1417.1,549.1 C1419.2,549.8 1421.2,550.7 1423.1,551.8 C1425.0,552.9 1426.8,554.2 1428.4,555.7 C1430.0,557.1 1431.6,558.8 1433.0,560.6 C1434.4,562.4 1435.6,564.3 1436.7,566.4 C1437.8,568.5 1438.8,570.8 1439.6,573.2 C1440.4,575.5 1441.0,578.0 1441.5,580.6 C1442.0,583.2 1442.3,586.0 1442.5,588.7 C1442.6,591.5 1442.6,594.4 1442.4,597.3 C1442.3,600.2 1441.9,603.2 1441.4,606.3 C1440.9,609.3 1440.3,612.3 1439.5,615.4 C1438.6,618.4 1437.7,621.5 1436.6,624.5 C1435.4,627.5 1434.2,630.5 1432.8,633.5 C1431.4,636.5 1429.8,639.4 1428.2,642.2 C1426.5,645.1 1424.7,647.9 1422.8,650.5 C1420.9,653.2 1418.9,655.8 1416.8,658.2 C1414.8,660.7 1412.6,663.1 1410.3,665.3 C1408.1,667.5 1405.7,669.5 1403.3,671.4 C1401.0,673.3 1398.5,675.1 1396.1,676.7 C1393.6,678.3 1391.1,679.7 1388.6,680.9 C1386.1,682.2 1383.6,683.2 1381.1,684.1 C1378.6,684.9 1376.1,685.6 1373.6,686.1 C1371.1,686.5 1368.7,686.8 1366.3,686.9 C1364.0,686.9 1361.6,686.8 1359.4,686.5 C1357.1,686.2 1354.9,685.6 1352.9,684.9 C1350.8,684.2 1347.9,682.6 1346.9,682.2 C1345.9,681.7 1347.8,682.8 1346.9,682.2Z"/></g><path d="M593.2,657.2 L593.3,655.5 L593.5,654.0 L593.8,652.6 L594.2,651.3 L594.7,650.1 L595.3,649.0 L596.1,648.1 L596.9,647.4 L800.0,506.5 L858.8,554.0 L633.2,708.2 L632.3,708.7 L631.2,709.0 L630.1,709.2 L628.9,709.2 L627.6,709.0 L626.3,708.7 L624.9,708.3 L623.4,707.7 L622.0,706.9 L620.5,706.0 L618.9,705.0 L617.4,703.8 L615.9,702.5 L614.3,701.1 L612.8,699.6 L611.2,697.9 L609.7,696.2 L608.2,694.4 L606.8,692.5 L605.4,690.5 L604.0,688.4 L602.7,686.3 L601.5,684.2 L600.3,682.0 L599.2,679.8 L598.2,677.6 L597.2,675.4 L596.4,673.2 L595.7,671.0 L595.0,668.8 L594.4,666.7 L594.0,664.7 L593.6,662.7 L593.4,660.8 L593.3,658.9Z M800.0,506.5 C802.7,504.6 810.7,498.9 816.0,495.3 C821.3,491.7 827.2,487.8 832.0,485.0 C836.8,482.2 840.7,480.2 845.0,478.6 C849.3,477.0 853.5,475.9 858.0,475.3 C862.5,474.8 867.0,474.9 871.8,475.3 C876.5,475.8 884.0,477.6 886.5,478.0 L900,500 L870,560 L858.8,554Z" fill="url(#gPipe)"/><path d="M633.2,708.2 C632.9,708.4 631.8,708.9 630.9,709.1 C630.1,709.2 629.2,709.2 628.2,709.1 C627.3,709.0 626.3,708.8 625.2,708.4 C624.2,708.0 623.1,707.5 622.0,706.9 C620.9,706.3 619.7,705.6 618.6,704.7 C617.4,703.9 616.2,702.9 615.1,701.8 C613.9,700.8 612.7,699.6 611.6,698.4 C610.5,697.1 609.3,695.8 608.2,694.4 C607.1,693.0 606.0,691.5 605.0,690.0 C604.0,688.4 603.0,686.9 602.1,685.2 C601.2,683.6 600.3,682.0 599.5,680.3 C598.7,678.7 597.9,677.0 597.2,675.4 C596.6,673.7 596.0,672.1 595.5,670.4 C595.0,668.8 594.5,667.2 594.2,665.7 C593.9,664.2 593.6,662.7 593.5,661.2 C593.3,659.8 593.2,658.5 593.2,657.2 C593.3,655.9 593.4,654.7 593.6,653.6 C593.8,652.5 594.1,651.5 594.5,650.7 C594.9,649.8 595.3,649.0 595.9,648.3 C596.4,647.7 597.1,647.2 597.8,646.8 C598.4,646.4 599.2,646.1 600.1,645.9 C600.9,645.8 601.8,645.8 602.8,645.9 C603.7,646.0 604.7,646.2 605.8,646.6 C606.8,647.0 607.9,647.5 609.0,648.1 C610.1,648.7 611.3,649.4 612.4,650.3 C613.6,651.1 614.8,652.1 615.9,653.2 C617.1,654.2 618.3,655.4 619.4,656.6 C620.5,657.9 621.7,659.2 622.8,660.6 C623.9,662.0 625.0,663.5 626.0,665.0 C627.0,666.6 628.0,668.1 628.9,669.8 C629.8,671.4 630.7,673.0 631.5,674.7 C632.3,676.3 633.1,678.0 633.8,679.6 C634.4,681.3 635.0,682.9 635.5,684.6 C636.0,686.2 636.5,687.8 636.8,689.3 C637.1,690.8 637.4,692.3 637.5,693.8 C637.7,695.2 637.8,696.5 637.8,697.8 C637.7,699.1 637.6,700.3 637.4,701.4 C637.2,702.5 636.9,703.5 636.5,704.3 C636.1,705.2 635.7,706.0 635.1,706.7 C634.6,707.3 633.6,708.0 633.2,708.2 C632.9,708.5 633.6,708.1 633.2,708.2Z" fill="#dfe400"/><g clip-path="url(#cPipe)"><g clip-path="url(#cCap)"><ellipse cx="620" cy="681" rx="7" ry="19" transform="rotate(-30 620 681)" fill="#bede0c" filter="url(#bl1)"/></g><ellipse cx="723" cy="607" rx="5" ry="11" transform="rotate(20 723 607)" fill="#cdee10" filter="url(#bl3)" opacity="0.9"/><ellipse cx="676" cy="640" rx="3" ry="8" transform="rotate(-30 676 640)" fill="#cdee10" filter="url(#bl3)" opacity="0.8"/></g><path d="M1207.4,355.7 C1206.5,359.2 1205.5,362.7 1204.4,366.1 C1203.4,369.6 1202.2,373.1 1201.1,376.5 C1200.0,379.9 1198.8,383.4 1197.6,386.8 C1196.4,390.2 1195.1,393.6 1193.9,397.0 C1192.7,400.5 1191.5,403.9 1190.2,407.3 C1188.9,410.7 1187.7,414.1 1186.4,417.6 C1185.1,421.0 1183.8,424.5 1182.4,427.9 C1181.0,431.4 1179.7,434.9 1178.2,438.3 C1176.7,441.8 1175.2,445.3 1173.5,448.8 C1171.9,452.2 1170.2,455.7 1168.4,459.2 C1166.6,462.6 1164.7,466.0 1162.7,469.4 C1160.6,472.7 1158.5,476.1 1156.3,479.3 C1154.0,482.5 1151.7,485.7 1149.2,488.8 C1146.8,491.8 1144.2,494.8 1141.6,497.7 C1139.0,500.5 1136.3,503.3 1133.5,505.9 C1130.7,508.6 1127.9,511.1 1125.1,513.6 C1122.2,516.0 1119.3,518.4 1116.4,520.7 C1113.5,522.9 1110.6,525.1 1107.7,527.2 C1104.8,529.4 1101.9,531.4 1099.0,533.5 C1096.1,535.5 1093.2,537.5 1090.4,539.5 C1087.5,541.5 1084.7,543.5 1081.8,545.5 C1078.9,547.5 1076.1,549.5 1073.3,551.6 C1070.4,553.6 1067.6,555.6 1064.7,557.6 C1061.8,559.7 1059.0,561.7 1056.1,563.7 C1053.1,565.7 1050.2,567.7 1047.3,569.7 C1044.3,571.6 1041.3,573.6 1038.3,575.4 C1035.3,577.2 1032.3,579.0 1029.3,580.7 C1026.2,582.4 1023.1,583.9 1020.1,585.4 C1017.0,586.8 1013.9,588.2 1010.8,589.4 C1007.7,590.6 1004.7,591.6 1001.6,592.6 C998.5,593.5 995.5,594.3 992.4,595.0 C989.4,595.7 986.4,596.3 983.4,596.7 C980.4,597.2 977.4,597.6 974.5,597.9 C971.5,598.2 968.6,598.4 965.6,598.5 C962.7,598.7 959.8,598.8 956.9,598.8 C954.0,598.9 951.1,598.8 948.2,598.8 C945.2,598.7 942.3,598.7 939.5,598.5 C936.6,598.3 933.7,598.1 930.8,597.8 C927.9,597.5 925.1,597.2 922.3,596.6 C919.5,596.1 916.7,595.5 914.0,594.8 C911.3,594.0 908.7,593.1 906.1,592.0 C903.6,590.9 901.2,589.6 898.9,588.1 C896.6,586.7 894.5,585.0 892.5,583.1 C890.5,581.2 888.7,579.1 887.1,576.8 C885.5,574.5 884.1,571.9 882.8,569.2 C881.6,566.5 880.6,563.6 879.8,560.6 C878.9,557.6 878.3,554.4 877.8,551.1 C877.3,547.8 877.0,544.4 876.9,541.0 C876.7,537.5 876.7,534.0 876.8,530.5 C876.8,527.0 877.0,523.5 877.2,520.0 C877.5,516.5 877.8,513.1 878.0,509.7 C878.3,506.3 878.6,502.9 878.9,499.6 C879.2,496.3 879.5,493.1 879.7,490.0 C879.9,486.8 880.0,483.7 880.1,480.7 C880.3,477.6 880.3,474.7 880.3,471.7 C880.3,468.8 880.2,465.9 880.2,462.9 C880.1,460.0 879.9,457.1 879.8,454.2 C879.7,451.3 879.5,448.4 879.3,445.4 C879.2,442.5 879.1,439.5 879.0,436.5 C878.9,433.5 878.8,430.4 878.8,427.3 C878.9,424.2 878.9,421.0 879.1,417.8 C879.3,414.6 879.5,411.3 879.9,408.0 C880.3,404.7 880.7,401.3 881.3,397.9 C881.9,394.6 882.6,391.1 883.4,387.7 C884.2,384.2 885.1,380.8 886.1,377.3 C887.2,373.8 888.3,370.3 889.6,366.8 C890.8,363.3 892.2,359.8 893.6,356.3 C895.1,352.8 896.6,349.3 898.3,345.8 C899.9,342.3 901.7,338.9 903.5,335.4 C905.3,332.0 907.2,328.6 909.2,325.2 C911.2,321.8 913.3,318.5 915.4,315.2 C917.5,311.9 919.8,308.6 922.0,305.4 C924.3,302.2 926.6,299.0 929.0,295.9 C931.4,292.7 933.8,289.7 936.3,286.6 C938.8,283.6 941.3,280.6 943.9,277.6 C946.4,274.7 949.1,271.8 951.7,268.9 C954.3,266.0 957.0,263.2 959.7,260.4 C962.4,257.6 965.2,254.9 968.0,252.2 C970.7,249.5 973.5,246.8 976.4,244.2 C979.2,241.6 982.1,239.0 985.0,236.5 C987.8,233.9 990.8,231.4 993.7,229.0 C996.7,226.6 999.7,224.2 1002.7,222.0 C1005.7,219.7 1008.8,217.5 1011.9,215.4 C1014.9,213.3 1018.0,211.3 1021.2,209.4 C1024.3,207.5 1027.4,205.7 1030.6,204.1 C1033.8,202.5 1036.9,201.0 1040.1,199.7 C1043.2,198.3 1046.4,197.2 1049.5,196.2 C1052.7,195.1 1055.8,194.3 1058.9,193.6 C1062.0,192.9 1065.0,192.4 1068.0,192.0 C1071.0,191.7 1074.0,191.5 1076.9,191.4 C1079.8,191.3 1082.7,191.3 1085.5,191.5 C1088.3,191.6 1091.1,191.9 1093.8,192.2 C1096.5,192.5 1099.2,193.0 1101.8,193.4 C1104.5,193.9 1107.1,194.4 1109.6,195.0 C1112.2,195.5 1114.7,196.1 1117.2,196.7 C1119.7,197.3 1122.2,197.9 1124.7,198.6 C1127.1,199.2 1129.6,199.8 1132.0,200.5 C1134.5,201.2 1136.9,201.8 1139.3,202.5 C1141.8,203.3 1144.2,204.0 1146.6,204.8 C1149.0,205.6 1151.3,206.4 1153.7,207.3 C1156.0,208.2 1158.3,209.2 1160.6,210.2 C1162.9,211.3 1165.1,212.4 1167.2,213.7 C1169.4,214.9 1171.5,216.2 1173.5,217.7 C1175.6,219.1 1177.5,220.7 1179.4,222.3 C1181.3,224.0 1183.1,225.7 1184.9,227.6 C1186.6,229.5 1188.2,231.4 1189.8,233.5 C1191.4,235.5 1192.9,237.6 1194.3,239.9 C1195.7,242.1 1197.0,244.4 1198.3,246.7 C1199.6,249.1 1200.8,251.5 1201.9,254.0 C1203.0,256.5 1204.1,259.0 1205.1,261.6 C1206.1,264.2 1207.0,266.9 1207.8,269.6 C1208.7,272.4 1209.5,275.1 1210.2,278.0 C1210.9,280.8 1211.5,283.7 1212.0,286.6 C1212.6,289.6 1213.0,292.6 1213.3,295.7 C1213.7,298.8 1213.9,301.9 1214.0,305.1 C1214.2,308.3 1214.2,311.5 1214.1,314.8 C1214.0,318.1 1213.7,321.4 1213.4,324.8 C1213.1,328.2 1212.6,331.6 1212.0,335.0 C1211.5,338.4 1210.8,341.9 1210.0,345.3 C1209.2,348.8 1208.4,352.3 1207.4,355.7Z" fill="#f94500"/><path d="M850.0,552.0 L858.8,554.0 C860.3,555.6 864.3,560.1 868.0,563.5 C871.7,566.9 875.8,570.5 881.0,574.5 C886.2,578.5 896.4,585.3 899.5,587.5 L905,560 L880,500 L886.5,478 L870,475.3 L850,500Z" fill="#e8c406"/><g clip-path="url(#cVol)"><path d="M930.0,262.0 C936.3,261.7 941.4,274.3 947.0,278.0 C952.6,281.7 964.5,285.9 972.0,290.0 C979.5,294.1 1000.6,302.3 1003.0,309.0 C1005.4,315.7 995.5,331.6 990.0,340.0 C984.5,348.4 967.9,363.7 962.0,372.0 C956.1,380.3 949.1,399.3 946.0,402.0 C942.9,404.7 940.9,394.1 939.0,392.0 C937.1,389.9 934.8,386.4 932.0,386.0 C929.2,385.6 921.6,388.1 918.0,389.0 C914.4,389.9 908.3,393.7 905.0,393.0 C901.7,392.3 897.7,384.1 893.0,384.0 C888.3,383.9 874.4,399.2 870.0,392.0 C865.6,384.8 856.0,344.9 860.0,330.0 C864.0,315.1 890.7,289.1 900.0,280.0 C909.3,270.9 923.7,262.3 930.0,262.0Z" fill="#f37c00"/><ellipse cx="964.5" cy="334" rx="3.2" ry="9.5" transform="rotate(12 964.5 334)" fill="#f2a50c"/><path d="M870.0,392.0 C873.1,380.5 888.3,383.9 893.0,384.0 C897.7,384.1 901.7,392.3 905.0,393.0 C908.3,393.7 914.4,389.9 918.0,389.0 C921.6,388.1 929.2,385.6 932.0,386.0 C934.8,386.4 937.1,389.9 939.0,392.0 C940.9,394.1 945.9,395.6 946.0,402.0 C946.1,408.4 941.1,429.6 940.0,440.0 C938.9,450.4 941.3,473.1 938.0,480.0 C934.7,486.9 921.4,491.7 915.0,492.0 C908.6,492.3 896.0,484.9 890.0,482.0 C884.0,479.1 872.7,482.0 870.0,470.0 C867.3,458.0 866.9,403.5 870.0,392.0Z" fill="#e64604"/><path d="M884.0,470.0 L887.0,479.0 L900.0,485.0 L914.0,495.0 L930.7,514.0 L948.0,535.5 L962.0,545.0 L975.0,552.0 L950.0,520.0 L940.0,470.0 L934.0,440.0 L915.0,460.0" fill="#e04a04"/><path d="M887.0,479.0 C889.2,480.0 895.5,482.3 900.0,485.0 C904.5,487.7 908.9,490.2 914.0,495.0 C919.1,499.8 925.0,507.2 930.7,514.0 C936.4,520.8 942.8,530.3 948.0,535.5 C953.2,540.7 959.7,543.4 962.0,545.0 L952,531 L941,515 L930,500 L916,488 L900,479 L889,474Z" fill="#d97a08"/><path d="M976.0,262.0 C976.8,258.6 980.6,252.8 985.0,250.0 C989.4,247.2 999.5,245.7 1005.0,243.0 C1010.5,240.3 1017.0,234.2 1022.0,232.0 C1027.0,229.8 1034.2,228.3 1038.0,228.5 C1041.8,228.7 1045.0,231.4 1047.0,233.0 C1049.0,234.6 1052.0,236.6 1051.0,239.0 C1050.0,241.4 1044.3,245.6 1040.0,249.0 C1035.7,252.4 1027.1,258.2 1022.0,262.0 C1016.9,265.8 1010.5,271.6 1006.0,274.0 C1001.5,276.4 995.9,278.1 992.0,278.0 C988.1,277.9 982.4,275.4 980.0,273.0 C977.6,270.6 975.2,265.4 976.0,262.0Z" fill="#fd0000"/><path d="M916.5,422.5 C918.5,423.1 919.7,429.1 920.0,434.0 C920.3,438.9 918.8,449.6 918.5,455.0 C918.2,460.4 919.0,466.9 918.0,470.0 C917.0,473.1 914.2,476.0 912.0,476.0 C909.8,476.0 905.2,473.6 903.0,470.0 C900.8,466.4 897.5,456.5 897.0,452.0 C896.5,447.5 898.5,443.3 900.0,440.0 C901.5,436.7 904.5,432.6 907.0,430.0 C909.5,427.4 914.5,421.9 916.5,422.5Z" fill="#dc0000"/><ellipse cx="1082" cy="199.5" rx="13" ry="4" transform="rotate(-8 1082 199.5)" fill="#f58206"/><path d="M1096.0,222.0 C1099.3,220.3 1106.1,217.0 1110.0,216.0 C1113.9,215.0 1121.3,214.1 1125.0,214.5 C1128.7,214.9 1134.7,217.3 1138.0,219.0 C1141.3,220.7 1151.1,226.2 1150.0,227.0 C1148.9,227.8 1135.3,224.9 1130.0,225.0 C1124.7,225.1 1115.3,226.8 1110.0,228.0 C1104.7,229.2 1094.0,232.9 1090.0,234.0 C1086.0,235.1 1080.7,236.7 1080.0,236.0 C1079.3,235.3 1082.9,230.9 1085.0,229.0 C1087.1,227.1 1092.7,223.7 1096.0,222.0Z" fill="#f58206"/><path d="M1150.0,204.0 C1152.4,203.3 1169.9,212.2 1176.0,217.0 C1182.1,221.8 1191.6,233.5 1196.0,240.0 C1200.4,246.5 1206.3,258.7 1209.0,266.0 C1211.7,273.3 1215.1,286.5 1216.0,295.0 C1216.9,303.5 1217.1,325.3 1216.0,330.0 C1214.9,334.7 1209.3,334.7 1208.0,330.0 C1206.7,325.3 1207.3,303.3 1206.0,295.0 C1204.7,286.7 1201.2,274.4 1198.0,268.0 C1194.8,261.6 1186.3,251.5 1182.0,247.0 C1177.7,242.5 1169.2,237.3 1166.0,234.0 C1162.8,230.7 1160.1,226.0 1158.0,222.0 C1155.9,218.0 1147.6,204.7 1150.0,204.0Z" fill="#ea0a00"/><path d="M950.0,536.0 C956.9,535.5 974.0,552.7 982.0,556.0 C990.0,559.3 1001.6,561.3 1010.0,561.0 C1018.4,560.7 1035.9,557.5 1045.0,554.0 C1054.1,550.5 1069.6,540.3 1078.0,535.0 C1086.4,529.7 1101.7,516.0 1108.0,514.0 C1114.3,512.0 1127.4,515.5 1125.0,520.0 C1122.6,524.5 1100.0,540.8 1090.0,548.0 C1080.0,555.2 1060.7,568.1 1050.0,574.0 C1039.3,579.9 1021.3,588.0 1010.0,592.0 C998.7,596.0 977.0,602.9 965.0,604.0 C953.0,605.1 929.3,602.5 920.0,600.0 C910.7,597.5 893.7,590.3 895.0,585.0 C896.3,579.7 922.7,566.5 930.0,560.0 C937.3,553.5 943.1,536.5 950.0,536.0Z" fill="#e33e04"/><path d="M1000.0,584.0 C1007.3,580.9 1022.7,576.2 1030.0,573.0 C1037.3,569.8 1050.5,561.3 1055.0,560.0 C1059.5,558.7 1065.3,560.6 1064.0,563.0 C1062.7,565.4 1051.5,574.3 1045.0,578.0 C1038.5,581.7 1023.0,588.2 1015.0,591.0 C1007.0,593.8 990.3,598.3 985.0,599.0 C979.7,599.7 973.0,598.0 975.0,596.0 C977.0,594.0 992.7,587.1 1000.0,584.0Z" fill="#e20a00"/><path d="M880.0,478.0 C886.7,479.3 895.3,485.5 900.0,488.0 C904.7,490.5 911.0,493.5 915.0,497.0 C919.0,500.5 925.6,508.8 930.0,514.0 C934.4,519.2 944.0,531.9 948.0,536.0 C952.0,540.1 961.7,541.8 960.0,545.0 C958.3,548.2 942.3,554.0 935.0,560.0 C927.7,566.0 912.3,587.6 905.0,590.0 C897.7,592.4 886.7,582.5 880.0,578.0 C873.3,573.5 860.3,563.7 855.0,556.0 C849.7,548.3 840.7,530.4 840.0,520.0 C839.3,509.6 844.7,483.6 850.0,478.0 C855.3,472.4 873.3,476.7 880.0,478.0Z" fill="#e8c406"/></g><g clip-path="url(#cPipe)"><path d="M812.0,492.0 C813.2,487.7 827.3,480.9 835.0,478.0 C842.7,475.1 860.7,469.7 870.0,470.0 C879.3,470.3 900.3,468.0 905.0,480.0 C909.7,492.0 911.0,549.3 905.0,560.0 C899.0,570.7 867.9,561.6 860.0,560.0 C852.1,558.4 848.9,552.3 846.0,548.0 C843.1,543.7 840.7,533.1 838.0,528.0 C835.3,522.9 829.5,514.8 826.0,510.0 C822.5,505.2 810.8,496.3 812.0,492.0Z" fill="#f1dc0a" filter="url(#bl3)"/></g><g clip-path="url(#cAll)"><path d="M820.0,493.0 C821.5,489.1 832.0,484.4 838.0,482.0 C844.0,479.6 853.1,477.4 860.0,477.0 C866.9,476.6 878.0,477.1 884.0,479.0 C890.0,480.9 896.4,486.1 900.0,490.0 C903.6,493.9 908.0,500.5 908.0,505.0 C908.0,509.5 904.2,517.3 900.0,520.0 C895.8,522.7 885.7,522.9 880.0,523.0 C874.3,523.1 866.5,520.2 862.0,521.0 C857.5,521.8 853.6,528.1 850.0,528.0 C846.4,527.9 841.3,523.0 838.0,520.0 C834.7,517.0 830.7,512.0 828.0,508.0 C825.3,503.9 818.5,496.9 820.0,493.0Z" fill="#edb606" filter="url(#bl1)"/><path d="M834.0,489.0 C835.2,486.4 844.3,481.7 850.0,480.0 C855.7,478.3 866.3,477.4 872.0,477.5 C877.7,477.6 884.0,478.8 888.0,481.0 C892.0,483.2 897.2,489.0 899.0,492.0 C900.8,495.0 901.4,498.9 900.0,501.0 C898.6,503.1 894.2,505.2 890.0,506.0 C885.8,506.8 877.2,506.4 872.0,506.0 C866.8,505.6 859.5,504.4 855.0,503.0 C850.5,501.6 845.1,499.1 842.0,497.0 C838.9,494.9 832.8,491.6 834.0,489.0Z" fill="#f68204" filter="url(#bl1)"/><path d="M893.0,582.0 C895.5,580.1 911.7,583.1 919.0,584.0 C926.3,584.9 940.5,589.1 948.0,589.0 C955.5,588.9 969.4,585.3 975.0,583.0 C980.6,580.7 987.2,574.8 990.0,572.0 C992.8,569.2 993.3,563.2 996.0,562.0 C998.7,560.8 1007.9,557.9 1010.0,563.0 C1012.1,568.1 1020.0,593.5 1012.0,600.0 C1004.0,606.5 964.9,612.3 950.0,612.0 C935.1,611.7 907.6,602.0 900.0,598.0 C892.4,594.0 890.5,583.9 893.0,582.0Z" fill="#e33e04"/><path d="M886.0,571.0 C887.4,569.0 902.6,566.3 908.5,566.0 C914.4,565.7 923.7,568.3 930.0,569.0 C936.3,569.7 950.4,572.2 956.0,571.5 C961.6,570.8 968.3,564.6 972.0,564.0 C975.7,563.4 981.2,567.5 984.0,567.0 C986.8,566.5 992.2,559.3 993.0,560.0 C993.8,560.7 992.4,568.9 990.0,572.0 C987.6,575.1 980.6,580.7 975.0,583.0 C969.4,585.3 955.5,588.9 948.0,589.0 C940.5,589.1 925.7,585.1 919.0,584.0 C912.3,582.9 902.4,582.7 898.0,581.0 C893.6,579.3 884.6,573.0 886.0,571.0Z" fill="#e07a06"/><path d="M905.0,549.0 C908.6,546.3 916.2,542.5 920.0,541.0 C923.8,539.5 929.8,538.4 933.5,538.0 C937.2,537.6 944.1,537.1 948.0,538.0 C951.9,538.9 959.0,543.1 963.0,545.0 C967.0,546.9 973.6,550.5 978.0,552.0 C982.4,553.5 994.9,554.5 996.0,556.5 C997.1,558.5 989.2,566.0 986.0,567.0 C982.8,568.0 976.0,563.4 972.0,564.0 C968.0,564.6 961.6,570.8 956.0,571.5 C950.4,572.2 936.3,569.7 930.0,569.0 C923.7,568.3 913.4,567.1 908.5,566.0 C903.6,564.9 893.5,563.3 893.0,561.0 C892.5,558.7 901.4,551.7 905.0,549.0Z" fill="#e2a608"/><ellipse cx="872" cy="549" rx="17" ry="12" transform="rotate(-25 872 549)" fill="#dfe60a" filter="url(#bl3)"/><ellipse cx="871" cy="550.5" rx="9" ry="5.5" transform="rotate(-25 871 550.5)" fill="#7fe61e" filter="url(#bl1)"/><ellipse cx="869.5" cy="551.5" rx="5.5" ry="3" transform="rotate(-25 869.5 551.5)" fill="#19e05a" filter="url(#bl1)"/><ellipse cx="867" cy="552.3" rx="3.2" ry="1.6" transform="rotate(-20 867 552.3)" fill="#19d2f0"/></g><path d="M1206.5,356.0 C1205.7,360.7 1204.6,365.5 1203.4,370.3 C1202.2,375.1 1200.8,380.0 1199.2,384.9 C1197.6,389.8 1195.8,394.7 1193.8,399.7 C1191.8,404.7 1189.6,409.7 1187.3,414.6 C1185.0,419.6 1182.4,424.6 1179.8,429.5 C1177.1,434.4 1174.2,439.3 1171.2,444.1 C1168.2,448.9 1165.1,453.6 1161.8,458.3 C1158.5,462.9 1155.1,467.5 1151.6,471.9 C1148.0,476.3 1144.4,480.6 1140.7,484.8 C1136.9,488.9 1133.1,492.9 1129.2,496.8 C1125.3,500.6 1121.4,504.3 1117.4,507.9 C1113.4,511.4 1109.3,514.7 1105.3,517.9 C1101.2,521.1 1097.1,524.0 1093.0,526.8 C1088.9,529.6 1084.8,532.2 1080.7,534.6 C1076.6,537.1 1072.5,539.3 1068.5,541.3 C1064.4,543.3 1060.4,545.2 1056.4,546.8 C1052.4,548.5 1048.5,549.9 1044.6,551.2 C1040.7,552.5 1036.8,553.6 1033.0,554.5 C1029.3,555.4 1025.5,556.1 1021.8,556.7 C1018.2,557.2 1014.6,557.6 1011.0,557.7 C1007.5,557.9 1004.1,557.9 1000.7,557.7 C997.3,557.6 994.0,557.2 990.8,556.7 C987.6,556.1 984.5,555.4 981.5,554.5 C978.5,553.6 975.6,552.5 972.8,551.2 C970.0,549.9 967.3,548.5 964.7,546.8 C962.1,545.2 959.7,543.4 957.4,541.4 C955.1,539.4 952.9,537.2 950.8,534.8 C948.8,532.4 946.9,529.9 945.2,527.2 C943.4,524.5 941.8,521.5 940.4,518.5 C939.0,515.4 937.8,512.2 936.7,508.8 C935.6,505.4 934.7,501.9 934.0,498.2 C933.2,494.5 932.7,490.6 932.3,486.7 C931.9,482.7 931.7,478.6 931.7,474.4 C931.7,470.2 931.9,465.9 932.3,461.5 C932.6,457.1 933.2,452.6 933.9,448.0 C934.6,443.4 935.5,438.8 936.6,434.1 C937.6,429.4 938.9,424.6 940.3,419.8 C941.7,415.0 943.3,410.2 945.1,405.3 C946.8,400.5 948.7,395.6 950.8,390.7 C952.9,385.8 955.1,380.9 957.5,376.1 C959.8,371.2 962.3,366.4 965.0,361.6 C967.6,356.8 970.4,352.0 973.4,347.3 C976.3,342.6 979.3,337.9 982.5,333.3 C985.6,328.8 988.9,324.2 992.3,319.8 C995.7,315.4 999.2,311.0 1002.8,306.8 C1006.3,302.6 1010.0,298.5 1013.8,294.5 C1017.5,290.5 1021.4,286.7 1025.3,283.0 C1029.2,279.3 1033.2,275.7 1037.2,272.3 C1041.2,269.0 1045.2,265.7 1049.3,262.7 C1053.4,259.7 1057.5,256.8 1061.6,254.1 C1065.7,251.5 1069.9,249.0 1074.0,246.8 C1078.1,244.5 1082.2,242.5 1086.3,240.7 C1090.4,238.8 1094.4,237.2 1098.4,235.9 C1102.4,234.5 1106.3,233.3 1110.2,232.4 C1114.1,231.5 1117.9,230.8 1121.6,230.3 C1125.4,229.8 1129.0,229.5 1132.5,229.5 C1136.1,229.4 1139.5,229.6 1142.9,230.0 C1146.2,230.4 1149.5,231.0 1152.6,231.8 C1155.7,232.5 1158.7,233.5 1161.6,234.7 C1164.5,235.9 1167.2,237.2 1169.9,238.8 C1172.5,240.3 1175.0,242.0 1177.4,243.9 C1179.8,245.8 1182.1,247.8 1184.2,250.0 C1186.4,252.2 1188.4,254.6 1190.3,257.1 C1192.1,259.5 1193.9,262.2 1195.5,265.0 C1197.1,267.8 1198.6,270.7 1200.0,273.7 C1201.3,276.8 1202.6,280.0 1203.7,283.3 C1204.7,286.6 1205.7,290.1 1206.5,293.7 C1207.3,297.2 1207.9,300.9 1208.4,304.8 C1208.9,308.6 1209.3,312.5 1209.5,316.6 C1209.6,320.7 1209.7,324.8 1209.5,329.1 C1209.4,333.4 1209.1,337.8 1208.6,342.3 C1208.1,346.8 1207.4,351.4 1206.5,356.0Z" fill="#e07a02"/><g clip-path="url(#cFace)"><path d="M1148.0,228.0 C1149.8,225.0 1163.7,228.7 1170.0,232.0 C1176.3,235.3 1184.6,242.8 1190.0,250.0 C1195.4,257.2 1202.7,271.0 1206.0,280.0 C1209.3,289.0 1213.5,307.0 1212.0,310.0 C1210.5,313.0 1199.9,304.2 1196.0,300.0 C1192.1,295.8 1190.2,286.5 1186.0,282.0 C1181.8,277.5 1172.2,274.5 1168.0,270.0 C1163.8,265.5 1161.0,258.3 1158.0,252.0 C1155.0,245.7 1146.2,231.0 1148.0,228.0Z" fill="#e04a06"/><path d="M1004.0,307.7 C1006.7,304.1 1017.9,292.4 1026.2,285.5 C1034.5,278.6 1050.4,267.2 1059.5,261.5 C1068.6,255.8 1083.4,248.3 1087.0,247.5 C1090.6,246.7 1087.7,252.2 1083.6,256.0 C1079.5,259.8 1065.9,267.4 1059.5,272.6 C1053.1,277.9 1046.5,286.0 1041.0,291.0 C1035.5,296.0 1027.5,303.1 1022.5,305.9 C1017.5,308.7 1010.8,309.3 1008.0,309.6 C1005.2,309.9 1001.3,311.3 1004.0,307.7Z" fill="#e04a06"/><path d="M938.0,415.0 C939.6,409.0 942.8,400.0 944.0,400.0 C945.2,400.0 946.5,408.2 946.0,415.0 C945.5,421.8 941.9,435.2 941.0,445.0 C940.1,454.8 941.0,476.2 940.0,480.0 C939.0,483.8 935.0,476.0 934.0,470.0 C933.0,464.0 932.4,448.2 933.0,440.0 C933.6,431.8 936.4,421.0 938.0,415.0Z" fill="#e35206"/><path d="M1197.2,372.1 C1196.7,376.3 1196.0,380.6 1195.1,384.9 C1194.2,389.2 1193.0,393.7 1191.6,398.1 C1190.2,402.5 1188.6,407.0 1186.7,411.5 C1184.9,415.9 1182.8,420.4 1180.5,424.7 C1178.1,429.1 1175.6,433.5 1172.9,437.7 C1170.2,441.9 1167.3,446.0 1164.4,450.0 C1161.4,454.0 1158.2,457.9 1155.0,461.6 C1151.8,465.3 1148.4,468.9 1145.1,472.4 C1141.7,475.8 1138.2,479.1 1134.8,482.3 C1131.4,485.4 1127.9,488.4 1124.4,491.3 C1120.9,494.3 1117.4,497.0 1114.0,499.8 C1110.5,502.5 1107.0,505.1 1103.5,507.6 C1100.0,510.1 1096.6,512.6 1093.1,515.0 C1089.6,517.4 1086.1,519.7 1082.6,522.0 C1079.1,524.3 1075.6,526.5 1072.0,528.6 C1068.5,530.8 1064.9,532.8 1061.3,534.8 C1057.7,536.7 1054.0,538.6 1050.4,540.3 C1046.7,542.1 1043.1,543.7 1039.4,545.1 C1035.7,546.5 1032.0,547.8 1028.4,548.8 C1024.7,549.8 1021.1,550.7 1017.5,551.3 C1013.9,551.9 1010.4,552.2 1007.0,552.3 C1003.6,552.4 1000.2,552.3 997.0,551.8 C993.7,551.4 990.6,550.7 987.6,549.8 C984.7,548.9 981.8,547.7 979.1,546.3 C976.4,544.8 973.9,543.2 971.5,541.3 C969.2,539.5 967.0,537.4 964.9,535.2 C962.8,533.0 960.9,530.6 959.2,528.0 C957.4,525.5 955.8,522.8 954.3,520.0 C952.8,517.2 951.5,514.3 950.3,511.3 C949.0,508.3 947.9,505.2 947.0,502.0 C946.0,498.8 945.1,495.5 944.4,492.1 C943.6,488.7 943.0,485.3 942.5,481.7 C942.0,478.2 941.6,474.6 941.4,470.8 C941.1,467.1 941.0,463.3 941.1,459.4 C941.2,455.5 941.4,451.5 941.8,447.4 C942.2,443.4 942.8,439.2 943.6,435.0 C944.4,430.8 945.4,426.5 946.5,422.2 C947.7,417.9 949.1,413.6 950.7,409.2 C952.3,404.9 954.0,400.5 956.0,396.2 C957.9,391.9 960.1,387.6 962.4,383.4 C964.7,379.2 967.2,375.0 969.8,370.9 C972.4,366.8 975.2,362.8 978.0,358.9 C980.8,355.0 983.8,351.2 986.8,347.5 C989.8,343.8 993.0,340.2 996.1,336.7 C999.2,333.2 1002.5,329.8 1005.7,326.5 C1008.9,323.2 1012.2,320.0 1015.5,316.9 C1018.8,313.7 1022.1,310.7 1025.5,307.7 C1028.8,304.7 1032.2,301.8 1035.6,298.9 C1039.0,296.0 1042.4,293.2 1045.9,290.5 C1049.4,287.8 1052.9,285.1 1056.5,282.5 C1060.1,279.9 1063.7,277.4 1067.3,275.0 C1071.0,272.6 1074.7,270.3 1078.4,268.2 C1082.2,266.1 1086.0,264.1 1089.7,262.3 C1093.5,260.5 1097.3,258.9 1101.1,257.6 C1104.9,256.2 1108.6,255.0 1112.3,254.2 C1116.0,253.3 1119.7,252.7 1123.3,252.4 C1126.8,252.1 1130.3,252.0 1133.7,252.3 C1137.0,252.5 1140.3,253.1 1143.4,253.9 C1146.4,254.7 1149.4,255.7 1152.1,257.1 C1154.9,258.4 1157.5,260.0 1160.0,261.8 C1162.4,263.5 1164.7,265.5 1166.8,267.7 C1168.9,269.8 1170.9,272.2 1172.7,274.6 C1174.5,277.0 1176.2,279.6 1177.7,282.3 C1179.3,284.9 1180.7,287.7 1182.1,290.5 C1183.5,293.3 1184.7,296.2 1185.9,299.1 C1187.1,302.1 1188.2,305.1 1189.2,308.1 C1190.3,311.2 1191.2,314.3 1192.1,317.4 C1193.0,320.6 1193.8,323.9 1194.6,327.2 C1195.3,330.5 1196.0,333.9 1196.5,337.5 C1197.0,341.0 1197.4,344.6 1197.7,348.4 C1197.9,352.1 1198.1,356.0 1198.0,359.9 C1197.9,363.9 1197.7,368.0 1197.2,372.1Z" fill="#e8a406"/><path d="M1182.0,383.9 C1181.5,387.6 1180.7,391.4 1179.8,395.2 C1178.9,399.0 1177.7,402.9 1176.4,406.7 C1175.1,410.6 1173.6,414.5 1171.9,418.4 C1170.2,422.3 1168.3,426.2 1166.2,430.0 C1164.2,433.8 1161.9,437.6 1159.5,441.3 C1157.1,445.0 1154.5,448.6 1151.8,452.1 C1149.1,455.6 1146.3,459.0 1143.4,462.3 C1140.5,465.5 1137.4,468.6 1134.4,471.6 C1131.3,474.5 1128.2,477.3 1125.1,480.0 C1121.9,482.7 1118.8,485.2 1115.6,487.6 C1112.5,490.0 1109.3,492.3 1106.2,494.5 C1103.1,496.7 1100.0,498.7 1096.9,500.7 C1093.8,502.7 1090.7,504.7 1087.7,506.5 C1084.6,508.4 1081.6,510.2 1078.5,512.0 C1075.5,513.8 1072.5,515.5 1069.4,517.3 C1066.4,519.0 1063.3,520.7 1060.2,522.3 C1057.2,523.9 1054.1,525.6 1050.9,527.1 C1047.8,528.6 1044.6,530.1 1041.4,531.5 C1038.3,532.9 1035.0,534.2 1031.8,535.4 C1028.6,536.5 1025.4,537.5 1022.2,538.4 C1019.0,539.2 1015.8,539.9 1012.6,540.3 C1009.5,540.8 1006.4,541.1 1003.4,541.1 C1000.4,541.1 997.4,540.8 994.6,540.4 C991.8,539.9 989.1,539.2 986.6,538.2 C984.1,537.2 981.6,536.0 979.4,534.5 C977.2,533.1 975.1,531.4 973.2,529.5 C971.4,527.7 969.7,525.6 968.1,523.3 C966.6,521.1 965.2,518.7 964.0,516.1 C962.8,513.6 961.8,510.9 960.9,508.1 C959.9,505.4 959.2,502.5 958.6,499.5 C957.9,496.6 957.4,493.6 957.0,490.5 C956.6,487.4 956.3,484.3 956.1,481.1 C955.9,477.9 955.8,474.7 955.7,471.5 C955.7,468.2 955.8,464.9 955.9,461.5 C956.1,458.2 956.3,454.8 956.7,451.3 C957.1,447.8 957.5,444.3 958.1,440.8 C958.7,437.2 959.5,433.6 960.3,429.9 C961.2,426.2 962.2,422.5 963.4,418.8 C964.5,415.1 965.8,411.3 967.3,407.5 C968.8,403.7 970.5,399.9 972.3,396.2 C974.1,392.4 976.1,388.6 978.2,384.9 C980.3,381.2 982.7,377.6 985.1,374.0 C987.5,370.4 990.1,366.9 992.8,363.5 C995.4,360.1 998.2,356.8 1001.1,353.7 C1004.0,350.5 1007.0,347.4 1010.0,344.5 C1013.0,341.6 1016.1,338.8 1019.2,336.1 C1022.2,333.4 1025.4,330.9 1028.5,328.4 C1031.7,326.0 1034.9,323.7 1038.0,321.5 C1041.2,319.2 1044.4,317.1 1047.5,315.1 C1050.7,313.1 1053.9,311.1 1057.1,309.3 C1060.2,307.4 1063.4,305.7 1066.6,304.0 C1069.8,302.3 1072.9,300.7 1076.1,299.1 C1079.3,297.6 1082.5,296.2 1085.7,294.8 C1088.9,293.5 1092.1,292.2 1095.3,291.1 C1098.5,290.0 1101.7,289.0 1104.9,288.1 C1108.1,287.3 1111.3,286.6 1114.4,286.0 C1117.5,285.5 1120.6,285.1 1123.6,285.0 C1126.6,284.8 1129.6,284.9 1132.5,285.1 C1135.4,285.3 1138.2,285.8 1140.8,286.4 C1143.5,287.1 1146.1,288.0 1148.5,289.0 C1151.0,290.1 1153.3,291.4 1155.5,292.8 C1157.6,294.3 1159.7,295.9 1161.6,297.7 C1163.5,299.5 1165.2,301.5 1166.8,303.6 C1168.5,305.7 1169.9,308.0 1171.3,310.4 C1172.7,312.7 1173.9,315.2 1175.0,317.8 C1176.1,320.4 1177.1,323.1 1178.0,325.8 C1178.9,328.6 1179.7,331.4 1180.3,334.4 C1181.0,337.3 1181.6,340.3 1182.1,343.3 C1182.6,346.4 1182.9,349.6 1183.2,352.8 C1183.5,356.0 1183.6,359.3 1183.6,362.7 C1183.6,366.1 1183.5,369.6 1183.3,373.1 C1183.0,376.6 1182.6,380.3 1182.0,383.9Z" fill="#e8c404"/><path d="M1161.7,388.7 C1160.8,391.9 1159.7,395.2 1158.6,398.4 C1157.5,401.7 1156.3,404.9 1155.0,408.1 C1153.7,411.3 1152.3,414.5 1150.8,417.6 C1149.3,420.8 1147.8,423.9 1146.1,427.0 C1144.5,430.0 1142.8,433.1 1141.0,436.1 C1139.3,439.0 1137.4,442.0 1135.5,444.8 C1133.6,447.7 1131.7,450.5 1129.7,453.3 C1127.7,456.0 1125.6,458.7 1123.5,461.4 C1121.4,464.0 1119.3,466.6 1117.1,469.0 C1114.9,471.5 1112.7,474.0 1110.4,476.3 C1108.1,478.7 1105.9,480.9 1103.5,483.1 C1101.2,485.3 1098.9,487.5 1096.5,489.5 C1094.1,491.6 1091.7,493.5 1089.3,495.4 C1086.8,497.3 1084.4,499.1 1081.9,500.8 C1079.5,502.5 1077.0,504.2 1074.5,505.7 C1072.0,507.2 1069.5,508.7 1066.9,510.0 C1064.4,511.4 1061.9,512.6 1059.4,513.7 C1056.8,514.9 1054.3,515.9 1051.8,516.8 C1049.2,517.8 1046.7,518.6 1044.2,519.3 C1041.7,520.0 1039.2,520.5 1036.7,521.0 C1034.2,521.4 1031.8,521.7 1029.3,521.9 C1026.9,522.1 1024.5,522.1 1022.1,522.0 C1019.8,521.9 1017.5,521.6 1015.2,521.2 C1013.0,520.8 1010.8,520.2 1008.7,519.5 C1006.5,518.8 1004.5,517.9 1002.5,516.9 C1000.6,515.9 998.7,514.7 996.9,513.3 C995.1,511.9 993.4,510.4 991.9,508.8 C990.3,507.1 988.8,505.2 987.5,503.3 C986.2,501.3 985.0,499.1 983.9,496.9 C982.9,494.6 982.0,492.2 981.2,489.6 C980.4,487.1 979.8,484.4 979.3,481.7 C978.8,478.9 978.5,476.0 978.3,473.0 C978.1,470.1 978.1,467.0 978.2,463.9 C978.3,460.7 978.6,457.5 979.0,454.3 C979.4,451.0 980.0,447.7 980.7,444.4 C981.4,441.1 982.2,437.8 983.2,434.4 C984.2,431.1 985.3,427.7 986.5,424.4 C987.6,421.1 989.0,417.8 990.4,414.5 C991.8,411.2 993.3,408.0 994.9,404.8 C996.5,401.6 998.2,398.4 999.9,395.4 C1001.7,392.3 1003.5,389.2 1005.4,386.3 C1007.3,383.3 1009.2,380.4 1011.2,377.5 C1013.2,374.7 1015.2,371.9 1017.3,369.2 C1019.4,366.5 1021.5,363.8 1023.6,361.3 C1025.8,358.7 1028.0,356.2 1030.2,353.7 C1032.4,351.3 1034.6,348.9 1036.9,346.6 C1039.2,344.3 1041.4,342.1 1043.8,339.9 C1046.1,337.7 1048.4,335.6 1050.8,333.5 C1053.1,331.5 1055.5,329.5 1057.9,327.6 C1060.3,325.7 1062.7,323.8 1065.2,322.1 C1067.6,320.3 1070.1,318.6 1072.6,317.0 C1075.1,315.4 1077.6,313.8 1080.1,312.4 C1082.7,310.9 1085.2,309.6 1087.8,308.4 C1090.3,307.1 1092.9,306.0 1095.5,305.0 C1098.0,304.0 1100.6,303.1 1103.1,302.3 C1105.7,301.5 1108.3,300.9 1110.8,300.4 C1113.3,299.9 1115.8,299.6 1118.2,299.4 C1120.7,299.2 1123.1,299.2 1125.5,299.3 C1127.9,299.5 1130.2,299.8 1132.4,300.3 C1134.7,300.7 1136.8,301.4 1138.9,302.2 C1141.0,303.0 1143.0,304.0 1144.9,305.1 C1146.8,306.3 1148.6,307.6 1150.3,309.1 C1152.0,310.6 1153.6,312.2 1155.0,314.0 C1156.5,315.8 1157.8,317.8 1159.0,319.9 C1160.2,322.0 1161.3,324.2 1162.2,326.6 C1163.1,329.0 1163.9,331.5 1164.5,334.1 C1165.2,336.7 1165.7,339.4 1166.1,342.2 C1166.4,345.0 1166.7,347.9 1166.8,350.8 C1166.9,353.8 1166.8,356.8 1166.6,359.9 C1166.5,363.0 1166.2,366.2 1165.7,369.3 C1165.3,372.5 1164.7,375.7 1164.0,379.0 C1163.4,382.2 1162.6,385.4 1161.7,388.7Z" fill="#e2dc06"/><path d="M1002.0,445.0 C1003.5,446.8 1003.9,463.6 1006.0,470.0 C1008.1,476.4 1012.4,483.8 1016.0,488.0 C1019.6,492.2 1029.1,495.8 1030.0,498.0 C1030.9,500.2 1025.6,503.6 1022.0,503.0 C1018.4,502.4 1009.6,497.8 1006.0,494.0 C1002.4,490.2 999.5,483.4 998.0,478.0 C996.5,472.6 995.4,462.9 996.0,458.0 C996.6,453.1 1000.5,443.2 1002.0,445.0Z" fill="#c9de08" filter="url(#bl1)"/><path d="M1206.5,356.0 C1205.7,360.7 1204.6,365.5 1203.4,370.3 C1202.2,375.1 1200.8,380.0 1199.2,384.9 C1197.6,389.8 1195.8,394.7 1193.8,399.7 C1191.8,404.7 1189.6,409.7 1187.3,414.6 C1185.0,419.6 1182.4,424.6 1179.8,429.5 C1177.1,434.4 1174.2,439.3 1171.2,444.1 C1168.2,448.9 1165.1,453.6 1161.8,458.3 C1158.5,462.9 1155.1,467.5 1151.6,471.9 C1148.0,476.3 1144.4,480.6 1140.7,484.8 C1136.9,488.9 1133.1,492.9 1129.2,496.8 C1125.3,500.6 1121.4,504.3 1117.4,507.9 C1113.4,511.4 1109.3,514.7 1105.3,517.9 C1101.2,521.1 1097.1,524.0 1093.0,526.8 C1088.9,529.6 1084.8,532.2 1080.7,534.6 C1076.6,537.1 1072.5,539.3 1068.5,541.3 C1064.4,543.3 1060.4,545.2 1056.4,546.8 C1052.4,548.5 1048.5,549.9 1044.6,551.2 C1040.7,552.5 1036.8,553.6 1033.0,554.5 C1029.3,555.4 1025.5,556.1 1021.8,556.7 C1018.2,557.2 1014.6,557.6 1011.0,557.7 C1007.5,557.9 1004.1,557.9 1000.7,557.7 C997.3,557.6 994.0,557.2 990.8,556.7 C987.6,556.1 984.5,555.4 981.5,554.5 C978.5,553.6 975.6,552.5 972.8,551.2 C970.0,549.9 967.3,548.5 964.7,546.8 C962.1,545.2 959.7,543.4 957.4,541.4 C955.1,539.4 952.9,537.2 950.8,534.8 C948.8,532.4 946.9,529.9 945.2,527.2 C943.4,524.5 941.8,521.5 940.4,518.5 C939.0,515.4 937.8,512.2 936.7,508.8 C935.6,505.4 934.7,501.9 934.0,498.2 C933.2,494.5 932.7,490.6 932.3,486.7 C931.9,482.7 931.7,478.6 931.7,474.4 C931.7,470.2 931.9,465.9 932.3,461.5 C932.6,457.1 933.2,452.6 933.9,448.0 C934.6,443.4 935.5,438.8 936.6,434.1 C937.6,429.4 938.9,424.6 940.3,419.8 C941.7,415.0 943.3,410.2 945.1,405.3 C946.8,400.5 948.7,395.6 950.8,390.7 C952.9,385.8 955.1,380.9 957.5,376.1 C959.8,371.2 962.3,366.4 965.0,361.6 C967.6,356.8 970.4,352.0 973.4,347.3 C976.3,342.6 979.3,337.9 982.5,333.3 C985.6,328.8 988.9,324.2 992.3,319.8 C995.7,315.4 999.2,311.0 1002.8,306.8 C1006.3,302.6 1010.0,298.5 1013.8,294.5 C1017.5,290.5 1021.4,286.7 1025.3,283.0 C1029.2,279.3 1033.2,275.7 1037.2,272.3 C1041.2,269.0 1045.2,265.7 1049.3,262.7 C1053.4,259.7 1057.5,256.8 1061.6,254.1 C1065.7,251.5 1069.9,249.0 1074.0,246.8 C1078.1,244.5 1082.2,242.5 1086.3,240.7 C1090.4,238.8 1094.4,237.2 1098.4,235.9 C1102.4,234.5 1106.3,233.3 1110.2,232.4 C1114.1,231.5 1117.9,230.8 1121.6,230.3 C1125.4,229.8 1129.0,229.5 1132.5,229.5 C1136.1,229.4 1139.5,229.6 1142.9,230.0 C1146.2,230.4 1149.5,231.0 1152.6,231.8 C1155.7,232.5 1158.7,233.5 1161.6,234.7 C1164.5,235.9 1167.2,237.2 1169.9,238.8 C1172.5,240.3 1175.0,242.0 1177.4,243.9 C1179.8,245.8 1182.1,247.8 1184.2,250.0 C1186.4,252.2 1188.4,254.6 1190.3,257.1 C1192.1,259.5 1193.9,262.2 1195.5,265.0 C1197.1,267.8 1198.6,270.7 1200.0,273.7 C1201.3,276.8 1202.6,280.0 1203.7,283.3 C1204.7,286.6 1205.7,290.1 1206.5,293.7 C1207.3,297.2 1207.9,300.9 1208.4,304.8 C1208.9,308.6 1209.3,312.5 1209.5,316.6 C1209.6,320.7 1209.7,324.8 1209.5,329.1 C1209.4,333.4 1209.1,337.8 1208.6,342.3 C1208.1,346.8 1207.4,351.4 1206.5,356.0Z" fill="url(#gShade)"/></g><g fill="none" stroke="#0c0c0c" stroke-width="1.6" stroke-linecap="round"><path d="M1206.5,356.0 C1205.7,360.7 1204.6,365.5 1203.4,370.3 C1202.2,375.1 1200.8,380.0 1199.2,384.9 C1197.6,389.8 1195.8,394.7 1193.8,399.7 C1191.8,404.7 1189.6,409.7 1187.3,414.6 C1185.0,419.6 1182.4,424.6 1179.8,429.5 C1177.1,434.4 1174.2,439.3 1171.2,444.1 C1168.2,448.9 1165.1,453.6 1161.8,458.3 C1158.5,462.9 1155.1,467.5 1151.6,471.9 C1148.0,476.3 1144.4,480.6 1140.7,484.8 C1136.9,488.9 1133.1,492.9 1129.2,496.8 C1125.3,500.6 1121.4,504.3 1117.4,507.9 C1113.4,511.4 1109.3,514.7 1105.3,517.9 C1101.2,521.1 1097.1,524.0 1093.0,526.8 C1088.9,529.6 1084.8,532.2 1080.7,534.6 C1076.6,537.1 1072.5,539.3 1068.5,541.3 C1064.4,543.3 1060.4,545.2 1056.4,546.8 C1052.4,548.5 1048.5,549.9 1044.6,551.2 C1040.7,552.5 1036.8,553.6 1033.0,554.5 C1029.3,555.4 1025.5,556.1 1021.8,556.7 C1018.2,557.2 1014.6,557.6 1011.0,557.7 C1007.5,557.9 1004.1,557.9 1000.7,557.7 C997.3,557.6 994.0,557.2 990.8,556.7 C987.6,556.1 984.5,555.4 981.5,554.5 C978.5,553.6 975.6,552.5 972.8,551.2 C970.0,549.9 967.3,548.5 964.7,546.8 C962.1,545.2 959.7,543.4 957.4,541.4 C955.1,539.4 952.9,537.2 950.8,534.8 C948.8,532.4 946.9,529.9 945.2,527.2 C943.4,524.5 941.8,521.5 940.4,518.5 C939.0,515.4 937.8,512.2 936.7,508.8 C935.6,505.4 934.7,501.9 934.0,498.2 C933.2,494.5 932.7,490.6 932.3,486.7 C931.9,482.7 931.7,478.6 931.7,474.4 C931.7,470.2 931.9,465.9 932.3,461.5 C932.6,457.1 933.2,452.6 933.9,448.0 C934.6,443.4 935.5,438.8 936.6,434.1 C937.6,429.4 938.9,424.6 940.3,419.8 C941.7,415.0 943.3,410.2 945.1,405.3 C946.8,400.5 948.7,395.6 950.8,390.7 C952.9,385.8 955.1,380.9 957.5,376.1 C959.8,371.2 962.3,366.4 965.0,361.6 C967.6,356.8 970.4,352.0 973.4,347.3 C976.3,342.6 979.3,337.9 982.5,333.3 C985.6,328.8 988.9,324.2 992.3,319.8 C995.7,315.4 999.2,311.0 1002.8,306.8 C1006.3,302.6 1010.0,298.5 1013.8,294.5 C1017.5,290.5 1021.4,286.7 1025.3,283.0 C1029.2,279.3 1033.2,275.7 1037.2,272.3 C1041.2,269.0 1045.2,265.7 1049.3,262.7 C1053.4,259.7 1057.5,256.8 1061.6,254.1 C1065.7,251.5 1069.9,249.0 1074.0,246.8 C1078.1,244.5 1082.2,242.5 1086.3,240.7 C1090.4,238.8 1094.4,237.2 1098.4,235.9 C1102.4,234.5 1106.3,233.3 1110.2,232.4 C1114.1,231.5 1117.9,230.8 1121.6,230.3 C1125.4,229.8 1129.0,229.5 1132.5,229.5 C1136.1,229.4 1139.5,229.6 1142.9,230.0 C1146.2,230.4 1149.5,231.0 1152.6,231.8 C1155.7,232.5 1158.7,233.5 1161.6,234.7 C1164.5,235.9 1167.2,237.2 1169.9,238.8 C1172.5,240.3 1175.0,242.0 1177.4,243.9 C1179.8,245.8 1182.1,247.8 1184.2,250.0 C1186.4,252.2 1188.4,254.6 1190.3,257.1 C1192.1,259.5 1193.9,262.2 1195.5,265.0 C1197.1,267.8 1198.6,270.7 1200.0,273.7 C1201.3,276.8 1202.6,280.0 1203.7,283.3 C1204.7,286.6 1205.7,290.1 1206.5,293.7 C1207.3,297.2 1207.9,300.9 1208.4,304.8 C1208.9,308.6 1209.3,312.5 1209.5,316.6 C1209.6,320.7 1209.7,324.8 1209.5,329.1 C1209.4,333.4 1209.1,337.8 1208.6,342.3 C1208.1,346.8 1207.4,351.4 1206.5,356.0Z"/><path d="M1075.7,205.0 C1072.2,206.3 1061.5,210.2 1055.0,213.0 C1048.5,215.8 1044.0,217.1 1036.9,221.7 C1029.8,226.3 1018.6,234.8 1012.4,240.7 C1006.2,246.6 1002.3,252.6 999.5,257.0 C996.7,261.4 995.5,264.9 995.6,267.0 C995.7,269.1 997.3,269.7 1000.0,269.5 C1002.7,269.3 1006.3,268.2 1012.0,266.0 C1017.7,263.8 1024.9,260.8 1034.0,256.5 C1043.1,252.2 1055.9,245.4 1066.8,240.5 C1077.7,235.6 1089.8,229.9 1099.5,227.0 C1109.2,224.1 1117.6,223.2 1125.0,223.0 C1132.4,222.8 1137.5,223.9 1144.0,225.7 C1150.5,227.5 1160.7,232.6 1164.0,234.0"/><path d="M887.0,479.0 C889.2,480.0 895.5,482.3 900.0,485.0 C904.5,487.7 908.9,490.2 914.0,495.0 C919.1,499.8 925.0,507.2 930.7,514.0 C936.4,520.8 942.8,530.3 948.0,535.5 C953.2,540.7 959.7,543.4 962.0,545.0"/><path d="M787.6,514.8 C789.3,515.8 794.8,518.4 798.0,520.5 C801.2,522.6 803.3,523.7 807.0,527.7 C810.7,531.7 816.8,538.9 820.0,544.4 C823.2,549.9 825.1,556.3 826.4,561.0 C827.7,565.7 827.5,570.6 827.7,572.5"/><path d="M597.8,646.8 C598.1,646.6 599.0,646.2 599.7,646.0 C600.3,645.8 601.1,645.8 601.8,645.8 C602.6,645.8 603.4,645.9 604.2,646.1 C605.1,646.3 605.9,646.6 606.8,647.0 C607.7,647.4 608.7,647.8 609.6,648.4 C610.5,648.9 611.5,649.6 612.4,650.3 C613.4,651.0 614.4,651.8 615.3,652.6 C616.3,653.5 617.3,654.4 618.2,655.4 C619.2,656.4 620.2,657.5 621.1,658.6 C622.0,659.7 623.0,660.9 623.9,662.1 C624.8,663.3 625.6,664.5 626.5,665.8 C627.3,667.1 628.2,668.4 628.9,669.8 C629.7,671.1 630.4,672.5 631.1,673.8 C631.8,675.2 632.5,676.6 633.1,678.0 C633.7,679.4 634.2,680.7 634.7,682.1 C635.2,683.5 635.6,684.8 636.0,686.2 C636.4,687.5 636.7,688.8 637.0,690.1 C637.2,691.3 637.4,692.6 637.5,693.8 C637.7,694.9 637.7,696.1 637.8,697.2 C637.8,698.3 637.7,699.3 637.6,700.2 C637.5,701.2 637.3,702.1 637.0,702.9 C636.8,703.8 636.5,704.5 636.1,705.2 C635.8,705.9 635.3,706.5 634.9,707.0 C634.4,707.5 633.5,708.0 633.2,708.2"/></g><path d="M1163.6,377.8 C1163.2,380.5 1162.7,383.3 1162.0,386.1 C1161.4,388.9 1160.6,391.8 1159.7,394.7 C1158.8,397.6 1157.8,400.6 1156.7,403.7 C1155.5,406.7 1154.3,409.7 1152.9,412.8 C1151.5,415.8 1150.0,418.9 1148.4,422.0 C1146.7,425.1 1145.0,428.1 1143.1,431.2 C1141.3,434.2 1139.3,437.2 1137.3,440.2 C1135.2,443.1 1133.1,446.0 1130.9,448.8 C1128.7,451.7 1126.4,454.4 1124.0,457.1 C1121.7,459.7 1119.2,462.3 1116.8,464.8 C1114.3,467.2 1111.8,469.6 1109.3,471.8 C1106.8,474.0 1104.2,476.1 1101.7,478.1 C1099.1,480.1 1096.6,481.9 1094.0,483.6 C1091.5,485.3 1088.9,486.8 1086.4,488.2 C1083.9,489.6 1081.4,490.9 1079.0,492.0 C1076.5,493.1 1074.1,494.0 1071.8,494.9 C1069.4,495.7 1067.1,496.4 1064.9,496.9 C1062.6,497.5 1060.4,497.9 1058.3,498.2 C1056.2,498.5 1054.1,498.6 1052.2,498.7 C1050.2,498.7 1048.3,498.6 1046.4,498.5 C1044.6,498.3 1042.8,498.0 1041.1,497.6 C1039.4,497.2 1037.7,496.8 1036.2,496.2 C1034.6,495.7 1033.1,495.0 1031.6,494.3 C1030.2,493.6 1028.8,492.8 1027.5,491.9 C1026.2,491.0 1024.9,490.1 1023.7,489.1 C1022.5,488.1 1021.3,487.0 1020.3,485.8 C1019.2,484.7 1018.1,483.5 1017.1,482.2 C1016.2,481.0 1015.2,479.6 1014.4,478.2 C1013.5,476.8 1012.7,475.3 1011.9,473.8 C1011.2,472.2 1010.5,470.6 1009.9,468.9 C1009.2,467.3 1008.7,465.5 1008.2,463.7 C1007.7,461.8 1007.3,459.9 1006.9,457.9 C1006.6,455.9 1006.3,453.9 1006.2,451.7 C1006.0,449.6 1005.9,447.3 1005.9,445.0 C1005.9,442.7 1006.0,440.3 1006.2,437.8 C1006.4,435.4 1006.8,432.8 1007.2,430.2 C1007.6,427.6 1008.1,424.9 1008.8,422.2 C1009.4,419.5 1010.2,416.7 1011.1,413.8 C1012.0,411.0 1013.0,408.1 1014.1,405.2 C1015.2,402.3 1016.4,399.3 1017.8,396.3 C1019.1,393.4 1020.6,390.4 1022.2,387.4 C1023.8,384.5 1025.4,381.5 1027.2,378.6 C1029.0,375.7 1030.9,372.7 1032.9,369.9 C1034.8,367.0 1036.9,364.2 1039.0,361.5 C1041.2,358.8 1043.4,356.1 1045.7,353.5 C1047.9,350.9 1050.3,348.4 1052.6,346.0 C1055.0,343.6 1057.4,341.3 1059.9,339.1 C1062.3,337.0 1064.8,334.9 1067.2,333.0 C1069.7,331.0 1072.2,329.2 1074.6,327.6 C1077.1,325.9 1079.6,324.3 1082.0,322.9 C1084.5,321.5 1086.9,320.3 1089.3,319.1 C1091.7,318.0 1094.0,317.0 1096.3,316.1 C1098.6,315.3 1100.9,314.5 1103.1,313.9 C1105.3,313.3 1107.5,312.9 1109.6,312.5 C1111.7,312.1 1113.7,311.9 1115.7,311.8 C1117.7,311.6 1119.6,311.6 1121.4,311.7 C1123.3,311.8 1125.1,312.0 1126.8,312.3 C1128.5,312.5 1130.2,312.9 1131.8,313.4 C1133.4,313.8 1135.0,314.4 1136.5,315.0 C1138.0,315.6 1139.4,316.3 1140.8,317.0 C1142.2,317.8 1143.5,318.7 1144.8,319.6 C1146.1,320.5 1147.3,321.5 1148.5,322.5 C1149.7,323.6 1150.8,324.7 1151.9,325.9 C1152.9,327.1 1153.9,328.4 1154.9,329.7 C1155.9,331.0 1156.8,332.5 1157.6,334.0 C1158.4,335.5 1159.2,337.0 1159.9,338.7 C1160.6,340.3 1161.3,342.1 1161.8,343.9 C1162.4,345.7 1162.9,347.6 1163.3,349.6 C1163.7,351.6 1164.0,353.7 1164.3,355.9 C1164.5,358.1 1164.7,360.3 1164.7,362.7 C1164.7,365.0 1164.7,367.5 1164.5,370.0 C1164.3,372.5 1164.0,375.1 1163.6,377.8Z" fill="url(#gRing)"/><path d="M1163.6,377.8 C1163.2,380.5 1162.7,383.3 1162.0,386.1 C1161.4,388.9 1160.6,391.8 1159.7,394.7 C1158.8,397.6 1157.8,400.6 1156.7,403.7 C1155.5,406.7 1154.3,409.7 1152.9,412.8 C1151.5,415.8 1150.0,418.9 1148.4,422.0 C1146.7,425.1 1145.0,428.1 1143.1,431.2 C1141.3,434.2 1139.3,437.2 1137.3,440.2 C1135.2,443.1 1133.1,446.0 1130.9,448.8 C1128.7,451.7 1126.4,454.4 1124.0,457.1 C1121.7,459.7 1119.2,462.3 1116.8,464.8 C1114.3,467.2 1111.8,469.6 1109.3,471.8 C1106.8,474.0 1104.2,476.1 1101.7,478.1 C1099.1,480.1 1096.6,481.9 1094.0,483.6 C1091.5,485.3 1088.9,486.8 1086.4,488.2 C1083.9,489.6 1081.4,490.9 1079.0,492.0 C1076.5,493.1 1074.1,494.0 1071.8,494.9 C1069.4,495.7 1067.1,496.4 1064.9,496.9 C1062.6,497.5 1060.4,497.9 1058.3,498.2 C1056.2,498.5 1054.1,498.6 1052.2,498.7 C1050.2,498.7 1048.3,498.6 1046.4,498.5 C1044.6,498.3 1042.8,498.0 1041.1,497.6 C1039.4,497.2 1037.7,496.8 1036.2,496.2 C1034.6,495.7 1033.1,495.0 1031.6,494.3 C1030.2,493.6 1028.8,492.8 1027.5,491.9 C1026.2,491.0 1024.9,490.1 1023.7,489.1 C1022.5,488.1 1021.3,487.0 1020.3,485.8 C1019.2,484.7 1018.1,483.5 1017.1,482.2 C1016.2,481.0 1015.2,479.6 1014.4,478.2 C1013.5,476.8 1012.7,475.3 1011.9,473.8 C1011.2,472.2 1010.5,470.6 1009.9,468.9 C1009.2,467.3 1008.7,465.5 1008.2,463.7 C1007.7,461.8 1007.3,459.9 1006.9,457.9 C1006.6,455.9 1006.3,453.9 1006.2,451.7 C1006.0,449.6 1005.9,447.3 1005.9,445.0 C1005.9,442.7 1006.0,440.3 1006.2,437.8 C1006.4,435.4 1006.8,432.8 1007.2,430.2 C1007.6,427.6 1008.1,424.9 1008.8,422.2 C1009.4,419.5 1010.2,416.7 1011.1,413.8 C1012.0,411.0 1013.0,408.1 1014.1,405.2 C1015.2,402.3 1016.4,399.3 1017.8,396.3 C1019.1,393.4 1020.6,390.4 1022.2,387.4 C1023.8,384.5 1025.4,381.5 1027.2,378.6 C1029.0,375.7 1030.9,372.7 1032.9,369.9 C1034.8,367.0 1036.9,364.2 1039.0,361.5 C1041.2,358.8 1043.4,356.1 1045.7,353.5 C1047.9,350.9 1050.3,348.4 1052.6,346.0 C1055.0,343.6 1057.4,341.3 1059.9,339.1 C1062.3,337.0 1064.8,334.9 1067.2,333.0 C1069.7,331.0 1072.2,329.2 1074.6,327.6 C1077.1,325.9 1079.6,324.3 1082.0,322.9 C1084.5,321.5 1086.9,320.3 1089.3,319.1 C1091.7,318.0 1094.0,317.0 1096.3,316.1 C1098.6,315.3 1100.9,314.5 1103.1,313.9 C1105.3,313.3 1107.5,312.9 1109.6,312.5 C1111.7,312.1 1113.7,311.9 1115.7,311.8 C1117.7,311.6 1119.6,311.6 1121.4,311.7 C1123.3,311.8 1125.1,312.0 1126.8,312.3 C1128.5,312.5 1130.2,312.9 1131.8,313.4 C1133.4,313.8 1135.0,314.4 1136.5,315.0 C1138.0,315.6 1139.4,316.3 1140.8,317.0 C1142.2,317.8 1143.5,318.7 1144.8,319.6 C1146.1,320.5 1147.3,321.5 1148.5,322.5 C1149.7,323.6 1150.8,324.7 1151.9,325.9 C1152.9,327.1 1153.9,328.4 1154.9,329.7 C1155.9,331.0 1156.8,332.5 1157.6,334.0 C1158.4,335.5 1159.2,337.0 1159.9,338.7 C1160.6,340.3 1161.3,342.1 1161.8,343.9 C1162.4,345.7 1162.9,347.6 1163.3,349.6 C1163.7,351.6 1164.0,353.7 1164.3,355.9 C1164.5,358.1 1164.7,360.3 1164.7,362.7 C1164.7,365.0 1164.7,367.5 1164.5,370.0 C1164.3,372.5 1164.0,375.1 1163.6,377.8Z" fill="none" stroke="#0c0c0c" stroke-width="1.6"/><path d="M1175.2,391.3 C1174.7,393.8 1174.2,396.3 1173.6,398.9 C1173.0,401.4 1172.3,404.1 1171.4,406.7 C1170.6,409.4 1169.7,412.0 1168.6,414.7 C1167.6,417.4 1166.5,420.2 1165.2,422.9 C1164.0,425.7 1162.7,428.4 1161.2,431.2 C1159.8,433.9 1158.2,436.7 1156.6,439.4 C1154.9,442.2 1153.2,444.9 1151.3,447.6 C1149.5,450.3 1147.6,453.0 1145.6,455.6 C1143.6,458.2 1141.5,460.7 1139.3,463.2 C1137.2,465.7 1135.0,468.1 1132.7,470.5 C1130.4,472.8 1128.1,475.1 1125.7,477.2 C1123.3,479.4 1120.9,481.5 1118.4,483.4 C1116.0,485.4 1113.5,487.3 1111.0,489.0 C1108.5,490.7 1106.0,492.3 1103.5,493.8 C1101.0,495.3 1098.5,496.7 1096.0,497.9 C1093.5,499.1 1091.1,500.2 1088.6,501.2 C1086.2,502.1 1083.8,502.9 1081.4,503.6 C1079.1,504.3 1076.8,504.9 1074.5,505.3 C1072.2,505.7 1070.0,506.0 1067.9,506.2 C1065.7,506.4 1063.6,506.4 1061.6,506.3 C1059.6,506.3 1057.7,506.0 1055.8,505.7 C1053.9,505.4 1052.1,505.0 1050.4,504.5 C1048.6,504.0 1047.0,503.3 1045.4,502.6 C1043.8,501.9 1042.3,501.0 1040.8,500.1 C1039.4,499.2 1038.0,498.2 1036.8,497.1 C1035.5,496.1 1034.3,494.9 1033.1,493.7 C1032.0,492.4 1030.9,491.1 1029.9,489.7 C1028.9,488.3 1028.0,486.9 1027.2,485.4 C1026.3,483.8 1025.5,482.3 1024.8,480.6 C1024.1,479.0 1023.5,477.2 1022.9,475.5 C1022.4,473.7 1021.9,471.8 1021.5,469.9 C1021.1,468.0 1020.7,466.1 1020.4,464.1 C1020.2,462.0 1020.0,459.9 1019.9,457.8 C1019.8,455.7 1019.8,453.5 1019.8,451.2 C1019.9,448.9 1020.1,446.6 1020.3,444.2 C1020.6,441.9 1020.9,439.4 1021.3,437.0 C1021.8,434.5 1022.3,432.0 1022.9,429.4 C1023.5,426.8 1024.3,424.2 1025.1,421.6 C1025.9,418.9 1026.9,416.2 1027.9,413.5 C1028.9,410.8 1030.1,408.1 1031.3,405.3 C1032.6,402.6 1033.9,399.8 1035.4,397.1 C1036.8,394.3 1038.4,391.5 1040.0,388.8 C1041.7,386.1 1043.4,383.4 1045.2,380.7 C1047.1,378.0 1049.0,375.3 1051.0,372.7 C1053.0,370.1 1055.1,367.6 1057.3,365.1 C1059.4,362.6 1061.6,360.2 1063.9,357.8 C1066.2,355.5 1068.5,353.2 1070.9,351.1 C1073.3,348.9 1075.7,346.9 1078.2,344.9 C1080.6,343.0 1083.1,341.1 1085.6,339.4 C1088.1,337.7 1090.6,336.1 1093.1,334.6 C1095.6,333.1 1098.1,331.7 1100.6,330.5 C1103.0,329.3 1105.5,328.2 1107.9,327.3 C1110.3,326.3 1112.7,325.5 1115.1,324.8 C1117.4,324.1 1119.8,323.6 1122.0,323.1 C1124.3,322.7 1126.5,322.4 1128.6,322.3 C1130.8,322.1 1132.8,322.1 1134.9,322.1 C1136.9,322.2 1138.8,322.4 1140.7,322.7 C1142.6,323.0 1144.4,323.5 1146.1,324.0 C1147.8,324.5 1149.5,325.2 1151.1,325.9 C1152.6,326.6 1154.2,327.4 1155.6,328.3 C1157.0,329.2 1158.4,330.2 1159.7,331.3 C1160.9,332.4 1162.1,333.6 1163.3,334.8 C1164.4,336.0 1165.5,337.3 1166.5,338.7 C1167.5,340.1 1168.4,341.5 1169.2,343.0 C1170.1,344.6 1170.9,346.1 1171.6,347.8 C1172.3,349.4 1172.9,351.1 1173.5,352.9 C1174.0,354.7 1174.5,356.5 1175.0,358.4 C1175.4,360.3 1175.7,362.3 1176.0,364.3 C1176.2,366.3 1176.4,368.4 1176.5,370.5 C1176.6,372.7 1176.7,374.9 1176.6,377.1 C1176.5,379.4 1176.4,381.7 1176.2,384.1 C1175.9,386.4 1175.6,388.8 1175.2,391.3Z" fill="url(#gAnn)"/><g clip-path="url(#cR2)"><path d="M1162.6,392.9 C1162.2,395.4 1161.6,397.9 1160.9,400.5 C1160.3,403.1 1159.5,405.7 1158.6,408.3 C1157.7,411.0 1156.7,413.7 1155.6,416.4 C1154.5,419.1 1153.3,421.9 1152.0,424.6 C1150.7,427.4 1149.3,430.1 1147.8,432.9 C1146.4,435.6 1144.8,438.3 1143.1,441.0 C1141.4,443.7 1139.7,446.3 1137.9,448.9 C1136.1,451.5 1134.2,454.1 1132.3,456.5 C1130.3,459.0 1128.3,461.4 1126.3,463.7 C1124.3,466.0 1122.2,468.2 1120.1,470.4 C1118.0,472.5 1115.9,474.5 1113.7,476.4 C1111.6,478.3 1109.4,480.1 1107.3,481.8 C1105.2,483.5 1103.0,485.1 1100.9,486.5 C1098.8,488.0 1096.7,489.3 1094.6,490.5 C1092.5,491.7 1090.5,492.8 1088.4,493.8 C1086.4,494.8 1084.4,495.6 1082.5,496.3 C1080.6,497.1 1078.7,497.7 1076.8,498.2 C1075.0,498.7 1073.2,499.1 1071.4,499.4 C1069.7,499.7 1068.0,499.9 1066.4,500.0 C1064.7,500.1 1063.1,500.1 1061.6,500.0 C1060.1,500.0 1058.6,499.8 1057.1,499.6 C1055.7,499.3 1054.3,499.0 1053.0,498.6 C1051.7,498.2 1050.4,497.8 1049.1,497.2 C1047.9,496.7 1046.7,496.1 1045.6,495.4 C1044.4,494.8 1043.3,494.0 1042.3,493.2 C1041.2,492.5 1040.2,491.6 1039.3,490.7 C1038.3,489.8 1037.4,488.8 1036.5,487.7 C1035.7,486.7 1034.9,485.6 1034.1,484.4 C1033.3,483.2 1032.6,481.9 1032.0,480.6 C1031.3,479.3 1030.7,477.9 1030.2,476.4 C1029.6,474.9 1029.1,473.4 1028.7,471.7 C1028.3,470.1 1028.0,468.4 1027.7,466.6 C1027.4,464.8 1027.2,463.0 1027.1,461.0 C1027.0,459.1 1027.0,457.1 1027.0,455.0 C1027.1,452.9 1027.3,450.7 1027.5,448.4 C1027.8,446.2 1028.1,443.9 1028.5,441.5 C1029.0,439.1 1029.5,436.7 1030.2,434.2 C1030.8,431.7 1031.6,429.2 1032.4,426.6 C1033.2,424.0 1034.2,421.4 1035.2,418.8 C1036.3,416.2 1037.4,413.5 1038.7,410.8 C1039.9,408.2 1041.3,405.5 1042.7,402.8 C1044.1,400.2 1045.7,397.5 1047.3,394.9 C1048.8,392.3 1050.5,389.7 1052.3,387.2 C1054.0,384.7 1055.8,382.2 1057.7,379.8 C1059.6,377.3 1061.5,375.0 1063.5,372.7 C1065.4,370.4 1067.4,368.2 1069.5,366.1 C1071.5,364.0 1073.6,362.0 1075.6,360.1 C1077.7,358.2 1079.8,356.4 1081.9,354.7 C1084.0,353.0 1086.1,351.4 1088.2,349.9 C1090.3,348.4 1092.3,347.1 1094.4,345.8 C1096.4,344.6 1098.5,343.5 1100.4,342.4 C1102.4,341.4 1104.4,340.5 1106.3,339.7 C1108.3,338.9 1110.2,338.2 1112.0,337.7 C1113.8,337.1 1115.7,336.6 1117.4,336.2 C1119.2,335.9 1120.9,335.6 1122.6,335.4 C1124.2,335.2 1125.8,335.1 1127.4,335.1 C1129.0,335.1 1130.5,335.2 1132.0,335.3 C1133.5,335.5 1134.9,335.7 1136.3,336.0 C1137.7,336.3 1139.0,336.7 1140.3,337.2 C1141.6,337.6 1142.9,338.1 1144.1,338.7 C1145.3,339.3 1146.4,340.0 1147.6,340.7 C1148.7,341.5 1149.7,342.3 1150.8,343.1 C1151.8,344.0 1152.8,345.0 1153.7,346.0 C1154.6,347.0 1155.5,348.1 1156.4,349.2 C1157.2,350.4 1158.0,351.7 1158.7,353.0 C1159.4,354.3 1160.1,355.7 1160.6,357.2 C1161.2,358.7 1161.8,360.2 1162.2,361.9 C1162.7,363.5 1163.1,365.3 1163.3,367.1 C1163.6,368.9 1163.9,370.8 1164.0,372.8 C1164.1,374.8 1164.2,376.9 1164.1,379.1 C1164.1,381.2 1163.9,383.5 1163.7,385.8 C1163.4,388.1 1163.1,390.5 1162.6,392.9Z" fill="#c4de04"/><path d="M1156.2,399.2 C1155.7,401.5 1155.2,403.9 1154.6,406.4 C1153.9,408.8 1153.2,411.3 1152.4,413.8 C1151.5,416.3 1150.6,418.9 1149.5,421.5 C1148.5,424.1 1147.4,426.7 1146.1,429.3 C1144.9,431.9 1143.6,434.5 1142.2,437.1 C1140.7,439.7 1139.2,442.3 1137.7,444.8 C1136.1,447.3 1134.4,449.9 1132.7,452.3 C1131.0,454.8 1129.2,457.2 1127.4,459.5 C1125.5,461.9 1123.6,464.2 1121.7,466.3 C1119.8,468.5 1117.8,470.7 1115.8,472.7 C1113.8,474.7 1111.8,476.6 1109.8,478.4 C1107.8,480.2 1105.7,482.0 1103.7,483.6 C1101.7,485.2 1099.6,486.7 1097.6,488.0 C1095.6,489.4 1093.6,490.7 1091.6,491.8 C1089.6,493.0 1087.7,494.0 1085.8,494.9 C1083.9,495.8 1082.0,496.6 1080.1,497.3 C1078.3,498.0 1076.5,498.6 1074.8,499.1 C1073.0,499.6 1071.3,500.0 1069.6,500.2 C1068.0,500.5 1066.4,500.7 1064.8,500.8 C1063.3,500.9 1061.8,500.9 1060.3,500.8 C1058.8,500.8 1057.4,500.6 1056.1,500.4 C1054.7,500.2 1053.4,499.9 1052.1,499.5 C1050.9,499.1 1049.7,498.7 1048.5,498.2 C1047.3,497.7 1046.2,497.1 1045.1,496.5 C1044.0,495.8 1043.0,495.1 1042.0,494.4 C1041.0,493.6 1040.0,492.8 1039.1,492.0 C1038.2,491.1 1037.3,490.1 1036.5,489.2 C1035.7,488.2 1034.9,487.1 1034.2,486.0 C1033.5,484.8 1032.8,483.7 1032.2,482.4 C1031.5,481.1 1031.0,479.8 1030.4,478.4 C1029.9,477.0 1029.5,475.5 1029.1,474.0 C1028.7,472.4 1028.4,470.8 1028.1,469.1 C1027.9,467.4 1027.7,465.7 1027.6,463.8 C1027.5,462.0 1027.4,460.0 1027.5,458.1 C1027.6,456.1 1027.7,454.0 1027.9,451.9 C1028.2,449.7 1028.5,447.5 1028.9,445.3 C1029.3,443.0 1029.8,440.7 1030.5,438.4 C1031.1,436.0 1031.8,433.6 1032.6,431.2 C1033.4,428.7 1034.3,426.2 1035.3,423.7 C1036.3,421.2 1037.4,418.7 1038.6,416.2 C1039.7,413.7 1041.0,411.1 1042.4,408.6 C1043.7,406.1 1045.2,403.6 1046.7,401.1 C1048.2,398.6 1049.8,396.1 1051.4,393.7 C1053.1,391.3 1054.8,389.0 1056.6,386.7 C1058.4,384.4 1060.2,382.1 1062.1,380.0 C1063.9,377.8 1065.8,375.7 1067.8,373.7 C1069.7,371.7 1071.7,369.8 1073.6,368.0 C1075.6,366.2 1077.6,364.5 1079.6,362.9 C1081.6,361.3 1083.5,359.8 1085.5,358.4 C1087.5,357.0 1089.5,355.7 1091.4,354.5 C1093.3,353.3 1095.3,352.2 1097.2,351.3 C1099.1,350.3 1100.9,349.4 1102.8,348.7 C1104.6,347.9 1106.4,347.3 1108.1,346.7 C1109.9,346.2 1111.6,345.7 1113.3,345.4 C1114.9,345.0 1116.6,344.7 1118.2,344.6 C1119.7,344.4 1121.3,344.3 1122.8,344.3 C1124.3,344.3 1125.7,344.4 1127.1,344.5 C1128.5,344.6 1129.9,344.9 1131.2,345.2 C1132.5,345.5 1133.8,345.8 1135.0,346.3 C1136.2,346.7 1137.4,347.2 1138.6,347.7 C1139.7,348.3 1140.8,348.9 1141.9,349.6 C1142.9,350.3 1144.0,351.1 1144.9,351.9 C1145.9,352.8 1146.8,353.6 1147.7,354.6 C1148.6,355.6 1149.4,356.6 1150.2,357.7 C1151.0,358.8 1151.8,360.0 1152.4,361.3 C1153.1,362.5 1153.7,363.8 1154.3,365.3 C1154.9,366.7 1155.4,368.2 1155.8,369.7 C1156.2,371.3 1156.6,372.9 1156.9,374.7 C1157.2,376.4 1157.4,378.2 1157.5,380.1 C1157.6,382.0 1157.7,384.0 1157.6,386.0 C1157.6,388.1 1157.4,390.2 1157.2,392.4 C1156.9,394.6 1156.6,396.9 1156.2,399.2Z" fill="#7ade00"/></g><path d="M1175.2,391.3 C1174.7,393.8 1174.2,396.3 1173.6,398.9 C1173.0,401.4 1172.3,404.1 1171.4,406.7 C1170.6,409.4 1169.7,412.0 1168.6,414.7 C1167.6,417.4 1166.5,420.2 1165.2,422.9 C1164.0,425.7 1162.7,428.4 1161.2,431.2 C1159.8,433.9 1158.2,436.7 1156.6,439.4 C1154.9,442.2 1153.2,444.9 1151.3,447.6 C1149.5,450.3 1147.6,453.0 1145.6,455.6 C1143.6,458.2 1141.5,460.7 1139.3,463.2 C1137.2,465.7 1135.0,468.1 1132.7,470.5 C1130.4,472.8 1128.1,475.1 1125.7,477.2 C1123.3,479.4 1120.9,481.5 1118.4,483.4 C1116.0,485.4 1113.5,487.3 1111.0,489.0 C1108.5,490.7 1106.0,492.3 1103.5,493.8 C1101.0,495.3 1098.5,496.7 1096.0,497.9 C1093.5,499.1 1091.1,500.2 1088.6,501.2 C1086.2,502.1 1083.8,502.9 1081.4,503.6 C1079.1,504.3 1076.8,504.9 1074.5,505.3 C1072.2,505.7 1070.0,506.0 1067.9,506.2 C1065.7,506.4 1063.6,506.4 1061.6,506.3 C1059.6,506.3 1057.7,506.0 1055.8,505.7 C1053.9,505.4 1052.1,505.0 1050.4,504.5 C1048.6,504.0 1047.0,503.3 1045.4,502.6 C1043.8,501.9 1042.3,501.0 1040.8,500.1 C1039.4,499.2 1038.0,498.2 1036.8,497.1 C1035.5,496.1 1034.3,494.9 1033.1,493.7 C1032.0,492.4 1030.9,491.1 1029.9,489.7 C1028.9,488.3 1028.0,486.9 1027.2,485.4 C1026.3,483.8 1025.5,482.3 1024.8,480.6 C1024.1,479.0 1023.5,477.2 1022.9,475.5 C1022.4,473.7 1021.9,471.8 1021.5,469.9 C1021.1,468.0 1020.7,466.1 1020.4,464.1 C1020.2,462.0 1020.0,459.9 1019.9,457.8 C1019.8,455.7 1019.8,453.5 1019.8,451.2 C1019.9,448.9 1020.1,446.6 1020.3,444.2 C1020.6,441.9 1020.9,439.4 1021.3,437.0 C1021.8,434.5 1022.3,432.0 1022.9,429.4 C1023.5,426.8 1024.3,424.2 1025.1,421.6 C1025.9,418.9 1026.9,416.2 1027.9,413.5 C1028.9,410.8 1030.1,408.1 1031.3,405.3 C1032.6,402.6 1033.9,399.8 1035.4,397.1 C1036.8,394.3 1038.4,391.5 1040.0,388.8 C1041.7,386.1 1043.4,383.4 1045.2,380.7 C1047.1,378.0 1049.0,375.3 1051.0,372.7 C1053.0,370.1 1055.1,367.6 1057.3,365.1 C1059.4,362.6 1061.6,360.2 1063.9,357.8 C1066.2,355.5 1068.5,353.2 1070.9,351.1 C1073.3,348.9 1075.7,346.9 1078.2,344.9 C1080.6,343.0 1083.1,341.1 1085.6,339.4 C1088.1,337.7 1090.6,336.1 1093.1,334.6 C1095.6,333.1 1098.1,331.7 1100.6,330.5 C1103.0,329.3 1105.5,328.2 1107.9,327.3 C1110.3,326.3 1112.7,325.5 1115.1,324.8 C1117.4,324.1 1119.8,323.6 1122.0,323.1 C1124.3,322.7 1126.5,322.4 1128.6,322.3 C1130.8,322.1 1132.8,322.1 1134.9,322.1 C1136.9,322.2 1138.8,322.4 1140.7,322.7 C1142.6,323.0 1144.4,323.5 1146.1,324.0 C1147.8,324.5 1149.5,325.2 1151.1,325.9 C1152.6,326.6 1154.2,327.4 1155.6,328.3 C1157.0,329.2 1158.4,330.2 1159.7,331.3 C1160.9,332.4 1162.1,333.6 1163.3,334.8 C1164.4,336.0 1165.5,337.3 1166.5,338.7 C1167.5,340.1 1168.4,341.5 1169.2,343.0 C1170.1,344.6 1170.9,346.1 1171.6,347.8 C1172.3,349.4 1172.9,351.1 1173.5,352.9 C1174.0,354.7 1174.5,356.5 1175.0,358.4 C1175.4,360.3 1175.7,362.3 1176.0,364.3 C1176.2,366.3 1176.4,368.4 1176.5,370.5 C1176.6,372.7 1176.7,374.9 1176.6,377.1 C1176.5,379.4 1176.4,381.7 1176.2,384.1 C1175.9,386.4 1175.6,388.8 1175.2,391.3Z" fill="none" stroke="#0c0c0c" stroke-width="1.6"/><path d="M1154.3,393.7 C1153.9,395.8 1153.4,397.9 1152.9,400.1 C1152.3,402.3 1151.6,404.5 1150.9,406.7 C1150.1,409.0 1149.3,411.3 1148.4,413.6 C1147.4,415.9 1146.4,418.2 1145.3,420.6 C1144.2,422.9 1143.0,425.2 1141.8,427.5 C1140.5,429.8 1139.2,432.1 1137.8,434.4 C1136.4,436.7 1134.9,438.9 1133.3,441.1 C1131.8,443.3 1130.2,445.5 1128.6,447.6 C1126.9,449.7 1125.2,451.7 1123.5,453.7 C1121.8,455.6 1120.0,457.5 1118.3,459.3 C1116.5,461.1 1114.7,462.8 1112.9,464.4 C1111.1,466.1 1109.2,467.6 1107.4,469.0 C1105.6,470.4 1103.8,471.8 1102.0,473.0 C1100.2,474.2 1098.4,475.4 1096.7,476.4 C1094.9,477.4 1093.1,478.3 1091.4,479.2 C1089.7,480.0 1088.1,480.7 1086.4,481.3 C1084.8,481.9 1083.2,482.5 1081.6,482.9 C1080.0,483.3 1078.5,483.7 1077.0,483.9 C1075.6,484.2 1074.1,484.3 1072.7,484.4 C1071.3,484.5 1070.0,484.5 1068.7,484.4 C1067.4,484.4 1066.1,484.2 1064.9,484.0 C1063.7,483.8 1062.5,483.6 1061.4,483.2 C1060.3,482.9 1059.2,482.5 1058.1,482.1 C1057.1,481.6 1056.1,481.1 1055.1,480.5 C1054.2,480.0 1053.2,479.4 1052.3,478.7 C1051.4,478.0 1050.6,477.3 1049.8,476.5 C1049.0,475.7 1048.2,474.9 1047.5,474.0 C1046.7,473.1 1046.0,472.2 1045.4,471.2 C1044.7,470.2 1044.1,469.1 1043.6,468.0 C1043.0,466.9 1042.5,465.7 1042.0,464.4 C1041.6,463.2 1041.2,461.9 1040.8,460.5 C1040.5,459.1 1040.2,457.6 1040.0,456.1 C1039.7,454.6 1039.6,453.0 1039.5,451.4 C1039.4,449.7 1039.4,448.0 1039.4,446.2 C1039.5,444.5 1039.6,442.6 1039.8,440.7 C1040.0,438.8 1040.3,436.9 1040.7,434.9 C1041.1,432.8 1041.5,430.8 1042.1,428.7 C1042.6,426.6 1043.2,424.4 1043.9,422.2 C1044.7,420.0 1045.5,417.8 1046.4,415.6 C1047.3,413.4 1048.2,411.1 1049.3,408.9 C1050.3,406.6 1051.5,404.3 1052.7,402.1 C1053.9,399.8 1055.2,397.6 1056.5,395.4 C1057.9,393.2 1059.3,391.0 1060.8,388.8 C1062.3,386.7 1063.8,384.6 1065.4,382.5 C1067.0,380.5 1068.6,378.5 1070.3,376.5 C1071.9,374.6 1073.6,372.7 1075.4,371.0 C1077.1,369.2 1078.8,367.5 1080.6,365.9 C1082.4,364.2 1084.1,362.7 1085.9,361.3 C1087.7,359.8 1089.5,358.5 1091.2,357.2 C1093.0,356.0 1094.7,354.8 1096.5,353.8 C1098.2,352.7 1099.9,351.8 1101.6,350.9 C1103.3,350.0 1105.0,349.3 1106.6,348.6 C1108.2,347.9 1109.8,347.3 1111.4,346.8 C1113.0,346.4 1114.5,346.0 1116.0,345.6 C1117.5,345.3 1118.9,345.1 1120.4,344.9 C1121.8,344.8 1123.1,344.7 1124.5,344.7 C1125.8,344.7 1127.1,344.7 1128.3,344.9 C1129.6,345.0 1130.8,345.2 1132.0,345.5 C1133.2,345.7 1134.3,346.0 1135.4,346.4 C1136.5,346.8 1137.6,347.3 1138.6,347.8 C1139.6,348.3 1140.6,348.8 1141.5,349.4 C1142.5,350.1 1143.4,350.7 1144.3,351.5 C1145.1,352.2 1146.0,353.0 1146.8,353.9 C1147.5,354.8 1148.3,355.7 1149.0,356.7 C1149.7,357.7 1150.4,358.7 1151.0,359.8 C1151.6,360.9 1152.1,362.1 1152.6,363.4 C1153.1,364.7 1153.6,366.0 1154.0,367.4 C1154.3,368.8 1154.7,370.3 1154.9,371.8 C1155.2,373.3 1155.4,375.0 1155.5,376.7 C1155.6,378.3 1155.6,380.1 1155.6,381.9 C1155.5,383.8 1155.4,385.7 1155.2,387.6 C1155.0,389.6 1154.7,391.6 1154.3,393.7Z" fill="url(#gCyl)"/><path d="M1154.3,393.7 C1153.9,395.8 1153.4,397.9 1152.9,400.1 C1152.3,402.3 1151.6,404.5 1150.9,406.7 C1150.1,409.0 1149.3,411.3 1148.4,413.6 C1147.4,415.9 1146.4,418.2 1145.3,420.6 C1144.2,422.9 1143.0,425.2 1141.8,427.5 C1140.5,429.8 1139.2,432.1 1137.8,434.4 C1136.4,436.7 1134.9,438.9 1133.3,441.1 C1131.8,443.3 1130.2,445.5 1128.6,447.6 C1126.9,449.7 1125.2,451.7 1123.5,453.7 C1121.8,455.6 1120.0,457.5 1118.3,459.3 C1116.5,461.1 1114.7,462.8 1112.9,464.4 C1111.1,466.1 1109.2,467.6 1107.4,469.0 C1105.6,470.4 1103.8,471.8 1102.0,473.0 C1100.2,474.2 1098.4,475.4 1096.7,476.4 C1094.9,477.4 1093.1,478.3 1091.4,479.2 C1089.7,480.0 1088.1,480.7 1086.4,481.3 C1084.8,481.9 1083.2,482.5 1081.6,482.9 C1080.0,483.3 1078.5,483.7 1077.0,483.9 C1075.6,484.2 1074.1,484.3 1072.7,484.4 C1071.3,484.5 1070.0,484.5 1068.7,484.4 C1067.4,484.4 1066.1,484.2 1064.9,484.0 C1063.7,483.8 1062.5,483.6 1061.4,483.2 C1060.3,482.9 1059.2,482.5 1058.1,482.1 C1057.1,481.6 1056.1,481.1 1055.1,480.5 C1054.2,480.0 1053.2,479.4 1052.3,478.7 C1051.4,478.0 1050.6,477.3 1049.8,476.5 C1049.0,475.7 1048.2,474.9 1047.5,474.0 C1046.7,473.1 1046.0,472.2 1045.4,471.2 C1044.7,470.2 1044.1,469.1 1043.6,468.0 C1043.0,466.9 1042.5,465.7 1042.0,464.4 C1041.6,463.2 1041.2,461.9 1040.8,460.5 C1040.5,459.1 1040.2,457.6 1040.0,456.1 C1039.7,454.6 1039.6,453.0 1039.5,451.4 C1039.4,449.7 1039.4,448.0 1039.4,446.2 C1039.5,444.5 1039.6,442.6 1039.8,440.7 C1040.0,438.8 1040.3,436.9 1040.7,434.9 C1041.1,432.8 1041.5,430.8 1042.1,428.7 C1042.6,426.6 1043.2,424.4 1043.9,422.2 C1044.7,420.0 1045.5,417.8 1046.4,415.6 C1047.3,413.4 1048.2,411.1 1049.3,408.9 C1050.3,406.6 1051.5,404.3 1052.7,402.1 C1053.9,399.8 1055.2,397.6 1056.5,395.4 C1057.9,393.2 1059.3,391.0 1060.8,388.8 C1062.3,386.7 1063.8,384.6 1065.4,382.5 C1067.0,380.5 1068.6,378.5 1070.3,376.5 C1071.9,374.6 1073.6,372.7 1075.4,371.0 C1077.1,369.2 1078.8,367.5 1080.6,365.9 C1082.4,364.2 1084.1,362.7 1085.9,361.3 C1087.7,359.8 1089.5,358.5 1091.2,357.2 C1093.0,356.0 1094.7,354.8 1096.5,353.8 C1098.2,352.7 1099.9,351.8 1101.6,350.9 C1103.3,350.0 1105.0,349.3 1106.6,348.6 C1108.2,347.9 1109.8,347.3 1111.4,346.8 C1113.0,346.4 1114.5,346.0 1116.0,345.6 C1117.5,345.3 1118.9,345.1 1120.4,344.9 C1121.8,344.8 1123.1,344.7 1124.5,344.7 C1125.8,344.7 1127.1,344.7 1128.3,344.9 C1129.6,345.0 1130.8,345.2 1132.0,345.5 C1133.2,345.7 1134.3,346.0 1135.4,346.4 C1136.5,346.8 1137.6,347.3 1138.6,347.8 C1139.6,348.3 1140.6,348.8 1141.5,349.4 C1142.5,350.1 1143.4,350.7 1144.3,351.5 C1145.1,352.2 1146.0,353.0 1146.8,353.9 C1147.5,354.8 1148.3,355.7 1149.0,356.7 C1149.7,357.7 1150.4,358.7 1151.0,359.8 C1151.6,360.9 1152.1,362.1 1152.6,363.4 C1153.1,364.7 1153.6,366.0 1154.0,367.4 C1154.3,368.8 1154.7,370.3 1154.9,371.8 C1155.2,373.3 1155.4,375.0 1155.5,376.7 C1155.6,378.3 1155.6,380.1 1155.6,381.9 C1155.5,383.8 1155.4,385.7 1155.2,387.6 C1155.0,389.6 1154.7,391.6 1154.3,393.7Z" fill="none" stroke="#0c0c0c" stroke-width="1.6"/><path d="M1057.5,480.7 L1145.6,352.0 L1426.0,553.7 L1428.7,556.0 L1431.2,558.5 L1433.5,561.3 L1435.6,564.4 L1437.4,567.7 L1438.9,571.3 L1440.2,575.1 L1441.2,579.1 L1441.9,583.3 L1442.4,587.6 L1442.6,592.1 L1442.5,596.7 L1442.1,601.5 L1441.4,606.3 L1440.5,611.1 L1439.3,616.0 L1437.8,620.8 L1436.1,625.7 L1434.1,630.5 L1431.9,635.3 L1429.5,639.9 L1426.8,644.5 L1424.0,648.9 L1420.9,653.2 L1417.7,657.2 L1414.3,661.1 L1410.8,664.8 L1407.1,668.2 L1403.3,671.4 L1399.5,674.4 L1395.6,677.0 L1391.6,679.4 L1387.6,681.4 L1383.6,683.2 L1379.6,684.6 L1375.6,685.6 L1371.6,686.4 L1367.8,686.8 L1364.0,686.9 L1360.3,686.6 L1356.7,686.0 L1353.3,685.1 L1350.0,683.8 L1346.9,682.2 L1344.0,680.3Z" fill="url(#gCyl)"/><path d="M1346.9,682.2 C1346.0,681.5 1343.2,679.8 1341.6,678.3 C1340.0,676.9 1338.4,675.2 1337.0,673.4 C1335.6,671.6 1334.4,669.7 1333.3,667.6 C1332.2,665.5 1331.2,663.2 1330.4,660.8 C1329.6,658.5 1329.0,656.0 1328.5,653.4 C1328.0,650.8 1327.7,648.0 1327.5,645.3 C1327.4,642.5 1327.4,639.6 1327.6,636.7 C1327.7,633.8 1328.1,630.8 1328.6,627.7 C1329.1,624.7 1329.7,621.7 1330.5,618.6 C1331.4,615.6 1332.3,612.5 1333.4,609.5 C1334.6,606.5 1335.8,603.5 1337.2,600.5 C1338.6,597.5 1340.2,594.6 1341.8,591.8 C1343.5,588.9 1345.3,586.1 1347.2,583.5 C1349.1,580.8 1351.1,578.2 1353.2,575.8 C1355.2,573.3 1357.4,570.9 1359.7,568.7 C1361.9,566.5 1364.3,564.5 1366.7,562.6 C1369.0,560.7 1371.5,558.9 1373.9,557.3 C1376.4,555.7 1378.9,554.3 1381.4,553.1 C1383.9,551.8 1386.4,550.8 1388.9,549.9 C1391.4,549.1 1393.9,548.4 1396.4,547.9 C1398.9,547.5 1401.3,547.2 1403.7,547.1 C1406.0,547.1 1408.4,547.2 1410.6,547.5 C1412.9,547.8 1415.1,548.4 1417.1,549.1 C1419.2,549.8 1421.2,550.7 1423.1,551.8 C1425.0,552.9 1426.8,554.2 1428.4,555.7 C1430.0,557.1 1431.6,558.8 1433.0,560.6 C1434.4,562.4 1435.6,564.3 1436.7,566.4 C1437.8,568.5 1438.8,570.8 1439.6,573.2 C1440.4,575.5 1441.0,578.0 1441.5,580.6 C1442.0,583.2 1442.3,586.0 1442.5,588.7 C1442.6,591.5 1442.6,594.4 1442.4,597.3 C1442.3,600.2 1441.9,603.2 1441.4,606.3 C1440.9,609.3 1440.3,612.3 1439.5,615.4 C1438.6,618.4 1437.7,621.5 1436.6,624.5 C1435.4,627.5 1434.2,630.5 1432.8,633.5 C1431.4,636.5 1429.8,639.4 1428.2,642.2 C1426.5,645.1 1424.7,647.9 1422.8,650.5 C1420.9,653.2 1418.9,655.8 1416.8,658.2 C1414.8,660.7 1412.6,663.1 1410.3,665.3 C1408.1,667.5 1405.7,669.5 1403.3,671.4 C1401.0,673.3 1398.5,675.1 1396.1,676.7 C1393.6,678.3 1391.1,679.7 1388.6,680.9 C1386.1,682.2 1383.6,683.2 1381.1,684.1 C1378.6,684.9 1376.1,685.6 1373.6,686.1 C1371.1,686.5 1368.7,686.8 1366.3,686.9 C1364.0,686.9 1361.6,686.8 1359.4,686.5 C1357.1,686.2 1354.9,685.6 1352.9,684.9 C1350.8,684.2 1347.9,682.6 1346.9,682.2 C1345.9,681.7 1347.8,682.8 1346.9,682.2Z" fill="#73d800"/><path d="M1346.9,682.2 C1346.0,681.5 1343.2,679.8 1341.6,678.3 C1340.0,676.9 1338.4,675.2 1337.0,673.4 C1335.6,671.6 1334.4,669.7 1333.3,667.6 C1332.2,665.5 1331.2,663.2 1330.4,660.8 C1329.6,658.5 1329.0,656.0 1328.5,653.4 C1328.0,650.8 1327.7,648.0 1327.5,645.3 C1327.4,642.5 1327.4,639.6 1327.6,636.7 C1327.7,633.8 1328.1,630.8 1328.6,627.7 C1329.1,624.7 1329.7,621.7 1330.5,618.6 C1331.4,615.6 1332.3,612.5 1333.4,609.5 C1334.6,606.5 1335.8,603.5 1337.2,600.5 C1338.6,597.5 1340.2,594.6 1341.8,591.8 C1343.5,588.9 1345.3,586.1 1347.2,583.5 C1349.1,580.8 1351.1,578.2 1353.2,575.8 C1355.2,573.3 1357.4,570.9 1359.7,568.7 C1361.9,566.5 1364.3,564.5 1366.7,562.6 C1369.0,560.7 1371.5,558.9 1373.9,557.3 C1376.4,555.7 1378.9,554.3 1381.4,553.1 C1383.9,551.8 1386.4,550.8 1388.9,549.9 C1391.4,549.1 1393.9,548.4 1396.4,547.9 C1398.9,547.5 1401.3,547.2 1403.7,547.1 C1406.0,547.1 1408.4,547.2 1410.6,547.5 C1412.9,547.8 1415.1,548.4 1417.1,549.1 C1419.2,549.8 1422.1,551.4 1423.1,551.8" fill="none" stroke="#0c0c0c" stroke-width="1.6"/></svg>
<div class="r" style="left:1388.5px;top:197.5px;width:250.5px;height:288.5px;background:#fff;box-shadow:0 0 0 1px #e4e4e4, 0 2px 6px rgba(0,0,0,0.10);"></div>
<div class="r" style="left:1388.5px;top:303.5px;width:250.5px;height:4px;background:#ececec;"></div>
<div class="r" style="left:1388.5px;top:307.5px;width:250.5px;height:34px;background:#f5f5f5;border-bottom:1px solid #e9e9e9;box-sizing:border-box;"></div>
<div class="r" style="left:1388.5px;top:447.5px;width:250.5px;height:4px;background:#ececec;"></div>
<div class="t" style="left:1404.0px;top:205.8px;font-size:16px;line-height:20.00px;color:#444;letter-spacing:-0.192px;">Select all</div>
<div class="t" style="left:1404.0px;top:240.8px;font-size:16px;line-height:20.00px;color:#444;letter-spacing:0.149px;">Invert selection</div>
<div class="t" style="left:1404.0px;top:275.8px;font-size:16px;line-height:20.00px;color:#444;letter-spacing:-0.022px;">Clear selection</div>
<div class="t" style="left:1404.0px;top:314.8px;font-size:16px;line-height:20.00px;color:#444;letter-spacing:0.036px;">Hide selection</div>
<div class="t" style="left:1404.0px;top:349.8px;font-size:16px;line-height:20.00px;color:#444;letter-spacing:0.016px;">Isolate selection</div>
<div class="t" style="left:1404.0px;top:384.8px;font-size:16px;line-height:20.00px;color:#444;letter-spacing:0.348px;">Invert visibility</div>
<div class="t" style="left:1404.0px;top:419.8px;font-size:16px;line-height:20.00px;color:#444;letter-spacing:-0.057px;">Toggle transparency</div>
<div class="t" style="left:1404.0px;top:458.8px;font-size:16px;line-height:20.00px;color:#444;letter-spacing:-0.247px;">Show all</div>
<div class="t" style="left:437px;top:191px;width:40px;height:40px;border-radius:50%;background:#4a86e8;box-shadow:0 2px 4px rgba(0,0,0,0.25);color:#fff;font-size:29px;line-height:41px;text-align:center;">1</div>
<div class="t" style="left:816.5px;top:357px;width:40px;height:40px;border-radius:50%;background:#4a86e8;box-shadow:0 2px 4px rgba(0,0,0,0.25);color:#fff;font-size:29px;line-height:41px;text-align:center;">2</div>
<div class="t" style="left:1339.7px;top:162px;width:40px;height:40px;border-radius:50%;background:#4a86e8;box-shadow:0 2px 4px rgba(0,0,0,0.25);color:#fff;font-size:29px;line-height:41px;text-align:center;">3</div>
<div class="r" style="left:1870px;top:666.5px;width:40px;height:49.5px;background:#0072a3;border-radius:5px;"></div>
<svg width="1904" height="919" style="left:0;top:0"><path d="M1896,681.5 c-6,0 -10,3.4 -10,7.6 c0,2.2 1.1,4.1 2.9,5.5 c-0.3,1.6 -1.3,2.9 -2.6,3.7 c2.4,0.1 4.5,-0.7 6,-2 c1.2,0.3 2.4,0.4 3.7,0.4 c6,0 10,-3.4 10,-7.6 s-4,-7.6 -10,-7.6z" fill="#fff"/><g fill="none" stroke="#555" stroke-width="1.3"><path d="M1791.5,712 l6,-5.5 l6,5.5 M1791.5,894.5 l6,5.5 l6,-5.5 M1705.5,797 l-5.5,6 l5.5,6 M1889,797 l5.5,6 l-5.5,6"/></g><g fill="none" stroke="#444" stroke-width="1.2"><rect x="1720.5" y="736.5" width="10" height="9.5" rx="2"/><path d="M1730.5,739.5 l4,-2 v7.5 l-4,-2"/></g><g fill="none" stroke="#444" stroke-width="1.1"><path d="M1852,742 l6.7,-6.5 l6.7,6.5 M1853.8,740.5 v7.5 h3.4 v-4 h3 v4 h3.4 v-7.5"/></g><g fill="none" stroke="#555" stroke-width="1.1"><path d="M1737.5,862 a8,8 0 1 1 -12,0.5"/><path d="M1853,862 a8,8 0 1 0 12,0.5"/></g><path d="M1722,866 l2,-5.5 l4,3.5z M1868.5,866 l-2,-5.5 l-4,3.5z" fill="#444"/><g fill="#fafafa" fill-opacity="0.85" stroke="#939393" stroke-width="1" stroke-linejoin="round"><path d="M1794.4,738.7 L1844.5,773.6 L1788.9,814 L1738.8,778.8z"/><path d="M1738.8,778.8 L1788.9,814 L1795.3,866.2 L1745.8,830.7z"/><path d="M1788.9,814 L1844.5,773.6 L1851.4,828.9 L1795.3,866.2z"/></g><path d="M1794.4,738.7 L1801,794 L1745.8,830.7 M1801,794 L1851.4,828.9" fill="none" stroke="#cfcfcf" stroke-width="1" stroke-dasharray="3 3"/><path d="M1857.5,830.7 L1789,782.7" stroke="#f4a6a6" stroke-width="1.2"/><circle cx="1789" cy="782.7" r="1.8" fill="#f4a6a6"/><path d="M1857.5,830.7 L1848.6,758" stroke="#5b78f0" stroke-width="1.2"/><path d="M1847.7,750.5 l3.2,9 l-4.6,0.6z" fill="#5b78f0"/><path d="M1857.5,830.7 L1781,886" stroke="#58e858" stroke-width="1.2"/><path d="M1773,891.5 l6.5,-7.5 l2.8,3.8z" fill="#58e858"/><text x="1771" y="776" font-size="15" fill="#f08c8c" text-anchor="middle" font-family="Liberation Sans, sans-serif">X</text><text x="1844.5" y="744.5" font-size="15" fill="#4f6ef0" text-anchor="middle" font-family="Liberation Sans, sans-serif">Z</text><text x="1761.5" y="897" font-size="17" fill="#3fdc3f" text-anchor="middle" font-family="Liberation Sans, sans-serif">y</text><text transform="translate(1791.5,778) rotate(-34) skewX(20)" font-size="7.5" fill="#666" text-anchor="middle" font-family="Liberation Sans, sans-serif">TOP</text><text transform="translate(1821,828.5) rotate(-33) skewX(-8)" font-size="8.5" fill="#777" text-anchor="middle" font-family="Liberation Sans, sans-serif" font-style="italic">FRONT</text><text transform="translate(1767,826) rotate(35) skewX(10)" font-size="7.5" fill="#888" text-anchor="middle" font-family="Liberation Sans, sans-serif">LEFT</text></svg>
</body></html>
